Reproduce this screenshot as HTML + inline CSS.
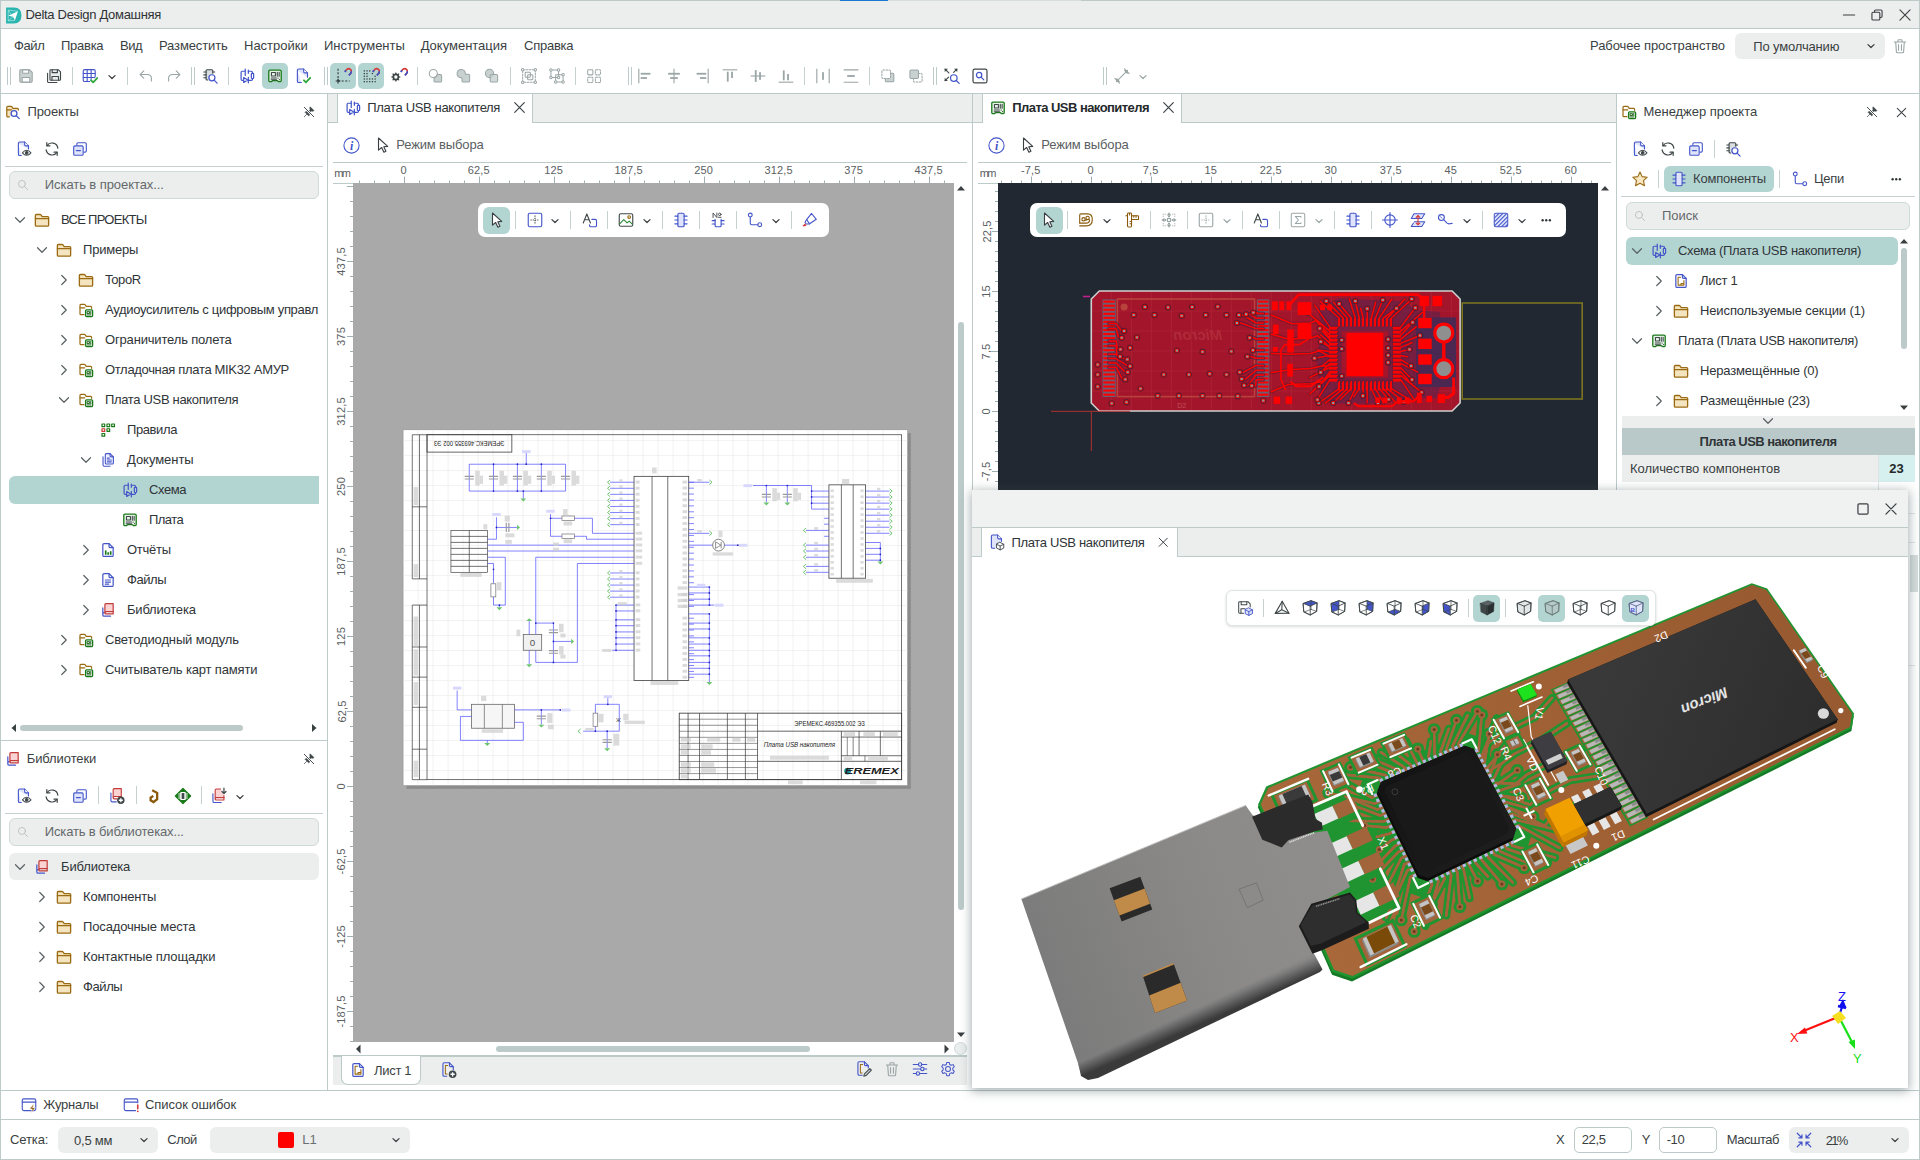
<!DOCTYPE html><html lang="ru"><head><meta charset="utf-8"><title>Delta Design</title><style>
*{margin:0;padding:0}
html,body{width:1920px;height:1160px;overflow:hidden;background:#fff}
body{font-family:"Liberation Sans",sans-serif;position:relative}
.b{position:absolute;display:block}
.t{position:absolute;white-space:nowrap}
#root{position:absolute;left:0;top:0;width:1920px;height:1160px;overflow:hidden;background:#fff}
</style></head><body><div id="root"><div class="b" style="left:0px;top:0px;width:1920px;height:29px;background:#eceeed;"></div><div class="b" style="left:0px;top:28px;width:1920px;height:1px;background:#bccaca;"></div><div class="b" style="left:840px;top:0px;width:48px;height:1px;background:#1976d2;"></div><svg class="b" style="left:4.5px;top:6.5px;" width="17" height="17" viewBox="0 0 16 16"><path d="M1 0.5H8.5Q15.5 0.5 15.5 8Q15.5 15.5 8.5 15.5H1Z" fill="#2ab5b0"/><path d="M3 8.2 12.2 4 9.3 12.6 7.6 9.2Z" fill="#fff"/><path d="M3 3 12.2 4M3 13 9.3 12.6M3 3 3 13M7.6 9.2 3 13M7.6 9.2 3 3" stroke="#bfeeea" stroke-width="0.6" fill="none"/></svg><div class="t" style="left:25.5px;top:6.0px;font-size:13px;line-height:17px;font-weight:400;color:#2f3335;letter-spacing:-0.313px;">Delta Design Домашняя</div><svg class="b" style="left:1840.0px;top:6.0px;" width="18" height="18" viewBox="0 0 16 16"><g  fill="none" stroke="#3a3f42" stroke-width="0.99" stroke-linecap="round" stroke-linejoin="round"><path d="M3 8H13"/></g></svg><svg class="b" style="left:1868.0px;top:6.0px;" width="18" height="18" viewBox="0 0 16 16"><g  fill="none" stroke="#3a3f42" stroke-width="0.99" stroke-linecap="round" stroke-linejoin="round"><rect x="3.5" y="5.5" width="7" height="7" rx="1"/><path d="M5.8 5.3V4.5Q5.8 3.5 6.8 3.5H11.5Q12.5 3.5 12.5 4.5V9.2Q12.5 10.2 11.5 10.2H10.8"/></g></svg><svg class="b" style="left:1896.0px;top:6.0px;" width="18" height="18" viewBox="0 0 16 16"><g  fill="none" stroke="#3a3f42" stroke-width="0.99" stroke-linecap="round" stroke-linejoin="round"><path d="M3.5 3.5 12.5 12.5M12.5 3.5 3.5 12.5"/></g></svg><div class="t" style="left:14.0px;top:36.9px;font-size:13px;line-height:17px;font-weight:400;color:#3a3f42;letter-spacing:-0.390px;">Файл</div><div class="t" style="left:61.0px;top:36.9px;font-size:13px;line-height:17px;font-weight:400;color:#3a3f42;letter-spacing:-0.269px;">Правка</div><div class="t" style="left:120.0px;top:36.9px;font-size:13px;line-height:17px;font-weight:400;color:#3a3f42;letter-spacing:-0.406px;">Вид</div><div class="t" style="left:159.0px;top:36.9px;font-size:13px;line-height:17px;font-weight:400;color:#3a3f42;letter-spacing:-0.119px;">Разместить</div><div class="t" style="left:244.0px;top:36.9px;font-size:13px;line-height:17px;font-weight:400;color:#3a3f42;letter-spacing:-0.005px;">Настройки</div><div class="t" style="left:324.0px;top:36.9px;font-size:13px;line-height:17px;font-weight:400;color:#3a3f42;letter-spacing:-0.032px;">Инструменты</div><div class="t" style="left:420.7px;top:36.9px;font-size:13px;line-height:17px;font-weight:400;color:#3a3f42;letter-spacing:-0.016px;">Документация</div><div class="t" style="left:524.0px;top:36.9px;font-size:13px;line-height:17px;font-weight:400;color:#3a3f42;letter-spacing:-0.242px;">Справка</div><div class="t" style="left:1590.0px;top:36.9px;font-size:13px;line-height:17px;font-weight:400;color:#3a3f42;letter-spacing:-0.087px;">Рабочее пространство</div><div class="b" style="left:1735px;top:33px;width:150px;height:26px;background:#eceeed;border-radius:6px;"></div><div class="t" style="left:1753.3px;top:38.0px;font-size:13px;line-height:17px;font-weight:400;color:#3a3f42;letter-spacing:-0.159px;">По умолчанию</div><svg class="b" style="left:1862.0px;top:37.0px;" width="18" height="18" viewBox="0 0 16 16"><g  fill="none" stroke="#3a3f42" stroke-width="1.12" stroke-linecap="round" stroke-linejoin="round"><path d="M5.3 6.8 8 9.4 10.7 6.8"/></g></svg><svg class="b" style="left:1891.0px;top:37.0px;" width="18" height="18" viewBox="0 0 16 16"><g  fill="none" stroke="#9aa5a5" stroke-width="0.99" stroke-linecap="round" stroke-linejoin="round"><path d="M3 4.5H13M6.2 4.3V3Q6.2 2.4 6.8 2.4H9.2Q9.8 2.4 9.8 3V4.3M4.2 4.7 4.8 13.2Q4.9 14 5.7 14H10.3Q11.1 14 11.2 13.2L11.8 4.7M6.7 6.8V11.8M9.3 6.8V11.8"/></g></svg><div class="b" style="left:0px;top:93px;width:1920px;height:1px;background:#bccaca;"></div><div class="b" style="left:7px;top:67px;width:1px;height:18px;background:#bccaca;"></div><div class="b" style="left:9.5px;top:67px;width:1px;height:18px;background:#bccaca;"></div><svg class="b" style="left:17.0px;top:67.0px;" width="18" height="18" viewBox="0 0 16 16"><g  fill="none" stroke="#9aa5a5" stroke-width="0.99" stroke-linecap="round" stroke-linejoin="round"><path d="M2.5 3.3Q2.5 2.5 3.3 2.5H11.3L13.5 4.7V12.7Q13.5 13.5 12.7 13.5H3.3Q2.5 13.5 2.5 12.7Z" fill="#ccd3d3"/><path d="M5 2.6V5.6H10.4V2.6Z" fill="#fff"/><path d="M4.6 13.4V9.3H11.4V13.4Z" fill="#fff"/></g></svg><svg class="b" style="left:45.0px;top:67.0px;" width="18" height="18" viewBox="0 0 16 16"><g  fill="none" stroke="#3f4749" stroke-width="0.99" stroke-linecap="round" stroke-linejoin="round"><path d="M2.3 5.5V12.8Q2.3 13.8 3.3 13.8H10.6"/><path d="M4.4 3.2Q4.4 2.4 5.2 2.4H11.8L13.8 4.4V11Q13.8 11.8 13 11.8H5.2Q4.4 11.8 4.4 11Z" fill="#e8ecec"/><path d="M6.4 2.5V5H11V2.5M6.2 11.7V8.4H12V11.7"/></g></svg><div class="b" style="left:72px;top:67px;width:1px;height:18px;background:#c6d2d2;"></div><svg class="b" style="left:81.0px;top:67.0px;" width="18" height="18" viewBox="0 0 16 16"><g  fill="none" stroke="#4355c9" stroke-width="0.99" stroke-linecap="round" stroke-linejoin="round"><rect x="2" y="2.3" width="10.6" height="10.6" rx="1.2"/><path d="M2 5.8H12.6M2 9.3H12.6M5.5 2.3V12.9M9 2.3V12.9"/></g><path d="M9 11.8 10.8 13.6 14.4 9.8" fill="none" stroke="#fff" stroke-width="3"/><path d="M9 11.8 10.8 13.6 14.4 9.8" fill="none" stroke="#2fa83c" stroke-width="1.6" stroke-linecap="round" stroke-linejoin="round"/></svg><svg class="b" style="left:103.0px;top:67.5px;" width="18" height="18" viewBox="0 0 16 16"><g  fill="none" stroke="#3a3f42" stroke-width="1.12" stroke-linecap="round" stroke-linejoin="round"><path d="M5.3 6.8 8 9.4 10.7 6.8"/></g></svg><div class="b" style="left:127px;top:67px;width:1px;height:18px;background:#c6d2d2;"></div><svg class="b" style="left:137.0px;top:67.0px;" width="18" height="18" viewBox="0 0 16 16"><g  fill="none" stroke="#9aa5a5" stroke-width="0.99" stroke-linecap="round" stroke-linejoin="round"><path d="M6 3.5 2.8 6.7 6 9.9M2.8 6.7H9.2Q12.8 6.7 12.8 10.3V12.5"/></g></svg><svg class="b" style="left:165.0px;top:67.0px;" width="18" height="18" viewBox="0 0 16 16"><g  fill="none" stroke="#9aa5a5" stroke-width="0.99" stroke-linecap="round" stroke-linejoin="round"><path d="M10 3.5 13.2 6.7 10 9.9M13.2 6.7H6.8Q3.2 6.7 3.2 10.3V12.5"/></g></svg><div class="b" style="left:191px;top:67px;width:1px;height:18px;background:#bccaca;"></div><div class="b" style="left:193.5px;top:67px;width:1px;height:18px;background:#bccaca;"></div><svg class="b" style="left:201.0px;top:67.0px;" width="18" height="18" viewBox="0 0 16 16"><g  fill="none" stroke="#3f4749" stroke-width="0.99" stroke-linecap="round" stroke-linejoin="round"><path d="M10.5 5.5V3.4Q10.5 2.5 9.6 2.5H5.4Q4.5 2.5 4.5 3.4V10.6Q4.5 11.5 5.4 11.5H6" fill="#d9dede"/><path d="M2.5 4.5H4.5M2.5 7H4.5M2.5 9.5H4.5M10.5 4.5H12.2"/></g><g  fill="none" stroke="#4355c9" stroke-width="1.08" stroke-linecap="round" stroke-linejoin="round"><circle cx="9.7" cy="9.6" r="2.7" fill="#fff"/><path d="M11.7 11.7 14.3 14.4"/></g></svg><div class="b" style="left:228px;top:67px;width:1px;height:18px;background:#c6d2d2;"></div><svg class="b" style="left:237.5px;top:67.0px;" width="18" height="18" viewBox="0 0 16 16"><g transform="translate(8 8) scale(0.92) translate(-8 -8)"><g  fill="none" stroke="#4355c9" stroke-width="1.17" stroke-linecap="round" stroke-linejoin="round"><path d="M6.3 3.4H3.4Q2.3 3.4 2.3 4.5V11.2Q2.3 12.3 3.4 12.3H4.2M9.3 3.4H12.2Q13.3 3.4 13.3 4.5V5M9.3 12.3H12.2Q13.3 12.3 13.3 11.2V10.6"/><path d="M6.3 1.4V7.4M9.3 2.4V5.4M9.3 9.2V14.6"/><rect x="12.2" y="5.4" width="2.2" height="5" rx="0.6"/><path d="M4.8 9.4V14.2L8.8 11.8Z"/></g></g></svg><div class="b" style="left:262px;top:63px;width:26px;height:26px;background:#b3d5d2;border-radius:5px;"></div><svg class="b" style="left:266.0px;top:67.0px;" width="18" height="18" viewBox="0 0 16 16"><g transform="translate(8 8) scale(0.92) translate(-8 -8)"><g  fill="none" stroke="#1a7a1a" stroke-width="1.27" stroke-linecap="round" stroke-linejoin="round"><path d="M2 3.5Q2 2.3 3.2 2.3H12.8Q14 2.3 14 3.5V12.3Q14 13.5 12.8 13.5H11.2L10.4 12.5H5.6L4.8 13.5H3.2Q2 13.5 2 12.3Z" fill="#e8f4e8"/></g><g  fill="none" stroke="#3f4749" stroke-width="1.06" stroke-linecap="round" stroke-linejoin="round"><rect x="4.6" y="4.6" width="3.8" height="3.4"/><path d="M10.2 4.4V8.2M12 4.4V8.2M4.4 10H9.4M4.4 11.6H9.4"/></g><circle cx="11" cy="10" r="0.6" fill="#3f4749"/><circle cx="12.4" cy="11.4" r="0.6" fill="#3f4749"/></g></svg><svg class="b" style="left:294.0px;top:67.0px;" width="18" height="18" viewBox="0 0 16 16"><g  fill="none" stroke="#4355c9" stroke-width="0.99" stroke-linecap="round" stroke-linejoin="round"><path d="M3 3Q3 1.8 4.2 1.8H8.6L12 5.2V9M6.5 13.8H4.2Q3 13.8 3 12.6V3" fill="#dfe4fb"/><path d="M8.6 1.8V4.2Q8.6 5.2 9.6 5.2H12" fill="#fff"/></g><path d="M8.8 11.8 10.6 13.6 14.4 9.6" fill="none" stroke="#fff" stroke-width="3"/><path d="M8.8 11.8 10.6 13.6 14.4 9.6" fill="none" stroke="#2fa83c" stroke-width="1.6" stroke-linecap="round" stroke-linejoin="round"/></svg><div class="b" style="left:324px;top:67px;width:1px;height:18px;background:#bccaca;"></div><div class="b" style="left:326.5px;top:67px;width:1px;height:18px;background:#bccaca;"></div><div class="b" style="left:330px;top:63px;width:26px;height:26px;background:#b3d5d2;border-radius:5px;"></div><svg class="b" style="left:334.0px;top:67.0px;" width="18" height="18" viewBox="0 0 16 16"><g stroke-linecap="butt" fill="none" stroke="#2f3537" stroke-width="0.99" stroke-linecap="round" stroke-linejoin="round"><path d="M3.6 1.5V12.5" stroke-dasharray="1.8 1.4"/><path d="M3.6 12.5H14" stroke-dasharray="1.8 1.4"/><path d="M1.5 12.5H5.7M3.6 10.4V14.6"/></g><g transform="translate(2.6 -0.2) scale(0.86)"><path d="M8.2 5.1 10.3 2.6A2.9 2.9 0 0 1 14.6 6.3L12.5 8.8" fill="none" stroke="#d43a3a" stroke-width="1.7"/><path d="M13.6 7.5 12.4 8.9M8.1 5.2 9.4 3.7" fill="none" stroke="#3a52c8" stroke-width="1.8"/><path d="M14.9 4.6A2.9 2.9 0 0 1 14.6 6.3L13.6 7.5" fill="none" stroke="#3a52c8" stroke-width="1.7"/></g></svg><div class="b" style="left:358px;top:63px;width:26px;height:26px;background:#b3d5d2;border-radius:5px;"></div><svg class="b" style="left:362.0px;top:67.0px;" width="18" height="18" viewBox="0 0 16 16"><rect x="1.5" y="2.9" width="1.1" height="1.1" fill="#2f3537"/><rect x="1.5" y="5.3" width="1.1" height="1.1" fill="#2f3537"/><rect x="1.5" y="7.7" width="1.1" height="1.1" fill="#2f3537"/><rect x="1.5" y="10.1" width="1.1" height="1.1" fill="#2f3537"/><rect x="1.5" y="12.5" width="1.1" height="1.1" fill="#2f3537"/><rect x="3.9" y="2.9" width="1.1" height="1.1" fill="#2f3537"/><rect x="3.9" y="5.3" width="1.1" height="1.1" fill="#2f3537"/><rect x="3.9" y="7.7" width="1.1" height="1.1" fill="#2f3537"/><rect x="3.9" y="10.1" width="1.1" height="1.1" fill="#2f3537"/><rect x="3.9" y="12.5" width="1.1" height="1.1" fill="#2f3537"/><rect x="6.3" y="2.9" width="1.1" height="1.1" fill="#2f3537"/><rect x="6.3" y="10.1" width="1.1" height="1.1" fill="#2f3537"/><rect x="6.3" y="12.5" width="1.1" height="1.1" fill="#2f3537"/><rect x="8.7" y="5.3" width="1.1" height="1.1" fill="#2f3537"/><rect x="8.7" y="10.1" width="1.1" height="1.1" fill="#2f3537"/><rect x="8.7" y="12.5" width="1.1" height="1.1" fill="#2f3537"/><rect x="11.1" y="7.7" width="1.1" height="1.1" fill="#2f3537"/><rect x="11.1" y="10.1" width="1.1" height="1.1" fill="#2f3537"/><rect x="11.1" y="12.5" width="1.1" height="1.1" fill="#2f3537"/><g transform="translate(2.6 -0.2) scale(0.86)"><path d="M8.2 5.1 10.3 2.6A2.9 2.9 0 0 1 14.6 6.3L12.5 8.8" fill="none" stroke="#d43a3a" stroke-width="1.7"/><path d="M13.6 7.5 12.4 8.9M8.1 5.2 9.4 3.7" fill="none" stroke="#3a52c8" stroke-width="1.8"/><path d="M14.9 4.6A2.9 2.9 0 0 1 14.6 6.3L13.6 7.5" fill="none" stroke="#3a52c8" stroke-width="1.7"/></g></svg><svg class="b" style="left:390.0px;top:67.0px;" width="18" height="18" viewBox="0 0 16 16"><g transform="translate(0.6 0.4)"><path d="M5.2 7.2 6.1 7.2 6.4 8.3 7.4 8.7 8.4 8.1 9.1 8.8 8.5 9.8 8.9 10.8 10 11.1 10 12.1 8.9 12.4 8.5 13.4 9.1 14.4 8.4 15.1 7.4 14.5 6.4 14.9 6.1 16 5.2 16 4.9 14.9 3.9 14.5 2.9 15.1 2.2 14.4 2.8 13.4 2.4 12.4 1.3 12.1 1.3 11.1 2.4 10.8 2.8 9.8 2.2 8.8 2.9 8.1 3.9 8.7 4.9 8.3Z" fill="#3f4749" transform="translate(-0.6 -2.2) scale(0.92)"/><circle cx="4.6" cy="8.5" r="1.5" fill="#fff"/></g><g transform="translate(2.6 -0.2) scale(0.86)"><path d="M8.2 5.1 10.3 2.6A2.9 2.9 0 0 1 14.6 6.3L12.5 8.8" fill="none" stroke="#d43a3a" stroke-width="1.7"/><path d="M13.6 7.5 12.4 8.9M8.1 5.2 9.4 3.7" fill="none" stroke="#3a52c8" stroke-width="1.8"/><path d="M14.9 4.6A2.9 2.9 0 0 1 14.6 6.3L13.6 7.5" fill="none" stroke="#3a52c8" stroke-width="1.7"/></g></svg><div class="b" style="left:417px;top:67px;width:1px;height:18px;background:#c6d2d2;"></div><svg class="b" style="left:427.0px;top:67.0px;" width="18" height="18" viewBox="0 0 16 16"><g  fill="none" stroke="#9aa5a5" stroke-width="0.9" stroke-linecap="round" stroke-linejoin="round"><circle cx="5.6" cy="5.8" r="3.6"/><path d="M9.2 6.6H12Q13 6.6 13 7.6V12.4Q13 13.4 12 13.4H7.2Q6.2 13.4 6.2 12.4V9.4A3.6 3.6 0 0 0 9.2 6.6Z" fill="#c9d0d0"/></g></svg><svg class="b" style="left:455.0px;top:67.0px;" width="18" height="18" viewBox="0 0 16 16"><g  fill="none" stroke="#9aa5a5" stroke-width="0.9" stroke-linecap="round" stroke-linejoin="round"><path d="M9.2 6.4H12Q13 6.4 13 7.4V12.4Q13 13.4 12 13.4H7.2Q6.2 13.4 6.2 12.4V9.5A3.7 3.7 0 1 1 9.2 6.4Z" fill="#c9d0d0"/></g></svg><svg class="b" style="left:483.0px;top:67.0px;" width="18" height="18" viewBox="0 0 16 16"><g  fill="none" stroke="#9aa5a5" stroke-width="0.9" stroke-linecap="round" stroke-linejoin="round"><circle cx="5.8" cy="5.8" r="3.7" fill="#c9d0d0"/><rect x="6.4" y="6.6" width="6.6" height="6.8" rx="1" fill="#c9d0d0" fill-opacity="0.8"/></g></svg><div class="b" style="left:510px;top:67px;width:1px;height:18px;background:#c6d2d2;"></div><svg class="b" style="left:520.0px;top:67.0px;" width="18" height="18" viewBox="0 0 16 16"><g  fill="none" stroke="#9aa5a5" stroke-width="0.9" stroke-linecap="round" stroke-linejoin="round"><rect x="2.4" y="2.4" width="11.2" height="11.2" stroke-dasharray="1.6 1.2"/><rect x="4.6" y="4.6" width="4.6" height="4.6" rx="0.8" fill="#fff"/><rect x="6.8" y="6.8" width="4.6" height="4.6" rx="0.8"/></g><circle cx="2.4" cy="2.4" r="1.1" fill="#fff" stroke="#9aa5a5" stroke-width="0.9"/><circle cx="13.6" cy="2.4" r="1.1" fill="#fff" stroke="#9aa5a5" stroke-width="0.9"/><circle cx="2.4" cy="13.6" r="1.1" fill="#fff" stroke="#9aa5a5" stroke-width="0.9"/><circle cx="13.6" cy="13.6" r="1.1" fill="#fff" stroke="#9aa5a5" stroke-width="0.9"/></svg><svg class="b" style="left:548.0px;top:67.0px;" width="18" height="18" viewBox="0 0 16 16"><g  fill="none" stroke="#9aa5a5" stroke-width="0.9" stroke-linecap="round" stroke-linejoin="round"><rect x="2.6" y="2.6" width="6.8" height="6.8"/><rect x="6.8" y="6.8" width="6.6" height="6.6"/></g><circle cx="2.6" cy="2.6" r="1.1" fill="#fff" stroke="#9aa5a5" stroke-width="0.9"/><circle cx="9.4" cy="2.6" r="1.1" fill="#fff" stroke="#9aa5a5" stroke-width="0.9"/><circle cx="2.6" cy="9.4" r="1.1" fill="#fff" stroke="#9aa5a5" stroke-width="0.9"/><circle cx="9.4" cy="9.4" r="1.1" fill="#fff" stroke="#9aa5a5" stroke-width="0.9"/><circle cx="13.4" cy="6.8" r="1.1" fill="#fff" stroke="#9aa5a5" stroke-width="0.9"/><circle cx="6.8" cy="13.4" r="1.1" fill="#fff" stroke="#9aa5a5" stroke-width="0.9"/><circle cx="13.4" cy="13.4" r="1.1" fill="#fff" stroke="#9aa5a5" stroke-width="0.9"/></svg><div class="b" style="left:575px;top:67px;width:1px;height:18px;background:#c6d2d2;"></div><svg class="b" style="left:585.0px;top:67.0px;" width="18" height="18" viewBox="0 0 16 16"><g  fill="none" stroke="#9aa5a5" stroke-width="0.9" stroke-linecap="round" stroke-linejoin="round"><rect x="2.4" y="2.4" width="4.6" height="4.6" rx="0.8"/><rect x="9.2" y="2.4" width="4.6" height="4.6" rx="0.8" stroke-dasharray="1.5 1.1"/><rect x="2.4" y="9.2" width="4.6" height="4.6" rx="0.8" stroke-dasharray="1.5 1.1"/><rect x="9.2" y="9.2" width="4.6" height="4.6" rx="0.8" stroke-dasharray="1.5 1.1"/></g></svg><div class="b" style="left:628px;top:67px;width:1px;height:18px;background:#bccaca;"></div><div class="b" style="left:630.5px;top:67px;width:1px;height:18px;background:#bccaca;"></div><svg class="b" style="left:636.0px;top:67.0px;" width="18" height="18" viewBox="0 0 16 16"><g stroke="#9aa5a5" stroke-width="1" fill="none"><path d="M2.5 1.5V14.5"/></g><g fill="#9aa5a5"><rect x="4.2" y="5.2" width="8.6" height="1.6"/><rect x="4.2" y="9" width="5.6" height="1.6"/></g></svg><svg class="b" style="left:664.5px;top:67.0px;" width="18" height="18" viewBox="0 0 16 16"><g stroke="#9aa5a5" stroke-width="1" fill="none"><path d="M8 1.5V14.5"/></g><g fill="#9aa5a5"><rect x="2.8" y="5.2" width="10.4" height="1.6"/><rect x="4.6" y="9" width="6.8" height="1.6"/></g></svg><svg class="b" style="left:693.0px;top:67.0px;" width="18" height="18" viewBox="0 0 16 16"><g stroke="#9aa5a5" stroke-width="1" fill="none"><path d="M13.5 1.5V14.5"/></g><g fill="#9aa5a5"><rect x="3.2" y="5.2" width="8.6" height="1.6"/><rect x="6.2" y="9" width="5.6" height="1.6"/></g></svg><svg class="b" style="left:720.5px;top:67.0px;" width="18" height="18" viewBox="0 0 16 16"><g stroke="#9aa5a5" stroke-width="1" fill="none"><path d="M1.5 2.5H14.5"/></g><g fill="#9aa5a5"><rect x="5.2" y="4.2" width="1.6" height="8.8"/><rect x="9" y="4.2" width="1.6" height="5.6"/></g></svg><svg class="b" style="left:748.5px;top:67.0px;" width="18" height="18" viewBox="0 0 16 16"><g stroke="#9aa5a5" stroke-width="1" fill="none"><path d="M1.5 8H14.5"/></g><g fill="#9aa5a5"><rect x="5.2" y="2.8" width="1.6" height="10.4"/><rect x="9" y="4.6" width="1.6" height="6.8"/></g></svg><svg class="b" style="left:776.5px;top:67.0px;" width="18" height="18" viewBox="0 0 16 16"><g stroke="#9aa5a5" stroke-width="1" fill="none"><path d="M1.5 13.5H14.5"/></g><g fill="#9aa5a5"><rect x="5.2" y="3" width="1.6" height="8.8"/><rect x="9" y="6.2" width="1.6" height="5.6"/></g></svg><div class="b" style="left:804px;top:67px;width:1px;height:18px;background:#c6d2d2;"></div><svg class="b" style="left:813.5px;top:67.0px;" width="18" height="18" viewBox="0 0 16 16"><g stroke="#9aa5a5" stroke-width="1" fill="none"><path d="M2.5 1.5V14.5M13.5 1.5V14.5"/></g><g fill="#9aa5a5"><rect x="7.2" y="4.6" width="1.6" height="6.8"/></g></svg><svg class="b" style="left:842.0px;top:67.0px;" width="18" height="18" viewBox="0 0 16 16"><g stroke="#9aa5a5" stroke-width="1" fill="none"><path d="M1.5 2.5H14.5M1.5 13.5H14.5"/></g><g fill="#9aa5a5"><rect x="4.6" y="7.2" width="6.8" height="1.6"/></g></svg><div class="b" style="left:869px;top:67px;width:1px;height:18px;background:#c6d2d2;"></div><svg class="b" style="left:879.0px;top:67.0px;" width="18" height="18" viewBox="0 0 16 16"><g  fill="none" stroke="#9aa5a5" stroke-width="0.9" stroke-linecap="round" stroke-linejoin="round"><rect x="5.6" y="5.6" width="7.6" height="7.6" rx="1" fill="#c9d0d0"/><rect x="2.6" y="2.6" width="7.6" height="7.6" rx="1" fill="#fff" stroke-dasharray="1.6 1.2"/></g></svg><svg class="b" style="left:907.0px;top:67.0px;" width="18" height="18" viewBox="0 0 16 16"><g  fill="none" stroke="#9aa5a5" stroke-width="0.9" stroke-linecap="round" stroke-linejoin="round"><rect x="5.8" y="5.8" width="7.6" height="7.6" rx="1" stroke-dasharray="1.6 1.2"/><rect x="2.6" y="2.6" width="7.6" height="7.6" rx="1" fill="#c9d0d0"/></g></svg><div class="b" style="left:933px;top:67px;width:1px;height:18px;background:#bccaca;"></div><div class="b" style="left:935.5px;top:67px;width:1px;height:18px;background:#bccaca;"></div><svg class="b" style="left:943.0px;top:67.0px;" width="18" height="18" viewBox="0 0 16 16"><g  fill="none" stroke="#3f4749" stroke-width="0.99" stroke-linecap="round" stroke-linejoin="round"><path d="M1.8 1.8 5.2 5.2M12.4 1.8 9.4 4.8M1.8 12.2 5 9"/></g><path d="M1.5 4.4V1.5H4.4ZM9.8 1.5H12.7V4.4ZM1.5 9.6V12.5H4.4Z" fill="#3f4749" transform="translate(0 0)"/><g  fill="none" stroke="#4355c9" stroke-width="1.08" stroke-linecap="round" stroke-linejoin="round"><circle cx="9.6" cy="9.8" r="2.9" fill="#fff"/><path d="M11.8 12 14.4 14.6"/></g></svg><svg class="b" style="left:971.0px;top:67.0px;" width="18" height="18" viewBox="0 0 16 16"><g  fill="none" stroke="#3f4749" stroke-width="1.08" stroke-linecap="round" stroke-linejoin="round"><rect x="1.8" y="1.8" width="12.4" height="12.4" rx="1.6" fill="#fff"/></g><g  fill="none" stroke="#4355c9" stroke-width="1.08" stroke-linecap="round" stroke-linejoin="round"><circle cx="7.2" cy="7.2" r="2.4"/><path d="M9 9 11.4 11.4"/></g></svg><div class="b" style="left:1103px;top:67px;width:1px;height:18px;background:#bccaca;"></div><div class="b" style="left:1105.5px;top:67px;width:1px;height:18px;background:#bccaca;"></div><svg class="b" style="left:1113.0px;top:67.0px;" width="18" height="18" viewBox="0 0 16 16"><g  fill="none" stroke="#9aa5a5" stroke-width="0.9" stroke-linecap="round" stroke-linejoin="round"><path d="M3 13 13 3M1.6 10.2 5.8 14.4M10.2 1.6 14.4 5.8"/><path d="M3.2 10.4V12.8H5.6ZM12.8 5.6V3.2H10.4Z" fill="#9aa5a5"/></g></svg><svg class="b" style="left:1134.0px;top:68.0px;" width="18" height="18" viewBox="0 0 16 16"><g  fill="none" stroke="#9aa5a5" stroke-width="1.12" stroke-linecap="round" stroke-linejoin="round"><path d="M5.3 6.8 8 9.4 10.7 6.8"/></g></svg><div class="b" style="left:0px;top:0px;width:1px;height:1160px;background:#bccaca;"></div><div class="b" style="left:327px;top:94px;width:1px;height:996px;background:#bccaca;"></div><svg class="b" style="left:4.0px;top:102.5px;" width="18" height="18" viewBox="0 0 16 16"><g transform="translate(8 8) scale(0.92) translate(-8 -8)"><g  fill="none" stroke="#9a6b12" stroke-width="1.17" stroke-linecap="round" stroke-linejoin="round"><path d="M13.2 6V5.4Q13.2 4.5 12.3 4.5H8L7 3Q6.7 2.6 6.2 2.6H2.9Q2 2.6 2 3.5V11.8Q2 12.7 2.9 12.7H4.5" fill="#f4e4bf"/><path d="M2 5.9H6.5"/></g><g  fill="none" stroke="#4355c9" stroke-width="1.27" stroke-linecap="round" stroke-linejoin="round"><circle cx="9" cy="9.4" r="2.8" fill="#fff"/><path d="M11.1 11.5 14 14.4"/></g></g></svg><div class="t" style="left:27.6px;top:103.0px;font-size:13px;line-height:17px;font-weight:400;color:#3a3f42;letter-spacing:-0.166px;">Проекты</div><svg class="b" style="left:301.5px;top:104.5px;" width="14" height="14" viewBox="0 0 16 16"><g  fill="none" stroke="#3f4749" stroke-width="0.81" stroke-linecap="round" stroke-linejoin="round"><path d="M9.6 2.4 13.6 6.4 12.6 7 10.6 6.8 8.4 9 8.6 11.6 7.6 12.4 3.6 8.4 4.4 7.4 7 7.6 9.2 5.4 9 3.4Z" fill="#3f4749"/><path d="M5.6 10.4 2.6 13.4"/></g><path d="M2.6 2.6 13.4 13.4" stroke="#fff" stroke-width="2.6"/><path d="M2.6 2.6 13.4 13.4" stroke="#3f4749" stroke-width="1.1" stroke-linecap="round"/></svg><svg class="b" style="left:15.0px;top:139.5px;" width="18" height="18" viewBox="0 0 16 16"><g  fill="none" stroke="#4355c9" stroke-width="0.99" stroke-linecap="round" stroke-linejoin="round"><path d="M3 3Q3 1.8 4.2 1.8H8.6L12 5.2V8M5.6 13.8H4.2Q3 13.8 3 12.6V3" fill="#dfe4fb"/><path d="M8.6 1.8V4.2Q8.6 5.2 9.6 5.2H12" fill="#fff"/></g><g  fill="none" stroke="#3f4749" stroke-width="0.9" stroke-linecap="round" stroke-linejoin="round"><path d="M6.6 11.4Q8.4 9.2 10.4 9.2Q12.4 9.2 14.2 11.4Q12.4 13.6 10.4 13.6Q8.4 13.6 6.6 11.4Z" fill="#fff"/><circle cx="10.4" cy="11.4" r="1.2" fill="#3f4749"/></g></svg><svg class="b" style="left:43.0px;top:139.5px;" width="18" height="18" viewBox="0 0 16 16"><g  fill="none" stroke="#3f4749" stroke-width="1.08" stroke-linecap="round" stroke-linejoin="round"><path d="M13.2 7.2A5.3 5.3 0 0 0 3.6 5M2.8 8.8A5.3 5.3 0 0 0 12.4 11"/><path d="M3.4 2.4V5.2H6.2M12.6 13.6V10.8H9.8"/></g></svg><svg class="b" style="left:71.0px;top:139.5px;" width="18" height="18" viewBox="0 0 16 16"><g  fill="none" stroke="#4355c9" stroke-width="0.99" stroke-linecap="round" stroke-linejoin="round"><path d="M5.2 4.2V3.4Q5.2 2.4 6.2 2.4H12.6Q13.6 2.4 13.6 3.4V9.8Q13.6 10.8 12.6 10.8H11.8"/><rect x="2.4" y="5.2" width="8.4" height="8.4" rx="1" fill="#dfe4fb"/><path d="M4.8 9.4H8.4"/></g></svg><div class="b" style="left:5px;top:166px;width:318px;height:1px;background:#c6d2d2;"></div><div class="b" style="left:9px;top:171.3px;width:310px;height:27.4px;background:#eceeed;border:1px solid #cfdada;box-sizing:border-box;border-radius:6px;"></div><svg class="b" style="left:16.0px;top:178.0px;" width="14" height="14" viewBox="0 0 16 16"><g  fill="none" stroke="#b5bebe" stroke-width="0.99" stroke-linecap="round" stroke-linejoin="round"><circle cx="6.8" cy="6.8" r="4"/><path d="M9.8 9.8 13.4 13.4"/></g></svg><div class="t" style="left:44.8px;top:176.2px;font-size:13px;line-height:17px;font-weight:400;color:#64696c;letter-spacing:-0.077px;">Искать в проектах...</div><div class="b" style="left:0;top:200px;width:319px;height:500px;overflow:hidden"><svg class="b" style="left:11.0px;top:10.5px;" width="18" height="18" viewBox="0 0 16 16"><g  fill="none" stroke="#5a6264" stroke-width="1.08" stroke-linecap="round" stroke-linejoin="round"><path d="M4 6 8 10 12 6"/></g></svg><svg class="b" style="left:33px;top:10.5px;" width="18" height="18" viewBox="0 0 16 16"><g transform="translate(8 8) scale(0.92) translate(-8 -8)"><g  fill="none" stroke="#9a6b12" stroke-width="1.27" stroke-linecap="round" stroke-linejoin="round"><path d="M1.6 4V13Q1.6 13.9 2.5 13.9H13.5Q14.4 13.9 14.4 13V5.6Q14.4 4.7 13.5 4.7H8.2L7 3.1Q6.7 2.7 6.2 2.7H2.5Q1.6 2.7 1.6 3.6Z" fill="#f4e4bf"/><path d="M1.6 6.6H14.4"/></g></g></svg><div class="t" style="left:61.0px;top:11.0px;font-size:13px;line-height:17px;font-weight:400;color:#2f3437;letter-spacing:-0.713px;">ВСЕ ПРОЕКТЫ</div><svg class="b" style="left:33.0px;top:40.5px;" width="18" height="18" viewBox="0 0 16 16"><g  fill="none" stroke="#5a6264" stroke-width="1.08" stroke-linecap="round" stroke-linejoin="round"><path d="M4 6 8 10 12 6"/></g></svg><svg class="b" style="left:55px;top:40.5px;" width="18" height="18" viewBox="0 0 16 16"><g transform="translate(8 8) scale(0.92) translate(-8 -8)"><g  fill="none" stroke="#9a6b12" stroke-width="1.27" stroke-linecap="round" stroke-linejoin="round"><path d="M1.6 4V13Q1.6 13.9 2.5 13.9H13.5Q14.4 13.9 14.4 13V5.6Q14.4 4.7 13.5 4.7H8.2L7 3.1Q6.7 2.7 6.2 2.7H2.5Q1.6 2.7 1.6 3.6Z" fill="#f4e4bf"/><path d="M1.6 6.6H14.4"/></g></g></svg><div class="t" style="left:83.0px;top:41.0px;font-size:13px;line-height:17px;font-weight:400;color:#2f3437;letter-spacing:-0.196px;">Примеры</div><svg class="b" style="left:55.0px;top:70.5px;" width="18" height="18" viewBox="0 0 16 16"><g  fill="none" stroke="#5a6264" stroke-width="1.08" stroke-linecap="round" stroke-linejoin="round"><path d="M6 4 10 8 6 12"/></g></svg><svg class="b" style="left:77px;top:70.5px;" width="18" height="18" viewBox="0 0 16 16"><g transform="translate(8 8) scale(0.92) translate(-8 -8)"><g  fill="none" stroke="#9a6b12" stroke-width="1.27" stroke-linecap="round" stroke-linejoin="round"><path d="M1.6 4V13Q1.6 13.9 2.5 13.9H13.5Q14.4 13.9 14.4 13V5.6Q14.4 4.7 13.5 4.7H8.2L7 3.1Q6.7 2.7 6.2 2.7H2.5Q1.6 2.7 1.6 3.6Z" fill="#f4e4bf"/><path d="M1.6 6.6H14.4"/></g></g></svg><div class="t" style="left:105.0px;top:71.0px;font-size:13px;line-height:17px;font-weight:400;color:#2f3437;letter-spacing:-0.335px;">TopoR</div><svg class="b" style="left:55.0px;top:100.5px;" width="18" height="18" viewBox="0 0 16 16"><g  fill="none" stroke="#5a6264" stroke-width="1.08" stroke-linecap="round" stroke-linejoin="round"><path d="M6 4 10 8 6 12"/></g></svg><svg class="b" style="left:77px;top:100.5px;" width="18" height="18" viewBox="0 0 16 16"><g transform="translate(8 8) scale(0.92) translate(-8 -8)"><g  fill="none" stroke="#9a6b12" stroke-width="1.17" stroke-linecap="round" stroke-linejoin="round"><path d="M13.4 6.4V5.4Q13.4 4.5 12.5 4.5H8.2L7.2 3Q6.9 2.6 6.4 2.6H3.1Q2.2 2.6 2.2 3.5V11.6Q2.2 12.5 3.1 12.5H6" fill="#fff"/><path d="M2.2 5.9H6.8"/></g><g  fill="none" stroke="#1a7a1a" stroke-width="1.27" stroke-linecap="round" stroke-linejoin="round"><rect x="7.6" y="7.8" width="6.8" height="6.6" rx="1" fill="#e8f4e8"/></g><g  fill="none" stroke="#145a14" stroke-width="0.85" stroke-linecap="round" stroke-linejoin="round"><rect x="9.4" y="9.6" width="2" height="1.8"/><path d="M12.6 9.4V11.6M9.2 12.8H12.6"/></g></g></svg><div class="t" style="left:105.0px;top:101.0px;font-size:13px;line-height:17px;font-weight:400;color:#2f3437;letter-spacing:-0.313px;">Аудиоусилитель с цифровым управл</div><svg class="b" style="left:55.0px;top:130.5px;" width="18" height="18" viewBox="0 0 16 16"><g  fill="none" stroke="#5a6264" stroke-width="1.08" stroke-linecap="round" stroke-linejoin="round"><path d="M6 4 10 8 6 12"/></g></svg><svg class="b" style="left:77px;top:130.5px;" width="18" height="18" viewBox="0 0 16 16"><g transform="translate(8 8) scale(0.92) translate(-8 -8)"><g  fill="none" stroke="#9a6b12" stroke-width="1.17" stroke-linecap="round" stroke-linejoin="round"><path d="M13.4 6.4V5.4Q13.4 4.5 12.5 4.5H8.2L7.2 3Q6.9 2.6 6.4 2.6H3.1Q2.2 2.6 2.2 3.5V11.6Q2.2 12.5 3.1 12.5H6" fill="#fff"/><path d="M2.2 5.9H6.8"/></g><g  fill="none" stroke="#1a7a1a" stroke-width="1.27" stroke-linecap="round" stroke-linejoin="round"><rect x="7.6" y="7.8" width="6.8" height="6.6" rx="1" fill="#e8f4e8"/></g><g  fill="none" stroke="#145a14" stroke-width="0.85" stroke-linecap="round" stroke-linejoin="round"><rect x="9.4" y="9.6" width="2" height="1.8"/><path d="M12.6 9.4V11.6M9.2 12.8H12.6"/></g></g></svg><div class="t" style="left:105.0px;top:131.0px;font-size:13px;line-height:17px;font-weight:400;color:#2f3437;letter-spacing:-0.166px;">Ограничитель полета</div><svg class="b" style="left:55.0px;top:160.5px;" width="18" height="18" viewBox="0 0 16 16"><g  fill="none" stroke="#5a6264" stroke-width="1.08" stroke-linecap="round" stroke-linejoin="round"><path d="M6 4 10 8 6 12"/></g></svg><svg class="b" style="left:77px;top:160.5px;" width="18" height="18" viewBox="0 0 16 16"><g transform="translate(8 8) scale(0.92) translate(-8 -8)"><g  fill="none" stroke="#9a6b12" stroke-width="1.17" stroke-linecap="round" stroke-linejoin="round"><path d="M13.4 6.4V5.4Q13.4 4.5 12.5 4.5H8.2L7.2 3Q6.9 2.6 6.4 2.6H3.1Q2.2 2.6 2.2 3.5V11.6Q2.2 12.5 3.1 12.5H6" fill="#fff"/><path d="M2.2 5.9H6.8"/></g><g  fill="none" stroke="#1a7a1a" stroke-width="1.27" stroke-linecap="round" stroke-linejoin="round"><rect x="7.6" y="7.8" width="6.8" height="6.6" rx="1" fill="#e8f4e8"/></g><g  fill="none" stroke="#145a14" stroke-width="0.85" stroke-linecap="round" stroke-linejoin="round"><rect x="9.4" y="9.6" width="2" height="1.8"/><path d="M12.6 9.4V11.6M9.2 12.8H12.6"/></g></g></svg><div class="t" style="left:105.0px;top:161.0px;font-size:13px;line-height:17px;font-weight:400;color:#2f3437;letter-spacing:-0.329px;">Отладочная плата MIK32 АМУР</div><svg class="b" style="left:55.0px;top:190.5px;" width="18" height="18" viewBox="0 0 16 16"><g  fill="none" stroke="#5a6264" stroke-width="1.08" stroke-linecap="round" stroke-linejoin="round"><path d="M4 6 8 10 12 6"/></g></svg><svg class="b" style="left:77px;top:190.5px;" width="18" height="18" viewBox="0 0 16 16"><g transform="translate(8 8) scale(0.92) translate(-8 -8)"><g  fill="none" stroke="#9a6b12" stroke-width="1.17" stroke-linecap="round" stroke-linejoin="round"><path d="M13.4 6.4V5.4Q13.4 4.5 12.5 4.5H8.2L7.2 3Q6.9 2.6 6.4 2.6H3.1Q2.2 2.6 2.2 3.5V11.6Q2.2 12.5 3.1 12.5H6" fill="#fff"/><path d="M2.2 5.9H6.8"/></g><g  fill="none" stroke="#1a7a1a" stroke-width="1.27" stroke-linecap="round" stroke-linejoin="round"><rect x="7.6" y="7.8" width="6.8" height="6.6" rx="1" fill="#e8f4e8"/></g><g  fill="none" stroke="#145a14" stroke-width="0.85" stroke-linecap="round" stroke-linejoin="round"><rect x="9.4" y="9.6" width="2" height="1.8"/><path d="M12.6 9.4V11.6M9.2 12.8H12.6"/></g></g></svg><div class="t" style="left:105.0px;top:191.0px;font-size:13px;line-height:17px;font-weight:400;color:#2f3437;letter-spacing:-0.333px;">Плата USB накопителя</div><svg class="b" style="left:99px;top:220.5px;" width="18" height="18" viewBox="0 0 16 16"><g transform="translate(8 8) scale(0.92) translate(-8 -8)"><g  fill="none" stroke="#1a7a1a" stroke-width="1.17" stroke-linecap="round" stroke-linejoin="round"><rect x="2.2" y="2.2" width="2.6" height="2.6"/></g><g  fill="none" stroke="#1a7a1a" stroke-width="1.17" stroke-linecap="round" stroke-linejoin="round"><rect x="7" y="2.2" width="2.6" height="2.6"/></g><g  fill="none" stroke="#1a7a1a" stroke-width="1.17" stroke-linecap="round" stroke-linejoin="round"><rect x="11.6" y="2.2" width="2.6" height="2.6"/></g><g  fill="none" stroke="#d43a3a" stroke-width="1.17" stroke-linecap="round" stroke-linejoin="round"><rect x="2.2" y="6.8" width="2.6" height="2.6"/></g><g  fill="none" stroke="#1a7a1a" stroke-width="1.17" stroke-linecap="round" stroke-linejoin="round"><rect x="7" y="6.8" width="2.6" height="2.6"/></g><g  fill="none" stroke="#1a7a1a" stroke-width="1.17" stroke-linecap="round" stroke-linejoin="round"><rect x="2.2" y="11.4" width="2.6" height="2.6"/></g></g></svg><div class="t" style="left:127.0px;top:221.0px;font-size:13px;line-height:17px;font-weight:400;color:#2f3437;letter-spacing:-0.398px;">Правила</div><svg class="b" style="left:77.0px;top:250.5px;" width="18" height="18" viewBox="0 0 16 16"><g  fill="none" stroke="#5a6264" stroke-width="1.08" stroke-linecap="round" stroke-linejoin="round"><path d="M4 6 8 10 12 6"/></g></svg><svg class="b" style="left:99px;top:250.5px;" width="18" height="18" viewBox="0 0 16 16"><g transform="translate(8 8) scale(0.92) translate(-8 -8)"><g  fill="none" stroke="#4355c9" stroke-width="1.06" stroke-linecap="round" stroke-linejoin="round"><path d="M3.2 4.8V12.8Q3.2 14 4.4 14H10"/><path d="M5.4 2.8Q5.4 1.8 6.4 1.8H10L13.2 5V10.8Q13.2 11.8 12.2 11.8H6.4Q5.4 11.8 5.4 10.8Z" fill="#eef0fd"/><path d="M10 1.8V4Q10 5 11 5H13.2"/><path d="M7.4 6.2H9.2M7.4 8H11.2M7.4 9.8H11.2"/></g></g></svg><div class="t" style="left:127.0px;top:251.0px;font-size:13px;line-height:17px;font-weight:400;color:#2f3437;letter-spacing:-0.045px;">Документы</div><div class="b" style="left:9px;top:276.0px;width:311px;height:28px;background:#b3d5d2;border-radius:6px 0 0 6px;"></div><svg class="b" style="left:121px;top:280.5px;" width="18" height="18" viewBox="0 0 16 16"><g transform="translate(8 8) scale(0.92) translate(-8 -8)"><g  fill="none" stroke="#4355c9" stroke-width="1.17" stroke-linecap="round" stroke-linejoin="round"><path d="M6.3 3.4H3.4Q2.3 3.4 2.3 4.5V11.2Q2.3 12.3 3.4 12.3H4.2M9.3 3.4H12.2Q13.3 3.4 13.3 4.5V5M9.3 12.3H12.2Q13.3 12.3 13.3 11.2V10.6"/><path d="M6.3 1.4V7.4M9.3 2.4V5.4M9.3 9.2V14.6"/><rect x="12.2" y="5.4" width="2.2" height="5" rx="0.6"/><path d="M4.8 9.4V14.2L8.8 11.8Z"/></g></g></svg><div class="t" style="left:149.0px;top:281.0px;font-size:13px;line-height:17px;font-weight:400;color:#2f3437;letter-spacing:-0.428px;">Схема</div><svg class="b" style="left:121px;top:310.5px;" width="18" height="18" viewBox="0 0 16 16"><g transform="translate(8 8) scale(0.92) translate(-8 -8)"><g  fill="none" stroke="#1a7a1a" stroke-width="1.27" stroke-linecap="round" stroke-linejoin="round"><path d="M2 3.5Q2 2.3 3.2 2.3H12.8Q14 2.3 14 3.5V12.3Q14 13.5 12.8 13.5H11.2L10.4 12.5H5.6L4.8 13.5H3.2Q2 13.5 2 12.3Z" fill="#e8f4e8"/></g><g  fill="none" stroke="#3f4749" stroke-width="1.06" stroke-linecap="round" stroke-linejoin="round"><rect x="4.6" y="4.6" width="3.8" height="3.4"/><path d="M10.2 4.4V8.2M12 4.4V8.2M4.4 10H9.4M4.4 11.6H9.4"/></g><circle cx="11" cy="10" r="0.6" fill="#3f4749"/><circle cx="12.4" cy="11.4" r="0.6" fill="#3f4749"/></g></svg><div class="t" style="left:149.0px;top:311.0px;font-size:13px;line-height:17px;font-weight:400;color:#2f3437;letter-spacing:-0.542px;">Плата</div><svg class="b" style="left:77.0px;top:340.5px;" width="18" height="18" viewBox="0 0 16 16"><g  fill="none" stroke="#5a6264" stroke-width="1.08" stroke-linecap="round" stroke-linejoin="round"><path d="M6 4 10 8 6 12"/></g></svg><svg class="b" style="left:99px;top:340.5px;" width="18" height="18" viewBox="0 0 16 16"><g transform="translate(8 8) scale(0.92) translate(-8 -8)"><g  fill="none" stroke="#4355c9" stroke-width="1.17" stroke-linecap="round" stroke-linejoin="round"><path d="M3 3Q3 1.8 4.2 1.8H9L13 5.8V13Q13 14.2 11.8 14.2H4.2Q3 14.2 3 13Z" fill="#fff"/><path d="M9 1.8V4.6Q9 5.8 10.2 5.8H13"/></g><rect x="5" y="8.4" width="1.6" height="4.2" fill="#1a7a1a"/><rect x="7.4" y="10.2" width="1.6" height="2.4" fill="#1a7a1a"/><rect x="9.8" y="9.2" width="1.6" height="3.4" fill="#1a7a1a"/></g></svg><div class="t" style="left:127.0px;top:341.0px;font-size:13px;line-height:17px;font-weight:400;color:#2f3437;letter-spacing:-0.261px;">Отчёты</div><svg class="b" style="left:77.0px;top:370.5px;" width="18" height="18" viewBox="0 0 16 16"><g  fill="none" stroke="#5a6264" stroke-width="1.08" stroke-linecap="round" stroke-linejoin="round"><path d="M6 4 10 8 6 12"/></g></svg><svg class="b" style="left:99px;top:370.5px;" width="18" height="18" viewBox="0 0 16 16"><g transform="translate(8 8) scale(0.92) translate(-8 -8)"><g  fill="none" stroke="#4355c9" stroke-width="1.17" stroke-linecap="round" stroke-linejoin="round"><path d="M3 3Q3 1.8 4.2 1.8H9L13 5.8V13Q13 14.2 11.8 14.2H4.2Q3 14.2 3 13Z" fill="#fff"/><path d="M9 1.8V4.6Q9 5.8 10.2 5.8H13"/><path d="M5.4 8H10.4M5.4 10H10.4M5.4 12H8.6"/></g></g></svg><div class="t" style="left:127.0px;top:371.0px;font-size:13px;line-height:17px;font-weight:400;color:#2f3437;letter-spacing:-0.441px;">Файлы</div><svg class="b" style="left:77.0px;top:400.5px;" width="18" height="18" viewBox="0 0 16 16"><g  fill="none" stroke="#5a6264" stroke-width="1.08" stroke-linecap="round" stroke-linejoin="round"><path d="M6 4 10 8 6 12"/></g></svg><svg class="b" style="left:99px;top:400.5px;" width="18" height="18" viewBox="0 0 16 16"><g transform="translate(8 8) scale(0.92) translate(-8 -8)"><g  fill="none" stroke="#4355c9" stroke-width="1.17" stroke-linecap="round" stroke-linejoin="round"><path d="M3 6V12.8Q3 14 4.2 14H10.4M3 11.6Q3 10.6 4.2 10.6" /></g><g  fill="none" stroke="#c23a3a" stroke-width="1.17" stroke-linecap="round" stroke-linejoin="round"><path d="M5 2.8Q5 1.8 6 1.8H13V9.6H6Q5 9.6 5 10.6Z" fill="#fbd3d3"/><path d="M5 10.6Q5 11.8 6 11.8H13V9.6"/></g></g></svg><div class="t" style="left:127.0px;top:401.0px;font-size:13px;line-height:17px;font-weight:400;color:#2f3437;letter-spacing:-0.199px;">Библиотека</div><svg class="b" style="left:55.0px;top:430.5px;" width="18" height="18" viewBox="0 0 16 16"><g  fill="none" stroke="#5a6264" stroke-width="1.08" stroke-linecap="round" stroke-linejoin="round"><path d="M6 4 10 8 6 12"/></g></svg><svg class="b" style="left:77px;top:430.5px;" width="18" height="18" viewBox="0 0 16 16"><g transform="translate(8 8) scale(0.92) translate(-8 -8)"><g  fill="none" stroke="#9a6b12" stroke-width="1.17" stroke-linecap="round" stroke-linejoin="round"><path d="M13.4 6.4V5.4Q13.4 4.5 12.5 4.5H8.2L7.2 3Q6.9 2.6 6.4 2.6H3.1Q2.2 2.6 2.2 3.5V11.6Q2.2 12.5 3.1 12.5H6" fill="#fff"/><path d="M2.2 5.9H6.8"/></g><g  fill="none" stroke="#1a7a1a" stroke-width="1.27" stroke-linecap="round" stroke-linejoin="round"><rect x="7.6" y="7.8" width="6.8" height="6.6" rx="1" fill="#e8f4e8"/></g><g  fill="none" stroke="#145a14" stroke-width="0.85" stroke-linecap="round" stroke-linejoin="round"><rect x="9.4" y="9.6" width="2" height="1.8"/><path d="M12.6 9.4V11.6M9.2 12.8H12.6"/></g></g></svg><div class="t" style="left:105.0px;top:431.0px;font-size:13px;line-height:17px;font-weight:400;color:#2f3437;letter-spacing:-0.137px;">Светодиодный модуль</div><svg class="b" style="left:55.0px;top:460.5px;" width="18" height="18" viewBox="0 0 16 16"><g  fill="none" stroke="#5a6264" stroke-width="1.08" stroke-linecap="round" stroke-linejoin="round"><path d="M6 4 10 8 6 12"/></g></svg><svg class="b" style="left:77px;top:460.5px;" width="18" height="18" viewBox="0 0 16 16"><g transform="translate(8 8) scale(0.92) translate(-8 -8)"><g  fill="none" stroke="#9a6b12" stroke-width="1.17" stroke-linecap="round" stroke-linejoin="round"><path d="M13.4 6.4V5.4Q13.4 4.5 12.5 4.5H8.2L7.2 3Q6.9 2.6 6.4 2.6H3.1Q2.2 2.6 2.2 3.5V11.6Q2.2 12.5 3.1 12.5H6" fill="#fff"/><path d="M2.2 5.9H6.8"/></g><g  fill="none" stroke="#1a7a1a" stroke-width="1.27" stroke-linecap="round" stroke-linejoin="round"><rect x="7.6" y="7.8" width="6.8" height="6.6" rx="1" fill="#e8f4e8"/></g><g  fill="none" stroke="#145a14" stroke-width="0.85" stroke-linecap="round" stroke-linejoin="round"><rect x="9.4" y="9.6" width="2" height="1.8"/><path d="M12.6 9.4V11.6M9.2 12.8H12.6"/></g></g></svg><div class="t" style="left:105.0px;top:461.0px;font-size:13px;line-height:17px;font-weight:400;color:#2f3437;letter-spacing:-0.162px;">Считыватель карт памяти</div></div><div class="b" style="left:20px;top:725px;width:223px;height:6px;background:#bccaca;border-radius:3px;"></div><svg class="b" style="left:10px;top:723px;" width="8" height="10" viewBox="0 0 8 10"><path d="M6 1 1.5 5 6 9Z" fill="#3a3f42"/></svg><svg class="b" style="left:310px;top:723px;" width="8" height="10" viewBox="0 0 8 10"><path d="M2 1 6.5 5 2 9Z" fill="#3a3f42"/></svg><div class="b" style="left:0px;top:740px;width:328px;height:1px;background:#bccaca;"></div><svg class="b" style="left:4.0px;top:749.5px;" width="18" height="18" viewBox="0 0 16 16"><g transform="translate(8 8) scale(0.92) translate(-8 -8)"><g  fill="none" stroke="#4355c9" stroke-width="1.17" stroke-linecap="round" stroke-linejoin="round"><path d="M3 6V12.8Q3 14 4.2 14H10.4M3 11.6Q3 10.6 4.2 10.6" /></g><g  fill="none" stroke="#c23a3a" stroke-width="1.17" stroke-linecap="round" stroke-linejoin="round"><path d="M5 2.8Q5 1.8 6 1.8H13V9.6H6Q5 9.6 5 10.6Z" fill="#fbd3d3"/><path d="M5 10.6Q5 11.8 6 11.8H13V9.6"/></g></g></svg><div class="t" style="left:26.7px;top:750.0px;font-size:13px;line-height:17px;font-weight:400;color:#3a3f42;letter-spacing:-0.083px;">Библиотеки</div><svg class="b" style="left:301.5px;top:751.5px;" width="14" height="14" viewBox="0 0 16 16"><g  fill="none" stroke="#3f4749" stroke-width="0.81" stroke-linecap="round" stroke-linejoin="round"><path d="M9.6 2.4 13.6 6.4 12.6 7 10.6 6.8 8.4 9 8.6 11.6 7.6 12.4 3.6 8.4 4.4 7.4 7 7.6 9.2 5.4 9 3.4Z" fill="#3f4749"/><path d="M5.6 10.4 2.6 13.4"/></g><path d="M2.6 2.6 13.4 13.4" stroke="#fff" stroke-width="2.6"/><path d="M2.6 2.6 13.4 13.4" stroke="#3f4749" stroke-width="1.1" stroke-linecap="round"/></svg><svg class="b" style="left:15.0px;top:786.5px;" width="18" height="18" viewBox="0 0 16 16"><g  fill="none" stroke="#4355c9" stroke-width="0.99" stroke-linecap="round" stroke-linejoin="round"><path d="M3 3Q3 1.8 4.2 1.8H8.6L12 5.2V8M5.6 13.8H4.2Q3 13.8 3 12.6V3" fill="#dfe4fb"/><path d="M8.6 1.8V4.2Q8.6 5.2 9.6 5.2H12" fill="#fff"/></g><g  fill="none" stroke="#3f4749" stroke-width="0.9" stroke-linecap="round" stroke-linejoin="round"><path d="M6.6 11.4Q8.4 9.2 10.4 9.2Q12.4 9.2 14.2 11.4Q12.4 13.6 10.4 13.6Q8.4 13.6 6.6 11.4Z" fill="#fff"/><circle cx="10.4" cy="11.4" r="1.2" fill="#3f4749"/></g></svg><svg class="b" style="left:43.0px;top:786.5px;" width="18" height="18" viewBox="0 0 16 16"><g  fill="none" stroke="#3f4749" stroke-width="1.08" stroke-linecap="round" stroke-linejoin="round"><path d="M13.2 7.2A5.3 5.3 0 0 0 3.6 5M2.8 8.8A5.3 5.3 0 0 0 12.4 11"/><path d="M3.4 2.4V5.2H6.2M12.6 13.6V10.8H9.8"/></g></svg><svg class="b" style="left:71.0px;top:786.5px;" width="18" height="18" viewBox="0 0 16 16"><g  fill="none" stroke="#4355c9" stroke-width="0.99" stroke-linecap="round" stroke-linejoin="round"><path d="M5.2 4.2V3.4Q5.2 2.4 6.2 2.4H12.6Q13.6 2.4 13.6 3.4V9.8Q13.6 10.8 12.6 10.8H11.8"/><rect x="2.4" y="5.2" width="8.4" height="8.4" rx="1" fill="#dfe4fb"/><path d="M4.8 9.4H8.4"/></g></svg><svg class="b" style="left:108.0px;top:786.5px;" width="18" height="18" viewBox="0 0 16 16"><g  fill="none" stroke="#4355c9" stroke-width="0.99" stroke-linecap="round" stroke-linejoin="round"><path d="M2.6 5.4V12Q2.6 13.2 3.8 13.2H7.4"/></g><g  fill="none" stroke="#c23a3a" stroke-width="0.99" stroke-linecap="round" stroke-linejoin="round"><path d="M4.6 2.4Q4.6 1.4 5.6 1.4H11.8V8.4H5.6Q4.6 8.4 4.6 9.4Z" fill="#fbd3d3"/><path d="M4.6 9.4Q4.6 10.6 5.6 10.6H8M11.8 8.4V9"/></g><circle cx="11.4" cy="11.8" r="3.3" fill="#3f4749"/><path d="M9.6 11.8H13.2M11.4 10V13.6" stroke="#fff" stroke-width="1.2"/></svg><svg class="b" style="left:145.0px;top:786.5px;" width="18" height="18" viewBox="0 0 16 16"><g stroke-linecap="butt" stroke-linejoin="miter" fill="none" stroke="#8a5a0a" stroke-width="2.07" stroke-linecap="round" stroke-linejoin="round"><path d="M6.4 2.8 10.8 5.2V10.8L7.6 13.4 5 11.8V9.4L7.4 8"/></g></svg><svg class="b" style="left:173.5px;top:786.5px;" width="18" height="18" viewBox="0 0 16 16"><path d="M8 1.2 14.8 8 8 14.8 1.2 8Z" fill="#1a7a1a" stroke="#1a7a1a" stroke-width="1" stroke-linejoin="round"/><path d="M3.8 6.2H12.2M3.8 8H12.2M3.8 9.8H12.2" stroke="#fff" stroke-width="0.9"/><rect x="5.6" y="4.4" width="4.8" height="7.2" rx="0.6" fill="#fff"/><rect x="6.8" y="5.4" width="2.4" height="5.2" fill="#3f4749"/></svg><svg class="b" style="left:210.0px;top:786.5px;" width="18" height="18" viewBox="0 0 16 16"><g  fill="none" stroke="#4355c9" stroke-width="0.99" stroke-linecap="round" stroke-linejoin="round"><path d="M2.6 6V12.6Q2.6 13.8 3.8 13.8H10"/></g><g  fill="none" stroke="#c23a3a" stroke-width="0.99" stroke-linecap="round" stroke-linejoin="round"><path d="M9.4 1.8H5.6Q4.6 1.8 4.6 2.8V10.4Q4.6 9.4 5.6 9.4H12.4V7.6" fill="#fbd3d3"/><path d="M4.6 10.4Q4.6 11.6 5.6 11.6H12.4V9.4"/></g><g  fill="none" stroke="#3f4749" stroke-width="1.08" stroke-linecap="round" stroke-linejoin="round"><path d="M12.4 1V5.6M10.6 4 12.4 5.8 14.2 4"/></g></svg><svg class="b" style="left:231.0px;top:787.5px;" width="18" height="18" viewBox="0 0 16 16"><g  fill="none" stroke="#3a3f42" stroke-width="1.12" stroke-linecap="round" stroke-linejoin="round"><path d="M5.3 6.8 8 9.4 10.7 6.8"/></g></svg><div class="b" style="left:98px;top:786px;width:1px;height:18px;background:#c6d2d2;"></div><div class="b" style="left:135.5px;top:786px;width:1px;height:18px;background:#c6d2d2;"></div><div class="b" style="left:200.5px;top:786px;width:1px;height:18px;background:#c6d2d2;"></div><div class="b" style="left:5px;top:813px;width:318px;height:1px;background:#c6d2d2;"></div><div class="b" style="left:9px;top:818.3px;width:310px;height:27.4px;background:#eceeed;border:1px solid #cfdada;box-sizing:border-box;border-radius:6px;"></div><svg class="b" style="left:16.0px;top:825.0px;" width="14" height="14" viewBox="0 0 16 16"><g  fill="none" stroke="#b5bebe" stroke-width="0.99" stroke-linecap="round" stroke-linejoin="round"><circle cx="6.8" cy="6.8" r="4"/><path d="M9.8 9.8 13.4 13.4"/></g></svg><div class="t" style="left:44.8px;top:823.2px;font-size:13px;line-height:17px;font-weight:400;color:#64696c;letter-spacing:-0.154px;">Искать в библиотеках...</div><div class="b" style="left:9px;top:853px;width:310px;height:27px;background:#eceeed;border-radius:6px;"></div><svg class="b" style="left:11.0px;top:857.5px;" width="18" height="18" viewBox="0 0 16 16"><g  fill="none" stroke="#5a6264" stroke-width="1.08" stroke-linecap="round" stroke-linejoin="round"><path d="M4 6 8 10 12 6"/></g></svg><svg class="b" style="left:33px;top:857.5px;" width="18" height="18" viewBox="0 0 16 16"><g transform="translate(8 8) scale(0.92) translate(-8 -8)"><g  fill="none" stroke="#4355c9" stroke-width="1.17" stroke-linecap="round" stroke-linejoin="round"><path d="M3 6V12.8Q3 14 4.2 14H10.4M3 11.6Q3 10.6 4.2 10.6" /></g><g  fill="none" stroke="#c23a3a" stroke-width="1.17" stroke-linecap="round" stroke-linejoin="round"><path d="M5 2.8Q5 1.8 6 1.8H13V9.6H6Q5 9.6 5 10.6Z" fill="#fbd3d3"/><path d="M5 10.6Q5 11.8 6 11.8H13V9.6"/></g></g></svg><div class="t" style="left:61.0px;top:858.0px;font-size:13px;line-height:17px;font-weight:400;color:#2f3437;letter-spacing:-0.149px;">Библиотека</div><svg class="b" style="left:33.0px;top:887.6px;" width="18" height="18" viewBox="0 0 16 16"><g  fill="none" stroke="#5a6264" stroke-width="1.08" stroke-linecap="round" stroke-linejoin="round"><path d="M6 4 10 8 6 12"/></g></svg><svg class="b" style="left:55px;top:887.6px;" width="18" height="18" viewBox="0 0 16 16"><g transform="translate(8 8) scale(0.92) translate(-8 -8)"><g  fill="none" stroke="#9a6b12" stroke-width="1.27" stroke-linecap="round" stroke-linejoin="round"><path d="M1.6 4V13Q1.6 13.9 2.5 13.9H13.5Q14.4 13.9 14.4 13V5.6Q14.4 4.7 13.5 4.7H8.2L7 3.1Q6.7 2.7 6.2 2.7H2.5Q1.6 2.7 1.6 3.6Z" fill="#f4e4bf"/><path d="M1.6 6.6H14.4"/></g></g></svg><div class="t" style="left:83.0px;top:888.1px;font-size:13px;line-height:17px;font-weight:400;color:#2f3437;letter-spacing:-0.169px;">Компоненты</div><svg class="b" style="left:33.0px;top:917.6px;" width="18" height="18" viewBox="0 0 16 16"><g  fill="none" stroke="#5a6264" stroke-width="1.08" stroke-linecap="round" stroke-linejoin="round"><path d="M6 4 10 8 6 12"/></g></svg><svg class="b" style="left:55px;top:917.6px;" width="18" height="18" viewBox="0 0 16 16"><g transform="translate(8 8) scale(0.92) translate(-8 -8)"><g  fill="none" stroke="#9a6b12" stroke-width="1.27" stroke-linecap="round" stroke-linejoin="round"><path d="M1.6 4V13Q1.6 13.9 2.5 13.9H13.5Q14.4 13.9 14.4 13V5.6Q14.4 4.7 13.5 4.7H8.2L7 3.1Q6.7 2.7 6.2 2.7H2.5Q1.6 2.7 1.6 3.6Z" fill="#f4e4bf"/><path d="M1.6 6.6H14.4"/></g></g></svg><div class="t" style="left:83.0px;top:918.1px;font-size:13px;line-height:17px;font-weight:400;color:#2f3437;letter-spacing:-0.148px;">Посадочные места</div><svg class="b" style="left:33.0px;top:947.6px;" width="18" height="18" viewBox="0 0 16 16"><g  fill="none" stroke="#5a6264" stroke-width="1.08" stroke-linecap="round" stroke-linejoin="round"><path d="M6 4 10 8 6 12"/></g></svg><svg class="b" style="left:55px;top:947.6px;" width="18" height="18" viewBox="0 0 16 16"><g transform="translate(8 8) scale(0.92) translate(-8 -8)"><g  fill="none" stroke="#9a6b12" stroke-width="1.27" stroke-linecap="round" stroke-linejoin="round"><path d="M1.6 4V13Q1.6 13.9 2.5 13.9H13.5Q14.4 13.9 14.4 13V5.6Q14.4 4.7 13.5 4.7H8.2L7 3.1Q6.7 2.7 6.2 2.7H2.5Q1.6 2.7 1.6 3.6Z" fill="#f4e4bf"/><path d="M1.6 6.6H14.4"/></g></g></svg><div class="t" style="left:83.0px;top:948.1px;font-size:13px;line-height:17px;font-weight:400;color:#2f3437;letter-spacing:-0.122px;">Контактные площадки</div><svg class="b" style="left:33.0px;top:977.6px;" width="18" height="18" viewBox="0 0 16 16"><g  fill="none" stroke="#5a6264" stroke-width="1.08" stroke-linecap="round" stroke-linejoin="round"><path d="M6 4 10 8 6 12"/></g></svg><svg class="b" style="left:55px;top:977.6px;" width="18" height="18" viewBox="0 0 16 16"><g transform="translate(8 8) scale(0.92) translate(-8 -8)"><g  fill="none" stroke="#9a6b12" stroke-width="1.27" stroke-linecap="round" stroke-linejoin="round"><path d="M1.6 4V13Q1.6 13.9 2.5 13.9H13.5Q14.4 13.9 14.4 13V5.6Q14.4 4.7 13.5 4.7H8.2L7 3.1Q6.7 2.7 6.2 2.7H2.5Q1.6 2.7 1.6 3.6Z" fill="#f4e4bf"/><path d="M1.6 6.6H14.4"/></g></g></svg><div class="t" style="left:83.0px;top:978.1px;font-size:13px;line-height:17px;font-weight:400;color:#2f3437;letter-spacing:-0.401px;">Файлы</div><div class="b" style="left:328px;top:94px;width:645px;height:28px;background:#eceeed;"></div><div class="b" style="left:328px;top:122px;width:645px;height:1px;background:#bccaca;"></div><div class="b" style="left:972px;top:94px;width:1px;height:400px;background:#bccaca;"></div><div class="b" style="left:337px;top:94px;width:196px;height:29px;background:#fff;border:1px solid #bccaca;box-sizing:border-box;border-top:none;border-bottom:none;"></div><svg class="b" style="left:343.7px;top:98.5px;" width="18" height="18" viewBox="0 0 16 16"><g transform="translate(8 8) scale(0.92) translate(-8 -8)"><g  fill="none" stroke="#4355c9" stroke-width="1.17" stroke-linecap="round" stroke-linejoin="round"><path d="M6.3 3.4H3.4Q2.3 3.4 2.3 4.5V11.2Q2.3 12.3 3.4 12.3H4.2M9.3 3.4H12.2Q13.3 3.4 13.3 4.5V5M9.3 12.3H12.2Q13.3 12.3 13.3 11.2V10.6"/><path d="M6.3 1.4V7.4M9.3 2.4V5.4M9.3 9.2V14.6"/><rect x="12.2" y="5.4" width="2.2" height="5" rx="0.6"/><path d="M4.8 9.4V14.2L8.8 11.8Z"/></g></g></svg><div class="t" style="left:367.3px;top:99.0px;font-size:13px;line-height:17px;font-weight:400;color:#2f3437;letter-spacing:-0.358px;">Плата USB накопителя</div><svg class="b" style="left:511.0px;top:99.3px;" width="17" height="17" viewBox="0 0 16 16"><g  fill="none" stroke="#3a3f42" stroke-width="1.08" stroke-linecap="round" stroke-linejoin="round"><path d="M3.5 3.5 12.5 12.5M12.5 3.5 3.5 12.5"/></g></svg><svg class="b" style="left:342.3px;top:135.5px;" width="19" height="19" viewBox="0 0 16 16"><g  fill="none" stroke="#4355c9" stroke-width="0.9" stroke-linecap="round" stroke-linejoin="round"><circle cx="8" cy="8" r="6.4"/></g><text x="8.1" y="11.6" font-size="10" font-style="italic" font-weight="700" text-anchor="middle" fill="#4355c9" font-family="Liberation Serif, serif">i</text></svg><svg class="b" style="left:373.5px;top:135.8px;" width="18" height="18" viewBox="0 0 16 16"><g  fill="none" stroke="#3a3f42" stroke-width="0.99" stroke-linecap="round" stroke-linejoin="round"><path d="M4 1.8V12.6L6.8 10.2 8.8 14.4 10.6 13.6 8.7 9.5 12.2 9.2Z" fill="#fff"/></g></svg><div class="t" style="left:396.3px;top:135.9px;font-size:13px;line-height:17px;font-weight:400;color:#5a6062;letter-spacing:-0.148px;">Режим выбора</div><div class="b" style="left:333px;top:162px;width:634px;height:1px;background:#bccaca;"></div><svg class="b" style="left:0px;top:162px;" width="1920" height="21" viewBox="0 0 1920 21"><g stroke="#9fb0b0" stroke-width="1" fill="none"><path d="M359.5 18.5V21"/><path d="M374.5 18.5V21"/><path d="M389.5 18.5V21"/><path d="M404.5 14.5V21"/><path d="M419.5 18.5V21"/><path d="M434.5 18.5V21"/><path d="M449.5 18.5V21"/><path d="M464.5 18.5V21"/><path d="M479.5 14.5V21"/><path d="M494.5 18.5V21"/><path d="M509.5 18.5V21"/><path d="M524.5 18.5V21"/><path d="M539.5 18.5V21"/><path d="M554.5 14.5V21"/><path d="M569.5 18.5V21"/><path d="M584.5 18.5V21"/><path d="M599.5 18.5V21"/><path d="M614.5 18.5V21"/><path d="M629.5 14.5V21"/><path d="M644.5 18.5V21"/><path d="M659.5 18.5V21"/><path d="M674.5 18.5V21"/><path d="M689.5 18.5V21"/><path d="M704.5 14.5V21"/><path d="M719.5 18.5V21"/><path d="M734.5 18.5V21"/><path d="M749.5 18.5V21"/><path d="M764.5 18.5V21"/><path d="M779.5 14.5V21"/><path d="M794.5 18.5V21"/><path d="M809.5 18.5V21"/><path d="M824.5 18.5V21"/><path d="M839.5 18.5V21"/><path d="M854.5 14.5V21"/><path d="M869.5 18.5V21"/><path d="M884.5 18.5V21"/><path d="M899.5 18.5V21"/><path d="M914.5 18.5V21"/><path d="M929.5 14.5V21"/><path d="M944.5 18.5V21"/></g></svg><div class="t" style="left:400.6px;top:162.8px;font-size:11px;line-height:15px;font-weight:400;color:#5a6062;">0</div><div class="t" style="left:467.7px;top:162.8px;font-size:11px;line-height:15px;font-weight:400;color:#5a6062;letter-spacing:0.161px;">62,5</div><div class="t" style="left:544.2px;top:162.8px;font-size:11px;line-height:15px;font-weight:400;color:#5a6062;letter-spacing:0.184px;">125</div><div class="t" style="left:614.5px;top:162.8px;font-size:11px;line-height:15px;font-weight:400;color:#5a6062;letter-spacing:0.165px;">187,5</div><div class="t" style="left:694.2px;top:162.8px;font-size:11px;line-height:15px;font-weight:400;color:#5a6062;letter-spacing:0.184px;">250</div><div class="t" style="left:764.5px;top:162.8px;font-size:11px;line-height:15px;font-weight:400;color:#5a6062;letter-spacing:0.165px;">312,5</div><div class="t" style="left:844.2px;top:162.8px;font-size:11px;line-height:15px;font-weight:400;color:#5a6062;letter-spacing:0.184px;">375</div><div class="t" style="left:914.5px;top:162.8px;font-size:11px;line-height:15px;font-weight:400;color:#5a6062;letter-spacing:0.165px;">437,5</div><div class="b" style="left:333px;top:183px;width:20px;height:1px;background:#bccaca;"></div><div class="t" style="left:334.3px;top:166.0px;font-size:11px;line-height:15px;font-weight:400;color:#5a6062;letter-spacing:-1.663px;">mm</div><div class="b" style="left:353px;top:183px;width:601px;height:859px;background:#a9a9a9;"></div><svg class="b" style="left:0px;top:0px;" width="1920" height="1160" viewBox="0 0 1920 1160"><g stroke="#9fb0b0" stroke-width="1" fill="none"><path d="M350 1041.5H353"/><path d="M350 1026.5H353"/><path d="M347 1011.5H353"/><path d="M350 996.5H353"/><path d="M350 981.5H353"/><path d="M350 966.5H353"/><path d="M350 951.5H353"/><path d="M347 936.5H353"/><path d="M350 921.5H353"/><path d="M350 906.5H353"/><path d="M350 891.5H353"/><path d="M350 876.5H353"/><path d="M347 861.5H353"/><path d="M350 846.5H353"/><path d="M350 831.5H353"/><path d="M350 816.5H353"/><path d="M350 801.5H353"/><path d="M347 786.5H353"/><path d="M350 771.5H353"/><path d="M350 756.5H353"/><path d="M350 741.5H353"/><path d="M350 726.5H353"/><path d="M347 711.5H353"/><path d="M350 696.5H353"/><path d="M350 681.5H353"/><path d="M350 666.5H353"/><path d="M350 651.5H353"/><path d="M347 636.5H353"/><path d="M350 621.5H353"/><path d="M350 606.5H353"/><path d="M350 591.5H353"/><path d="M350 576.5H353"/><path d="M347 561.5H353"/><path d="M350 546.5H353"/><path d="M350 531.5H353"/><path d="M350 516.5H353"/><path d="M350 501.5H353"/><path d="M347 486.5H353"/><path d="M350 471.5H353"/><path d="M350 456.5H353"/><path d="M350 441.5H353"/><path d="M350 426.5H353"/><path d="M347 411.5H353"/><path d="M350 396.5H353"/><path d="M350 381.5H353"/><path d="M350 366.5H353"/><path d="M350 351.5H353"/><path d="M347 336.5H353"/><path d="M350 321.5H353"/><path d="M350 306.5H353"/><path d="M350 291.5H353"/><path d="M350 276.5H353"/><path d="M347 261.5H353"/><path d="M350 246.5H353"/><path d="M350 231.5H353"/><path d="M350 216.5H353"/><path d="M350 201.5H353"/><path d="M347 186.5H353"/></g></svg><div class="t" style="left:325.4px;top:1003.5px;font-size:11px;line-height:15px;font-weight:400;color:#5a6062;letter-spacing:0.156px;transform:rotate(-90deg);transform-origin:50% 50%;">-187,5</div><div class="t" style="left:330.2px;top:928.5px;font-size:11px;line-height:15px;font-weight:400;color:#5a6062;letter-spacing:0.165px;transform:rotate(-90deg);transform-origin:50% 50%;">-125</div><div class="t" style="left:328.6px;top:853.5px;font-size:11px;line-height:15px;font-weight:400;color:#5a6062;letter-spacing:0.150px;transform:rotate(-90deg);transform-origin:50% 50%;">-62,5</div><div class="t" style="left:338.3px;top:778.5px;font-size:11px;line-height:15px;font-weight:400;color:#5a6062;transform:rotate(-90deg);transform-origin:50% 50%;">0</div><div class="t" style="left:330.5px;top:703.5px;font-size:11px;line-height:15px;font-weight:400;color:#5a6062;letter-spacing:0.161px;transform:rotate(-90deg);transform-origin:50% 50%;">62,5</div><div class="t" style="left:332.0px;top:628.5px;font-size:11px;line-height:15px;font-weight:400;color:#5a6062;letter-spacing:0.184px;transform:rotate(-90deg);transform-origin:50% 50%;">125</div><div class="t" style="left:327.3px;top:553.5px;font-size:11px;line-height:15px;font-weight:400;color:#5a6062;letter-spacing:0.165px;transform:rotate(-90deg);transform-origin:50% 50%;">187,5</div><div class="t" style="left:332.0px;top:478.5px;font-size:11px;line-height:15px;font-weight:400;color:#5a6062;letter-spacing:0.184px;transform:rotate(-90deg);transform-origin:50% 50%;">250</div><div class="t" style="left:327.3px;top:403.5px;font-size:11px;line-height:15px;font-weight:400;color:#5a6062;letter-spacing:0.165px;transform:rotate(-90deg);transform-origin:50% 50%;">312,5</div><div class="t" style="left:332.0px;top:328.5px;font-size:11px;line-height:15px;font-weight:400;color:#5a6062;letter-spacing:0.184px;transform:rotate(-90deg);transform-origin:50% 50%;">375</div><div class="t" style="left:327.3px;top:253.5px;font-size:11px;line-height:15px;font-weight:400;color:#5a6062;letter-spacing:0.165px;transform:rotate(-90deg);transform-origin:50% 50%;">437,5</div><svg class="b" style="left:956px;top:184px;" width="10" height="10" viewBox="0 0 10 10"><path d="M1 6.5 5 2 9 6.5Z" fill="#3a3f42"/></svg><svg class="b" style="left:956px;top:1030px;" width="10" height="10" viewBox="0 0 10 10"><path d="M1 2.5 5 7 9 2.5Z" fill="#3a3f42"/></svg><div class="b" style="left:958px;top:322px;width:6px;height:588px;background:#bccaca;border-radius:3px;"></div><svg class="b" style="left:354px;top:1044px;" width="10" height="10" viewBox="0 0 10 10"><path d="M6.5 0.5 2 5 6.5 9.5Z" fill="#3a3f42"/></svg><svg class="b" style="left:942px;top:1044px;" width="10" height="10" viewBox="0 0 10 10"><path d="M2.5 0.5 7 5 2.5 9.5Z" fill="#3a3f42"/></svg><div class="b" style="left:496px;top:1046px;width:314px;height:6px;background:#bccaca;border-radius:3px;"></div><div class="b" style="left:954px;top:1042px;width:13px;height:13px;background:#e9eded;border:1px solid #cfd8d8;box-sizing:border-box;border-radius:7px;"></div><div class="b" style="left:333px;top:1055px;width:634px;height:30px;background:#eceeed;"></div><div class="b" style="left:333px;top:1055px;width:634px;height:2px;background:#bccaca;"></div><div class="b" style="left:341px;top:1056px;width:80px;height:29px;background:#fff;border:1px solid #bccaca;box-sizing:border-box;border-radius:0 0 7px 7px;border-top:none;"></div><svg class="b" style="left:349.0px;top:1061.0px;" width="18" height="18" viewBox="0 0 16 16"><g transform="translate(8 8) scale(0.92) translate(-8 -8)"><g  fill="none" stroke="#4355c9" stroke-width="1.17" stroke-linecap="round" stroke-linejoin="round"><path d="M3 3Q3 1.8 4.2 1.8H9.4L13 5.4V13Q13 14.2 11.8 14.2H4.2Q3 14.2 3 13Z" fill="#fff"/><path d="M9.4 1.8V4.4Q9.4 5.4 10.4 5.4H13"/></g><g  fill="none" stroke="#9a6b12" stroke-width="1.06" stroke-linecap="round" stroke-linejoin="round"><path d="M7.6 4.4H5.2V12H10.8V7.6M8 12V10.4H10.8"/></g></g></svg><div class="t" style="left:374.0px;top:1061.5px;font-size:13px;line-height:17px;font-weight:400;color:#3a3f42;letter-spacing:-0.298px;">Лист 1</div><svg class="b" style="left:439.5px;top:1060.5px;" width="18" height="18" viewBox="0 0 16 16"><g  fill="none" stroke="#4355c9" stroke-width="0.99" stroke-linecap="round" stroke-linejoin="round"><path d="M6 13.6H3.8Q2.6 13.6 2.6 12.4V2.8Q2.6 1.6 3.8 1.6H8.4L11.8 5V8"/><path d="M8.4 1.6V4Q8.4 5 9.4 5H11.8"/></g><g  fill="none" stroke="#9a6b12" stroke-width="0.9" stroke-linecap="round" stroke-linejoin="round"><path d="M6.8 4H4.8V11.6H6.4"/></g><circle cx="11.2" cy="11.8" r="3.4" fill="#3f4749"/><path d="M9.3 11.8H13.1M11.2 9.9V13.7" stroke="#fff" stroke-width="1.2"/></svg><svg class="b" style="left:855.0px;top:1060.0px;" width="18" height="18" viewBox="0 0 16 16"><g  fill="none" stroke="#4355c9" stroke-width="0.99" stroke-linecap="round" stroke-linejoin="round"><path d="M6.4 13.6H3.8Q2.6 13.6 2.6 12.4V2.8Q2.6 1.6 3.8 1.6H8.4L11.8 5V7"/><path d="M8.4 1.6V4Q8.4 5 9.4 5H11.8"/></g><g  fill="none" stroke="#9a6b12" stroke-width="0.9" stroke-linecap="round" stroke-linejoin="round"><path d="M6.8 4H4.8V11.6H6.4"/></g><g  fill="none" stroke="#3f4749" stroke-width="0.9" stroke-linecap="round" stroke-linejoin="round"><path d="M13.2 7.6 14.6 9 9.8 13.8 7.8 14.4 8.4 12.4Z" fill="#c9d0d0"/></g></svg><svg class="b" style="left:883.0px;top:1060.0px;" width="18" height="18" viewBox="0 0 16 16"><g  fill="none" stroke="#9aa5a5" stroke-width="0.99" stroke-linecap="round" stroke-linejoin="round"><path d="M3 4.5H13M6.2 4.3V3Q6.2 2.4 6.8 2.4H9.2Q9.8 2.4 9.8 3V4.3M4.2 4.7 4.8 13.2Q4.9 14 5.7 14H10.3Q11.1 14 11.2 13.2L11.8 4.7M6.7 6.8V11.8M9.3 6.8V11.8"/></g></svg><svg class="b" style="left:911.0px;top:1060.0px;" width="18" height="18" viewBox="0 0 16 16"><g  fill="none" stroke="#4355c9" stroke-width="0.99" stroke-linecap="round" stroke-linejoin="round"><path d="M2 4H6.6M9.6 4H14M2 8H8.6M11.6 8H14M2 12H4.6M7.6 12H14"/><circle cx="8.1" cy="4" r="1.5"/><circle cx="10.1" cy="8" r="1.5"/><circle cx="6.1" cy="12" r="1.5"/></g></svg><svg class="b" style="left:938.5px;top:1060.0px;" width="18" height="18" viewBox="0 0 16 16"><g  fill="none" stroke="#4355c9" stroke-width="0.9" stroke-linecap="round" stroke-linejoin="round"><path d="M6.9 1.8H9.1L9.5 3.6 10.8 4.3 12.5 3.7 13.6 5.6 12.3 6.9V8.4L13.6 9.7 12.5 11.6 10.8 11 9.5 11.7 9.1 13.5H6.9L6.5 11.7 5.2 11 3.5 11.6 2.4 9.7 3.7 8.4V6.9L2.4 5.6 3.5 3.7 5.2 4.3 6.5 3.6Z" transform="translate(0 0.4)"/><circle cx="8" cy="8.05" r="2.2"/></g></svg><div class="b" style="left:478px;top:203px;width:351px;height:34px;background:#fff;border-radius:7px;"></div><div class="b" style="left:483.2px;top:206.6px;width:27px;height:27px;background:#b3d5d2;border-radius:6px;"></div><svg class="b" style="left:488.0px;top:211.3px;" width="18" height="18" viewBox="0 0 16 16"><g  fill="none" stroke="#3a3f42" stroke-width="0.99" stroke-linecap="round" stroke-linejoin="round"><path d="M4 1.8V12.6L6.8 10.2 8.8 14.4 10.6 13.6 8.7 9.5 12.2 9.2Z" fill="#fff"/></g></svg><svg class="b" style="left:525.5px;top:211.3px;" width="18" height="18" viewBox="0 0 16 16"><g  fill="none" stroke="#4355c9" stroke-width="0.99" stroke-linecap="round" stroke-linejoin="round"><rect x="2" y="2" width="12" height="12" rx="1.4" fill="#fff"/></g><g stroke-linecap="butt" fill="none" stroke="#3f4749" stroke-width="0.99" stroke-linecap="round" stroke-linejoin="round"><path d="M8 4V12M4 8H12" stroke-dasharray="1 1"/></g></svg><svg class="b" style="left:580.5px;top:211.3px;" width="18" height="18" viewBox="0 0 16 16"><g  fill="none" stroke="#3f4749" stroke-width="0.99" stroke-linecap="round" stroke-linejoin="round"><path d="M2 10.6 5.2 2.6 8.4 10.6M3.2 7.8H7.2"/></g><g  fill="none" stroke="#4355c9" stroke-width="0.99" stroke-linecap="round" stroke-linejoin="round"><path d="M9.6 7.4H12.6Q13.8 7.4 13.8 8.6V12.8Q13.8 14 12.6 14H8.8Q7.6 14 7.6 12.8V12.2"/></g></svg><svg class="b" style="left:617.0px;top:211.3px;" width="18" height="18" viewBox="0 0 16 16"><g  fill="none" stroke="#3f4749" stroke-width="0.99" stroke-linecap="round" stroke-linejoin="round"><rect x="2" y="2.4" width="12" height="11.2" rx="1.4" fill="#fff"/></g><g  fill="none" stroke="#2f8a3a" stroke-width="0.99" stroke-linecap="round" stroke-linejoin="round"><path d="M2.4 11.4 6 7.6 9 10.6 10.8 9 13.6 11.6"/></g><circle cx="10.8" cy="5.4" r="1.2" fill="none" stroke="#9a6b12" stroke-width="1"/></svg><svg class="b" style="left:671.7px;top:211.3px;" width="18" height="18" viewBox="0 0 16 16"><g  fill="none" stroke="#4355c9" stroke-width="0.99" stroke-linecap="round" stroke-linejoin="round"><rect x="5.2" y="2" width="5.6" height="12" rx="1.2" fill="#dfe4fb"/><path d="M2.6 4.6H5.2M2.6 8H5.2M2.6 11.4H5.2M10.8 4.6H13.4M10.8 8H13.4M10.8 11.4H13.4"/></g></svg><svg class="b" style="left:709.0px;top:211.3px;" width="18" height="18" viewBox="0 0 16 16"><g  fill="none" stroke="#4355c9" stroke-width="0.99" stroke-linecap="round" stroke-linejoin="round"><path d="M5.4 7.4V12.8Q5.4 14 6.6 14H9.6Q10.8 14 10.8 12.8V7.4"/><path d="M2.8 8.6H5.4M2.8 11.6H5.4M10.8 8.6H13.4M10.8 11.6H13.4"/></g><g  fill="none" stroke="#3f4749" stroke-width="0.81" stroke-linecap="round" stroke-linejoin="round"><path d="M3.6 5.8V1.8L7 5.8V1.8"/><circle cx="9.6" cy="3" r="1.1"/><path d="M8.4 5.6H10.8"/></g></svg><svg class="b" style="left:746.2px;top:211.3px;" width="18" height="18" viewBox="0 0 16 16"><g  fill="none" stroke="#4355c9" stroke-width="0.99" stroke-linecap="round" stroke-linejoin="round"><circle cx="3.8" cy="3.6" r="1.7"/><circle cx="12.2" cy="12.2" r="1.7"/><path d="M3.8 5.3V10.8Q3.8 12.2 5.2 12.2H10.5"/></g></svg><svg class="b" style="left:801.0px;top:211.3px;" width="18" height="18" viewBox="0 0 16 16"><g  fill="none" stroke="#4355c9" stroke-width="0.99" stroke-linecap="round" stroke-linejoin="round"><path d="M9.4 2.2 13.6 7.4 7.6 11.4 4.6 11.6 3.6 10 5 7.6Z" fill="#fff"/><path d="M5 7.6 7.6 11.4"/></g><path d="M3.6 11 5 12.8 2.2 13.8 1.4 13Z" fill="#d43a3a"/></svg><svg class="b" style="left:546.0px;top:212.0px;" width="18" height="18" viewBox="0 0 16 16"><g  fill="none" stroke="#3a3f42" stroke-width="1.12" stroke-linecap="round" stroke-linejoin="round"><path d="M5.3 6.8 8 9.4 10.7 6.8"/></g></svg><svg class="b" style="left:638.0px;top:212.0px;" width="18" height="18" viewBox="0 0 16 16"><g  fill="none" stroke="#3a3f42" stroke-width="1.12" stroke-linecap="round" stroke-linejoin="round"><path d="M5.3 6.8 8 9.4 10.7 6.8"/></g></svg><svg class="b" style="left:767.2px;top:212.0px;" width="18" height="18" viewBox="0 0 16 16"><g  fill="none" stroke="#3a3f42" stroke-width="1.12" stroke-linecap="round" stroke-linejoin="round"><path d="M5.3 6.8 8 9.4 10.7 6.8"/></g></svg><div class="b" style="left:515.0px;top:211px;width:1px;height:18px;background:#c6d2d2;"></div><div class="b" style="left:570.2px;top:211px;width:1px;height:18px;background:#c6d2d2;"></div><div class="b" style="left:607.1px;top:211px;width:1px;height:18px;background:#c6d2d2;"></div><div class="b" style="left:662.3px;top:211px;width:1px;height:18px;background:#c6d2d2;"></div><div class="b" style="left:699.2px;top:211px;width:1px;height:18px;background:#c6d2d2;"></div><div class="b" style="left:736.1px;top:211px;width:1px;height:18px;background:#c6d2d2;"></div><div class="b" style="left:790.9px;top:211px;width:1px;height:18px;background:#c6d2d2;"></div><div class="b" style="left:973px;top:94px;width:644px;height:28px;background:#eceeed;"></div><div class="b" style="left:973px;top:122px;width:644px;height:1px;background:#bccaca;"></div><div class="b" style="left:1616px;top:94px;width:1px;height:420px;background:#bccaca;"></div><div class="b" style="left:982px;top:94px;width:200px;height:29px;background:#fff;border:1px solid #bccaca;box-sizing:border-box;border-top:none;border-bottom:none;"></div><svg class="b" style="left:988.7px;top:98.5px;" width="18" height="18" viewBox="0 0 16 16"><g transform="translate(8 8) scale(0.92) translate(-8 -8)"><g  fill="none" stroke="#1a7a1a" stroke-width="1.27" stroke-linecap="round" stroke-linejoin="round"><path d="M2 3.5Q2 2.3 3.2 2.3H12.8Q14 2.3 14 3.5V12.3Q14 13.5 12.8 13.5H11.2L10.4 12.5H5.6L4.8 13.5H3.2Q2 13.5 2 12.3Z" fill="#e8f4e8"/></g><g  fill="none" stroke="#3f4749" stroke-width="1.06" stroke-linecap="round" stroke-linejoin="round"><rect x="4.6" y="4.6" width="3.8" height="3.4"/><path d="M10.2 4.4V8.2M12 4.4V8.2M4.4 10H9.4M4.4 11.6H9.4"/></g><circle cx="11" cy="10" r="0.6" fill="#3f4749"/><circle cx="12.4" cy="11.4" r="0.6" fill="#3f4749"/></g></svg><div class="t" style="left:1012.3px;top:99.0px;font-size:13px;line-height:17px;font-weight:700;color:#26292b;letter-spacing:-0.552px;">Плата USB накопителя</div><svg class="b" style="left:1160.0px;top:99.3px;" width="17" height="17" viewBox="0 0 16 16"><g  fill="none" stroke="#3a3f42" stroke-width="1.08" stroke-linecap="round" stroke-linejoin="round"><path d="M3.5 3.5 12.5 12.5M12.5 3.5 3.5 12.5"/></g></svg><svg class="b" style="left:987.3px;top:135.5px;" width="19" height="19" viewBox="0 0 16 16"><g  fill="none" stroke="#4355c9" stroke-width="0.9" stroke-linecap="round" stroke-linejoin="round"><circle cx="8" cy="8" r="6.4"/></g><text x="8.1" y="11.6" font-size="10" font-style="italic" font-weight="700" text-anchor="middle" fill="#4355c9" font-family="Liberation Serif, serif">i</text></svg><svg class="b" style="left:1018.5px;top:135.8px;" width="18" height="18" viewBox="0 0 16 16"><g  fill="none" stroke="#3a3f42" stroke-width="0.99" stroke-linecap="round" stroke-linejoin="round"><path d="M4 1.8V12.6L6.8 10.2 8.8 14.4 10.6 13.6 8.7 9.5 12.2 9.2Z" fill="#fff"/></g></svg><div class="t" style="left:1041.3px;top:135.9px;font-size:13px;line-height:17px;font-weight:400;color:#5a6062;letter-spacing:-0.148px;">Режим выбора</div><div class="b" style="left:978px;top:162px;width:633px;height:1px;background:#bccaca;"></div><svg class="b" style="left:0px;top:162px;" width="1920" height="21" viewBox="0 0 1920 21"><g stroke="#9fb0b0" stroke-width="1" fill="none"><path d="M1001.5 18.5V21"/><path d="M1011.5 18.5V21"/><path d="M1021.5 18.5V21"/><path d="M1031.5 14.5V21"/><path d="M1041.5 18.5V21"/><path d="M1051.5 18.5V21"/><path d="M1061.5 18.5V21"/><path d="M1071.5 18.5V21"/><path d="M1081.5 18.5V21"/><path d="M1091.5 14.5V21"/><path d="M1101.5 18.5V21"/><path d="M1111.5 18.5V21"/><path d="M1121.5 18.5V21"/><path d="M1131.5 18.5V21"/><path d="M1141.5 18.5V21"/><path d="M1151.5 14.5V21"/><path d="M1161.5 18.5V21"/><path d="M1171.5 18.5V21"/><path d="M1181.5 18.5V21"/><path d="M1191.5 18.5V21"/><path d="M1201.5 18.5V21"/><path d="M1211.5 14.5V21"/><path d="M1221.5 18.5V21"/><path d="M1231.5 18.5V21"/><path d="M1241.5 18.5V21"/><path d="M1251.5 18.5V21"/><path d="M1261.5 18.5V21"/><path d="M1271.5 14.5V21"/><path d="M1281.5 18.5V21"/><path d="M1291.5 18.5V21"/><path d="M1301.5 18.5V21"/><path d="M1311.5 18.5V21"/><path d="M1321.5 18.5V21"/><path d="M1331.5 14.5V21"/><path d="M1341.5 18.5V21"/><path d="M1351.5 18.5V21"/><path d="M1361.5 18.5V21"/><path d="M1371.5 18.5V21"/><path d="M1381.5 18.5V21"/><path d="M1391.5 14.5V21"/><path d="M1401.5 18.5V21"/><path d="M1411.5 18.5V21"/><path d="M1421.5 18.5V21"/><path d="M1431.5 18.5V21"/><path d="M1441.5 18.5V21"/><path d="M1451.5 14.5V21"/><path d="M1461.5 18.5V21"/><path d="M1471.5 18.5V21"/><path d="M1481.5 18.5V21"/><path d="M1491.5 18.5V21"/><path d="M1501.5 18.5V21"/><path d="M1511.5 14.5V21"/><path d="M1521.5 18.5V21"/><path d="M1531.5 18.5V21"/><path d="M1541.5 18.5V21"/><path d="M1551.5 18.5V21"/><path d="M1561.5 18.5V21"/><path d="M1571.5 14.5V21"/><path d="M1581.5 18.5V21"/><path d="M1591.5 18.5V21"/></g></svg><div class="t" style="left:1020.9px;top:162.8px;font-size:11px;line-height:15px;font-weight:400;color:#5a6062;letter-spacing:0.142px;">-7,5</div><div class="t" style="left:1087.6px;top:162.8px;font-size:11px;line-height:15px;font-weight:400;color:#5a6062;">0</div><div class="t" style="left:1142.8px;top:162.8px;font-size:11px;line-height:15px;font-weight:400;color:#5a6062;letter-spacing:0.153px;">7,5</div><div class="t" style="left:1204.4px;top:162.8px;font-size:11px;line-height:15px;font-weight:400;color:#5a6062;letter-spacing:0.184px;">15</div><div class="t" style="left:1259.7px;top:162.8px;font-size:11px;line-height:15px;font-weight:400;color:#5a6062;letter-spacing:0.161px;">22,5</div><div class="t" style="left:1324.4px;top:162.8px;font-size:11px;line-height:15px;font-weight:400;color:#5a6062;letter-spacing:0.184px;">30</div><div class="t" style="left:1379.7px;top:162.8px;font-size:11px;line-height:15px;font-weight:400;color:#5a6062;letter-spacing:0.161px;">37,5</div><div class="t" style="left:1444.4px;top:162.8px;font-size:11px;line-height:15px;font-weight:400;color:#5a6062;letter-spacing:0.184px;">45</div><div class="t" style="left:1499.7px;top:162.8px;font-size:11px;line-height:15px;font-weight:400;color:#5a6062;letter-spacing:0.161px;">52,5</div><div class="t" style="left:1564.4px;top:162.8px;font-size:11px;line-height:15px;font-weight:400;color:#5a6062;letter-spacing:0.184px;">60</div><div class="b" style="left:978px;top:183px;width:20px;height:1px;background:#bccaca;"></div><div class="t" style="left:979.7px;top:166.0px;font-size:11px;line-height:15px;font-weight:400;color:#5a6062;letter-spacing:-1.663px;">mm</div><div class="b" style="left:998px;top:183px;width:600px;height:320px;background:#212831;"></div><svg class="b" style="left:0px;top:0px;" width="1920" height="1160" viewBox="0 0 1920 1160"><g stroke="#9fb0b0" stroke-width="1" fill="none"><path d="M995 491.5H998"/><path d="M995 481.5H998"/><path d="M992 471.5H998"/><path d="M995 461.5H998"/><path d="M995 451.5H998"/><path d="M995 441.5H998"/><path d="M995 431.5H998"/><path d="M995 421.5H998"/><path d="M992 411.5H998"/><path d="M995 401.5H998"/><path d="M995 391.5H998"/><path d="M995 381.5H998"/><path d="M995 371.5H998"/><path d="M995 361.5H998"/><path d="M992 351.5H998"/><path d="M995 341.5H998"/><path d="M995 331.5H998"/><path d="M995 321.5H998"/><path d="M995 311.5H998"/><path d="M995 301.5H998"/><path d="M992 291.5H998"/><path d="M995 281.5H998"/><path d="M995 271.5H998"/><path d="M995 261.5H998"/><path d="M995 251.5H998"/><path d="M995 241.5H998"/><path d="M992 231.5H998"/><path d="M995 221.5H998"/><path d="M995 211.5H998"/><path d="M995 201.5H998"/><path d="M995 191.5H998"/></g></svg><div class="t" style="left:976.7px;top:463.5px;font-size:11px;line-height:15px;font-weight:400;color:#5a6062;letter-spacing:0.142px;transform:rotate(-90deg);transform-origin:50% 50%;">-7,5</div><div class="t" style="left:983.3px;top:403.5px;font-size:11px;line-height:15px;font-weight:400;color:#5a6062;transform:rotate(-90deg);transform-origin:50% 50%;">0</div><div class="t" style="left:978.6px;top:343.5px;font-size:11px;line-height:15px;font-weight:400;color:#5a6062;letter-spacing:0.153px;transform:rotate(-90deg);transform-origin:50% 50%;">7,5</div><div class="t" style="left:980.2px;top:283.5px;font-size:11px;line-height:15px;font-weight:400;color:#5a6062;letter-spacing:0.184px;transform:rotate(-90deg);transform-origin:50% 50%;">15</div><div class="t" style="left:975.5px;top:223.5px;font-size:11px;line-height:15px;font-weight:400;color:#5a6062;letter-spacing:0.161px;transform:rotate(-90deg);transform-origin:50% 50%;">22,5</div><svg class="b" style="left:1600px;top:184px;" width="10" height="10" viewBox="0 0 10 10"><path d="M1 6.5 5 2 9 6.5Z" fill="#3a3f42"/></svg><div class="b" style="left:1030px;top:203px;width:536px;height:34px;background:#fff;border-radius:7px;"></div><div class="b" style="left:1035.6px;top:206.5px;width:27px;height:27px;background:#b3d5d2;border-radius:6px;"></div><svg class="b" style="left:1040.0px;top:211.0px;" width="18" height="18" viewBox="0 0 16 16"><g  fill="none" stroke="#3a3f42" stroke-width="0.99" stroke-linecap="round" stroke-linejoin="round"><path d="M4 1.8V12.6L6.8 10.2 8.8 14.4 10.6 13.6 8.7 9.5 12.2 9.2Z" fill="#fff"/></g></svg><svg class="b" style="left:1077.0px;top:211.0px;" width="18" height="18" viewBox="0 0 16 16"><g  fill="none" stroke="#8a5a0a" stroke-width="0.99" stroke-linecap="round" stroke-linejoin="round"><path d="M2.4 10.4V3.8Q2.4 2.6 3.6 2.6H9.4Q13.6 2.6 13.6 7.6Q13.6 13.2 8.2 13.2H2.4"/><path d="M2.4 10.8H8Q11.2 10.8 11.2 7.8"/><circle cx="5.8" cy="7.4" r="1.5"/><circle cx="9.4" cy="6.2" r="1.5"/><path d="M7.2 8Q8.4 8.6 8.6 7.4"/></g></svg><svg class="b" style="left:1123.3px;top:211.0px;" width="18" height="18" viewBox="0 0 16 16"><g  fill="none" stroke="#8a5a0a" stroke-width="0.95" stroke-linecap="round" stroke-linejoin="round"><rect x="4" y="1.8" width="3.6" height="12.4" rx="0.8" fill="#fff"/><path d="M7.6 4.2H13.2Q13.8 4.2 13.8 4.8V7Q13.8 7.6 13.2 7.6H7.6"/><path d="M2.6 4.2H4M9.6 4.2V5.6M11.6 4.2V5.6M7.6 9.4H6.2M7.6 11.4H6.2M5.8 3.6V2"/></g></svg><svg class="b" style="left:1160.3px;top:211.0px;" width="18" height="18" viewBox="0 0 16 16"><g fill="#9aa5a5"><path d="M8 1.2 10 4H6ZM8 14.8 10 12H6ZM1.2 8 4 6V10ZM14.8 8 12 6V10Z"/><rect x="7.1" y="4" width="1.8" height="1.6"/><rect x="7.1" y="10.4" width="1.8" height="1.6"/><rect x="4" y="7.1" width="1.6" height="1.8"/><rect x="10.4" y="7.1" width="1.6" height="1.8"/></g><rect x="6.7" y="6.7" width="2.6" height="2.6" fill="none" stroke="#9aa5a5" stroke-width="0.9"/><rect x="2.4" y="2.4" width="0.9" height="0.9" fill="#9aa5a5"/><rect x="4.2" y="2.4" width="0.9" height="0.9" fill="#9aa5a5"/><rect x="2.4" y="4.2" width="0.9" height="0.9" fill="#9aa5a5"/><rect x="12.7" y="2.4" width="0.9" height="0.9" fill="#9aa5a5"/><rect x="10.9" y="2.4" width="0.9" height="0.9" fill="#9aa5a5"/><rect x="12.7" y="4.2" width="0.9" height="0.9" fill="#9aa5a5"/><rect x="2.4" y="12.7" width="0.9" height="0.9" fill="#9aa5a5"/><rect x="4.2" y="12.7" width="0.9" height="0.9" fill="#9aa5a5"/><rect x="2.4" y="10.9" width="0.9" height="0.9" fill="#9aa5a5"/><rect x="12.7" y="12.7" width="0.9" height="0.9" fill="#9aa5a5"/><rect x="10.9" y="12.7" width="0.9" height="0.9" fill="#9aa5a5"/><rect x="12.7" y="10.9" width="0.9" height="0.9" fill="#9aa5a5"/></svg><svg class="b" style="left:1197.3px;top:211.0px;" width="18" height="18" viewBox="0 0 16 16"><g  fill="none" stroke="#9aa5a5" stroke-width="0.99" stroke-linecap="round" stroke-linejoin="round"><rect x="2" y="2" width="12" height="12" rx="1.4" fill="#fff"/></g><g stroke-linecap="butt" fill="none" stroke="#9aa5a5" stroke-width="0.99" stroke-linecap="round" stroke-linejoin="round"><path d="M8 4V12M4 8H12" stroke-dasharray="1 1"/></g></svg><svg class="b" style="left:1252.0px;top:211.0px;" width="18" height="18" viewBox="0 0 16 16"><g  fill="none" stroke="#3f4749" stroke-width="0.99" stroke-linecap="round" stroke-linejoin="round"><path d="M2 10.6 5.2 2.6 8.4 10.6M3.2 7.8H7.2"/></g><g  fill="none" stroke="#4355c9" stroke-width="0.99" stroke-linecap="round" stroke-linejoin="round"><path d="M9.6 7.4H12.6Q13.8 7.4 13.8 8.6V12.8Q13.8 14 12.6 14H8.8Q7.6 14 7.6 12.8V12.2"/></g></svg><svg class="b" style="left:1288.7px;top:211.0px;" width="18" height="18" viewBox="0 0 16 16"><g  fill="none" stroke="#9aa5a5" stroke-width="0.9" stroke-linecap="round" stroke-linejoin="round"><rect x="2" y="2" width="12" height="12" rx="1.4" fill="#fff"/><path d="M10.6 5.6V4.8H5.6L8.4 8 5.6 11.2H10.6V10.4"/></g></svg><svg class="b" style="left:1343.7px;top:211.0px;" width="18" height="18" viewBox="0 0 16 16"><g  fill="none" stroke="#4355c9" stroke-width="0.99" stroke-linecap="round" stroke-linejoin="round"><rect x="5.2" y="2" width="5.6" height="12" rx="1.2" fill="#dfe4fb"/><path d="M2.6 4.6H5.2M2.6 8H5.2M2.6 11.4H5.2M10.8 4.6H13.4M10.8 8H13.4M10.8 11.4H13.4"/></g></svg><svg class="b" style="left:1381.3px;top:211.0px;" width="18" height="18" viewBox="0 0 16 16"><g  fill="none" stroke="#4355c9" stroke-width="0.99" stroke-linecap="round" stroke-linejoin="round"><circle cx="8" cy="8" r="4.6"/><path d="M8 1.4V14.6M1.4 8H14.6"/></g></svg><svg class="b" style="left:1409.3px;top:211.0px;" width="18" height="18" viewBox="0 0 16 16"><g  fill="none" stroke="#4355c9" stroke-width="0.9" stroke-linecap="round" stroke-linejoin="round"><path d="M4.4 2.4H14L11.4 6.6H2Z" fill="#dfe4fb"/><path d="M4.8 9.6H14L11.4 13.8H2L4 10.6" fill="#dfe4fb"/></g><g  fill="none" stroke="#d43a3a" stroke-width="0.99" stroke-linecap="round" stroke-linejoin="round"><path d="M8 4.4V12M6.4 5.6 8 4 9.6 5.6M6.4 10.8 8 12.4 9.6 10.8"/></g></svg><svg class="b" style="left:1436.0px;top:211.0px;" width="18" height="18" viewBox="0 0 16 16"><g  fill="none" stroke="#4355c9" stroke-width="0.99" stroke-linecap="round" stroke-linejoin="round"><circle cx="4.8" cy="5.8" r="2.6"/><path d="M6.8 7.6 9.6 10.6Q10.6 11.6 12 11.4L14.4 11"/></g><g  fill="none" stroke="#4355c9" stroke-width="0.81" stroke-linecap="round" stroke-linejoin="round"><path d="M4 5.2 5.4 6.4"/></g></svg><svg class="b" style="left:1491.7px;top:211.0px;" width="18" height="18" viewBox="0 0 16 16"><g  fill="none" stroke="#4355c9" stroke-width="0.9" stroke-linecap="round" stroke-linejoin="round"><rect x="2" y="2" width="12" height="12" rx="1.4" fill="#dfe4fb"/><path d="M2.4 6 6 2.4M2.4 9.4 9.4 2.4M2.6 12.8 12.8 2.6M5.4 13.6 13.6 5.4M8.8 13.6 13.6 8.8M12 13.6 13.6 12"/></g></svg><svg class="b" style="left:1539.45px;top:212.75px;" width="14.5" height="14.5" viewBox="0 0 16 16"><circle cx="4" cy="8" r="1.3" fill="#2f3437"/><circle cx="8" cy="8" r="1.3" fill="#2f3437"/><circle cx="12" cy="8" r="1.3" fill="#2f3437"/></svg><svg class="b" style="left:1098.0px;top:212.0px;" width="18" height="18" viewBox="0 0 16 16"><g  fill="none" stroke="#3a3f42" stroke-width="1.12" stroke-linecap="round" stroke-linejoin="round"><path d="M5.3 6.8 8 9.4 10.7 6.8"/></g></svg><svg class="b" style="left:1218.0px;top:212.0px;" width="18" height="18" viewBox="0 0 16 16"><g  fill="none" stroke="#9aa5a5" stroke-width="1.12" stroke-linecap="round" stroke-linejoin="round"><path d="M5.3 6.8 8 9.4 10.7 6.8"/></g></svg><svg class="b" style="left:1309.7px;top:212.0px;" width="18" height="18" viewBox="0 0 16 16"><g  fill="none" stroke="#9aa5a5" stroke-width="1.12" stroke-linecap="round" stroke-linejoin="round"><path d="M5.3 6.8 8 9.4 10.7 6.8"/></g></svg><svg class="b" style="left:1458.0px;top:212.0px;" width="18" height="18" viewBox="0 0 16 16"><g  fill="none" stroke="#3a3f42" stroke-width="1.12" stroke-linecap="round" stroke-linejoin="round"><path d="M5.3 6.8 8 9.4 10.7 6.8"/></g></svg><svg class="b" style="left:1513.0px;top:212.0px;" width="18" height="18" viewBox="0 0 16 16"><g  fill="none" stroke="#3a3f42" stroke-width="1.12" stroke-linecap="round" stroke-linejoin="round"><path d="M5.3 6.8 8 9.4 10.7 6.8"/></g></svg><div class="b" style="left:1066.8px;top:211px;width:1px;height:18px;background:#c6d2d2;"></div><div class="b" style="left:1150.2px;top:211px;width:1px;height:18px;background:#c6d2d2;"></div><div class="b" style="left:1186.8px;top:211px;width:1px;height:18px;background:#c6d2d2;"></div><div class="b" style="left:1241.8px;top:211px;width:1px;height:18px;background:#c6d2d2;"></div><div class="b" style="left:1278.8px;top:211px;width:1px;height:18px;background:#c6d2d2;"></div><div class="b" style="left:1333.8px;top:211px;width:1px;height:18px;background:#c6d2d2;"></div><div class="b" style="left:1370.8px;top:211px;width:1px;height:18px;background:#c6d2d2;"></div><div class="b" style="left:1482.2px;top:211px;width:1px;height:18px;background:#c6d2d2;"></div><svg class="b" style="left:353px;top:183px" width="601" height="859" viewBox="353 183 601 859"><g transform="translate(390 420) scale(0.32756)"><rect x="50" y="40" width="1540" height="1086" fill="#8c8c8c"/><rect x="40" y="30" width="1540" height="1086" fill="#ffffff" stroke="#8a8a8a" stroke-width="1.5"/><g stroke="#e6e6e6" stroke-width="1.6"><path d="M85.8 30V1116"/><path d="M131.6 30V1116"/><path d="M177.4 30V1116"/><path d="M223.2 30V1116"/><path d="M269.0 30V1116"/><path d="M314.8 30V1116"/><path d="M360.5 30V1116"/><path d="M406.3 30V1116"/><path d="M452.1 30V1116"/><path d="M497.9 30V1116"/><path d="M543.7 30V1116"/><path d="M589.5 30V1116"/><path d="M635.3 30V1116"/><path d="M681.1 30V1116"/><path d="M726.9 30V1116"/><path d="M772.7 30V1116"/><path d="M818.5 30V1116"/><path d="M864.3 30V1116"/><path d="M910.1 30V1116"/><path d="M955.8 30V1116"/><path d="M1001.6 30V1116"/><path d="M1047.4 30V1116"/><path d="M1093.2 30V1116"/><path d="M1139.0 30V1116"/><path d="M1184.8 30V1116"/><path d="M1230.6 30V1116"/><path d="M1276.4 30V1116"/><path d="M1322.2 30V1116"/><path d="M1368.0 30V1116"/><path d="M1413.8 30V1116"/><path d="M1459.6 30V1116"/><path d="M1505.4 30V1116"/><path d="M1551.2 30V1116"/><path d="M40 1070.2H1580"/><path d="M40 1024.4H1580"/><path d="M40 978.6H1580"/><path d="M40 932.8H1580"/><path d="M40 887.0H1580"/><path d="M40 841.2H1580"/><path d="M40 795.5H1580"/><path d="M40 749.7H1580"/><path d="M40 703.9H1580"/><path d="M40 658.1H1580"/><path d="M40 612.3H1580"/><path d="M40 566.5H1580"/><path d="M40 520.7H1580"/><path d="M40 474.9H1580"/><path d="M40 429.1H1580"/><path d="M40 383.3H1580"/><path d="M40 337.5H1580"/><path d="M40 291.7H1580"/><path d="M40 245.9H1580"/><path d="M40 200.2H1580"/><path d="M40 154.4H1580"/><path d="M40 108.6H1580"/><path d="M40 62.8H1580"/></g><rect x="113" y="45" width="1449" height="1053" fill="none" stroke="#3c3c3c" stroke-width="2.2"/><path d="M68 45L68 485" stroke="#3c3c3c" stroke-width="2.2" fill="none"/><path d="M68 565L68 1098" stroke="#3c3c3c" stroke-width="2.2" fill="none"/><path d="M90 45L90 485" stroke="#3c3c3c" stroke-width="2.2" fill="none"/><path d="M90 565L90 1098" stroke="#3c3c3c" stroke-width="2.2" fill="none"/><path d="M68 45L113 45" stroke="#3c3c3c" stroke-width="2.2" fill="none"/><path d="M68 265L113 265" stroke="#3c3c3c" stroke-width="2.2" fill="none"/><path d="M68 485L113 485" stroke="#3c3c3c" stroke-width="2.2" fill="none"/><path d="M68 565L113 565" stroke="#3c3c3c" stroke-width="2.2" fill="none"/><path d="M68 693L113 693" stroke="#3c3c3c" stroke-width="2.2" fill="none"/><path d="M68 785L113 785" stroke="#3c3c3c" stroke-width="2.2" fill="none"/><path d="M68 877L113 877" stroke="#3c3c3c" stroke-width="2.2" fill="none"/><path d="M68 1005L113 1005" stroke="#3c3c3c" stroke-width="2.2" fill="none"/><path d="M68 1098L113 1098" stroke="#3c3c3c" stroke-width="2.2" fill="none"/><rect x="72" y="205" width="14" height="55" fill="#cfcfcf" opacity="0.75"/><rect x="72" y="440" width="14" height="40" fill="#cfcfcf" opacity="0.75"/><rect x="72" y="600" width="14" height="90" fill="#cfcfcf" opacity="0.75"/><rect x="72" y="700" width="14" height="80" fill="#cfcfcf" opacity="0.75"/><rect x="72" y="800" width="14" height="70" fill="#cfcfcf" opacity="0.75"/><rect x="72" y="1040" width="14" height="50" fill="#cfcfcf" opacity="0.75"/><rect x="113" y="45" width="259" height="53" fill="none" stroke="#3c3c3c" stroke-width="2.4"/><text x="0" y="0" font-size="22" fill="#222" text-anchor="middle" transform="translate(242 63) rotate(180)" font-family="Liberation Sans, sans-serif" textLength="215" lengthAdjust="spacingAndGlyphs">ЭРЕМЕКС.469355.002 Э3</text><rect x="883" y="895" width="679" height="203" fill="none" stroke="#3c3c3c" stroke-width="2.6"/><path d="M910 895L910 1098" stroke="#3c3c3c" stroke-width="2.2" fill="none"/><path d="M945 895L945 1098" stroke="#3c3c3c" stroke-width="2.2" fill="none"/><path d="M1030 895L1030 1098" stroke="#3c3c3c" stroke-width="2.2" fill="none"/><path d="M1085 895L1085 1098" stroke="#3c3c3c" stroke-width="2.2" fill="none"/><path d="M1122 895L1122 1098" stroke="#3c3c3c" stroke-width="2.2" fill="none"/><path d="M883 913.45L1122 913.45" stroke="#3c3c3c" stroke-width="1.6" fill="none"/><path d="M883 931.9L1122 931.9" stroke="#3c3c3c" stroke-width="1.6" fill="none"/><path d="M883 950.35L1122 950.35" stroke="#3c3c3c" stroke-width="1.6" fill="none"/><path d="M883 968.8L1122 968.8" stroke="#3c3c3c" stroke-width="1.6" fill="none"/><path d="M883 987.25L1122 987.25" stroke="#3c3c3c" stroke-width="1.6" fill="none"/><path d="M883 1005.7L1122 1005.7" stroke="#3c3c3c" stroke-width="1.6" fill="none"/><path d="M883 1024.15L1122 1024.15" stroke="#3c3c3c" stroke-width="1.6" fill="none"/><path d="M883 1042.6L1122 1042.6" stroke="#3c3c3c" stroke-width="1.6" fill="none"/><path d="M883 1061.05L1122 1061.05" stroke="#3c3c3c" stroke-width="1.6" fill="none"/><path d="M883 1079.5L1122 1079.5" stroke="#3c3c3c" stroke-width="1.6" fill="none"/><path d="M1122 950L1562 950" stroke="#3c3c3c" stroke-width="2.4" fill="none"/><path d="M1122 1042L1562 1042" stroke="#3c3c3c" stroke-width="2.4" fill="none"/><path d="M1378 950L1378 1098" stroke="#3c3c3c" stroke-width="2.4" fill="none"/><path d="M1432 950L1432 1025" stroke="#3c3c3c" stroke-width="2.2" fill="none"/><path d="M1497 950L1497 1025" stroke="#3c3c3c" stroke-width="2.2" fill="none"/><path d="M1378 968L1562 968" stroke="#3c3c3c" stroke-width="2.2" fill="none"/><path d="M1378 1025L1562 1025" stroke="#3c3c3c" stroke-width="2.2" fill="none"/><path d="M1396 968L1396 1025" stroke="#3c3c3c" stroke-width="1.8" fill="none"/><path d="M1414 968L1414 1025" stroke="#3c3c3c" stroke-width="1.8" fill="none"/><path d="M1450 1025L1450 1042" stroke="#3c3c3c" stroke-width="2" fill="none"/><text x="1342" y="933" font-size="22" fill="#222" text-anchor="middle" font-family="Liberation Sans, sans-serif" textLength="215" lengthAdjust="spacingAndGlyphs">ЭРЕМЕКС.469355.002 Э3</text><text x="1250" y="997" font-size="21" fill="#222" text-anchor="middle" font-family="Liberation Sans, sans-serif" font-style="italic" textLength="218" lengthAdjust="spacingAndGlyphs">Плата USB накопителя</text><circle cx="1397" cy="1072" r="10" fill="#1a8a9a"/><text x="1388" y="1081" font-size="25" font-weight="700" fill="#222" font-family="Liberation Sans, sans-serif" font-style="italic" textLength="165" lengthAdjust="spacingAndGlyphs">EREMEX</text><rect x="888" y="970" width="30" height="12" fill="#cfcfcf" opacity="0.75"/><rect x="968" y="970" width="40" height="12" fill="#cfcfcf" opacity="0.75"/><rect x="1045" y="970" width="25" height="12" fill="#cfcfcf" opacity="0.75"/><rect x="1090" y="970" width="25" height="12" fill="#cfcfcf" opacity="0.75"/><rect x="888" y="990" width="30" height="14" fill="#cfcfcf" opacity="0.75"/><rect x="950" y="990" width="35" height="14" fill="#cfcfcf" opacity="0.75"/><rect x="888" y="1008" width="25" height="14" fill="#cfcfcf" opacity="0.75"/><rect x="950" y="1008" width="30" height="14" fill="#cfcfcf" opacity="0.75"/><rect x="888" y="1045" width="30" height="14" fill="#cfcfcf" opacity="0.75"/><rect x="950" y="1045" width="40" height="14" fill="#cfcfcf" opacity="0.75"/><rect x="888" y="1063" width="30" height="14" fill="#cfcfcf" opacity="0.75"/><rect x="950" y="1063" width="45" height="14" fill="#cfcfcf" opacity="0.75"/><rect x="888" y="1082" width="25" height="12" fill="#cfcfcf" opacity="0.75"/><rect x="1160" y="1025" width="180" height="12" fill="#cfcfcf" opacity="0.75"/><rect x="1385" y="953" width="35" height="12" fill="#cfcfcf" opacity="0.75"/><rect x="1445" y="953" width="35" height="12" fill="#cfcfcf" opacity="0.75"/><rect x="1505" y="953" width="45" height="12" fill="#cfcfcf" opacity="0.75"/><rect x="1385" y="1028" width="25" height="12" fill="#cfcfcf" opacity="0.75"/><rect x="1460" y="1028" width="60" height="12" fill="#cfcfcf" opacity="0.75"/><rect x="1215" y="1100" width="45" height="12" fill="#cfcfcf" opacity="0.75"/><rect x="1435" y="1100" width="50" height="12" fill="#cfcfcf" opacity="0.75"/><polyline points="242,135 536,135 536,217 242,217 242,135" fill="none" stroke="#4a4aff" stroke-width="2.1" /><path d="M316 135L316 217" stroke="#4a4aff" stroke-width="2.1" fill="none"/><path d="M389 135L389 217" stroke="#4a4aff" stroke-width="2.1" fill="none"/><path d="M462 135L462 217" stroke="#4a4aff" stroke-width="2.1" fill="none"/><path d="M228 172H256M228 180H256" stroke="#9a9a9a" stroke-width="3.5"/><rect x="260" y="155" width="14" height="45" fill="#cfcfcf" opacity="0.75"/><rect x="274" y="170" width="10" height="25" fill="#cfcfcf" opacity="0.75"/><path d="M302 172H330M302 180H330" stroke="#9a9a9a" stroke-width="3.5"/><rect x="334" y="155" width="14" height="45" fill="#cfcfcf" opacity="0.75"/><rect x="348" y="170" width="10" height="25" fill="#cfcfcf" opacity="0.75"/><path d="M375 172H403M375 180H403" stroke="#9a9a9a" stroke-width="3.5"/><rect x="407" y="155" width="14" height="45" fill="#cfcfcf" opacity="0.75"/><rect x="421" y="170" width="10" height="25" fill="#cfcfcf" opacity="0.75"/><path d="M448 172H476M448 180H476" stroke="#9a9a9a" stroke-width="3.5"/><rect x="480" y="155" width="14" height="45" fill="#cfcfcf" opacity="0.75"/><rect x="494" y="170" width="10" height="25" fill="#cfcfcf" opacity="0.75"/><path d="M522 172H550M522 180H550" stroke="#9a9a9a" stroke-width="3.5"/><rect x="554" y="155" width="14" height="45" fill="#cfcfcf" opacity="0.75"/><rect x="568" y="170" width="10" height="25" fill="#cfcfcf" opacity="0.75"/><path d="M416 100L416 135" stroke="#4a4aff" stroke-width="2.1" fill="none"/><rect x="403" y="92" width="26" height="9" fill="#d8d8ff"/><circle cx="416" cy="135" r="2.6" fill="#2020c0"/><path d="M407 217L407 240" stroke="#4a4aff" stroke-width="2.1" fill="none"/><path d="M398 240H416L407 249Z" fill="#6cc46c"/><circle cx="407" cy="217" r="2.6" fill="#2020c0"/><circle cx="316" cy="135" r="2.6" fill="#2020c0"/><circle cx="316" cy="217" r="2.6" fill="#2020c0"/><circle cx="389" cy="135" r="2.6" fill="#2020c0"/><circle cx="389" cy="217" r="2.6" fill="#2020c0"/><circle cx="462" cy="135" r="2.6" fill="#2020c0"/><circle cx="462" cy="217" r="2.6" fill="#2020c0"/><rect x="186" y="337" width="112" height="128" fill="none" stroke="#3c3c3c" stroke-width="2.0"/><path d="M242 337L242 465" stroke="#3c3c3c" stroke-width="2.2" fill="none"/><path d="M186 355.3L298 355.3" stroke="#3c3c3c" stroke-width="2.2" fill="none"/><path d="M186 373.6L298 373.6" stroke="#3c3c3c" stroke-width="2.2" fill="none"/><path d="M186 391.9L298 391.9" stroke="#3c3c3c" stroke-width="2.2" fill="none"/><path d="M186 410.2L298 410.2" stroke="#3c3c3c" stroke-width="2.2" fill="none"/><path d="M186 428.5L298 428.5" stroke="#3c3c3c" stroke-width="2.2" fill="none"/><path d="M186 446.8L298 446.8" stroke="#3c3c3c" stroke-width="2.2" fill="none"/><rect x="215" y="467" width="65" height="12" fill="#cfcfcf" opacity="0.75"/><rect x="285" y="318" width="12" height="16" fill="#cfcfcf" opacity="0.75"/><polyline points="298,364 325,364 325,297" fill="none" stroke="#4a4aff" stroke-width="2.1" /><rect x="312" y="284" width="26" height="9" fill="#d8d8ff"/><polyline points="325,328 388,328" fill="none" stroke="#4a4aff" stroke-width="2.1" /><path d="M388 320V336L397 328Z" fill="#6cc46c"/><circle cx="325" cy="328" r="2.6" fill="#2020c0"/><path d="M355 314V342M363 314V342" stroke="#9a9a9a" stroke-width="3.5"/><rect x="350" y="292" width="16" height="18" fill="#cfcfcf" opacity="0.75"/><rect x="352" y="346" width="28" height="12" fill="#cfcfcf" opacity="0.75"/><rect x="352" y="366" width="20" height="12" fill="#cfcfcf" opacity="0.75"/><polyline points="298,382 745,382" fill="none" stroke="#4a4aff" stroke-width="2.1" /><polyline points="298,400 745,400" fill="none" stroke="#4a4aff" stroke-width="2.1" /><rect x="498" y="374" width="18" height="10" fill="#cfcfcf" opacity="0.75"/><rect x="498" y="390" width="18" height="10" fill="#cfcfcf" opacity="0.75"/><polyline points="298,419 352,419 352,565 334,565" fill="none" stroke="#4a4aff" stroke-width="2.1" /><polyline points="298,438 316,438 316,456" fill="none" stroke="#4a4aff" stroke-width="2.1" /><polyline points="316,456 316,500" fill="none" stroke="#4a4aff" stroke-width="2.1" /><rect x="308" y="500" width="15" height="40" fill="#fff" stroke="#777" stroke-width="2.2"/><polyline points="316,540 316,565 334,565 334,572" fill="none" stroke="#4a4aff" stroke-width="2.1" /><path d="M325 572H343L334 581Z" fill="#6cc46c"/><rect x="326" y="495" width="14" height="25" fill="#cfcfcf" opacity="0.75"/><circle cx="316" cy="456" r="2.6" fill="#2020c0"/><circle cx="334" cy="565" r="2.6" fill="#2020c0"/><polyline points="490,287 490,300 525,300" fill="none" stroke="#4a4aff" stroke-width="2.1" /><rect x="525" y="293" width="38" height="14" fill="#fff" stroke="#777" stroke-width="2.2"/><polyline points="563,300 618,300 618,346 745,346" fill="none" stroke="#4a4aff" stroke-width="2.1" /><polyline points="490,300 490,355 525,355" fill="none" stroke="#4a4aff" stroke-width="2.1" /><rect x="525" y="348" width="38" height="14" fill="#fff" stroke="#777" stroke-width="2.2"/><polyline points="563,355 600,355 600,364 745,364" fill="none" stroke="#4a4aff" stroke-width="2.1" /><rect x="477" y="274" width="26" height="9" fill="#d8d8ff"/><rect x="528" y="272" width="14" height="18" fill="#cfcfcf" opacity="0.75"/><rect x="530" y="310" width="26" height="12" fill="#cfcfcf" opacity="0.75"/><rect x="530" y="364" width="26" height="12" fill="#cfcfcf" opacity="0.75"/><circle cx="490" cy="300" r="2.6" fill="#2020c0"/><polyline points="445,620 445,419 745,419" fill="none" stroke="#4a4aff" stroke-width="2.1" /><polyline points="572,740 572,438 745,438" fill="none" stroke="#4a4aff" stroke-width="2.1" /><polyline points="445,620 499,620 499,740" fill="none" stroke="#4a4aff" stroke-width="2.1" /><polyline points="445,703 445,740 572,740" fill="none" stroke="#4a4aff" stroke-width="2.1" /><polyline points="445,620 445,655" fill="none" stroke="#4a4aff" stroke-width="2.1" /><polyline points="499,676 553,676" fill="none" stroke="#4a4aff" stroke-width="2.1" /><path d="M553 668V684L562 676Z" fill="#6cc46c"/><rect x="407" y="655" width="56" height="48" fill="#f1f1f1" stroke="#666" stroke-width="2.4"/><text x="435" y="691" font-size="30" fill="#555" text-anchor="middle" font-family="Liberation Sans, sans-serif">0</text><path d="M425 614L425 655" stroke="#4a4aff" stroke-width="2.1" fill="none"/><path d="M416 614H434L425 605Z" fill="#6cc46c"/><path d="M425 703L425 746" stroke="#4a4aff" stroke-width="2.1" fill="none"/><path d="M416 746H434L425 755Z" fill="#6cc46c"/><path d="M485 641H513M485 649H513M485 704H513M485 712H513" stroke="#9a9a9a" stroke-width="3.5"/><rect x="516" y="622" width="14" height="26" fill="#cfcfcf" opacity="0.75"/><rect x="520" y="652" width="16" height="12" fill="#cfcfcf" opacity="0.75"/><rect x="516" y="690" width="14" height="26" fill="#cfcfcf" opacity="0.75"/><rect x="520" y="716" width="16" height="12" fill="#cfcfcf" opacity="0.75"/><rect x="386" y="640" width="12" height="20" fill="#cfcfcf" opacity="0.75"/><circle cx="445" cy="620" r="2.6" fill="#2020c0"/><circle cx="499" cy="620" r="2.6" fill="#2020c0"/><circle cx="499" cy="676" r="2.6" fill="#2020c0"/><circle cx="499" cy="740" r="2.6" fill="#2020c0"/><rect x="745" y="172" width="167" height="623" fill="#fff" stroke="#3c3c3c" stroke-width="2.4"/><path d="M800 172L800 795" stroke="#3c3c3c" stroke-width="2.2" fill="none"/><path d="M848 172L848 795" stroke="#3c3c3c" stroke-width="2.2" fill="none"/><rect x="800" y="145" width="14" height="18" fill="#cfcfcf" opacity="0.75"/><rect x="795" y="797" width="85" height="12" fill="#cfcfcf" opacity="0.75"/><path d="M672 190.0L745 190.0" stroke="#4a4aff" stroke-width="2.1" fill="none"/><path d="M672 183.0L664 190.0L672 197.0" stroke="#6cc46c" stroke-width="3" fill="none"/><rect x="700" y="181.0" width="10" height="8" fill="#cfcfcf" opacity="0.75"/><rect x="750" y="185.0" width="12" height="9" fill="#cfcfcf" opacity="0.75"/><path d="M672 208.5L745 208.5" stroke="#4a4aff" stroke-width="2.1" fill="none"/><path d="M672 201.5L664 208.5L672 215.5" stroke="#6cc46c" stroke-width="3" fill="none"/><rect x="700" y="199.5" width="10" height="8" fill="#cfcfcf" opacity="0.75"/><rect x="750" y="203.5" width="12" height="9" fill="#cfcfcf" opacity="0.75"/><path d="M672 227.0L745 227.0" stroke="#4a4aff" stroke-width="2.1" fill="none"/><path d="M672 220.0L664 227.0L672 234.0" stroke="#6cc46c" stroke-width="3" fill="none"/><rect x="700" y="218.0" width="10" height="8" fill="#cfcfcf" opacity="0.75"/><rect x="750" y="222.0" width="12" height="9" fill="#cfcfcf" opacity="0.75"/><path d="M672 245.5L745 245.5" stroke="#4a4aff" stroke-width="2.1" fill="none"/><path d="M672 238.5L664 245.5L672 252.5" stroke="#6cc46c" stroke-width="3" fill="none"/><rect x="700" y="236.5" width="10" height="8" fill="#cfcfcf" opacity="0.75"/><rect x="750" y="240.5" width="12" height="9" fill="#cfcfcf" opacity="0.75"/><path d="M672 264.0L745 264.0" stroke="#4a4aff" stroke-width="2.1" fill="none"/><path d="M672 257.0L664 264.0L672 271.0" stroke="#6cc46c" stroke-width="3" fill="none"/><rect x="700" y="255.0" width="10" height="8" fill="#cfcfcf" opacity="0.75"/><rect x="750" y="259.0" width="12" height="9" fill="#cfcfcf" opacity="0.75"/><path d="M672 282.5L745 282.5" stroke="#4a4aff" stroke-width="2.1" fill="none"/><path d="M672 275.5L664 282.5L672 289.5" stroke="#6cc46c" stroke-width="3" fill="none"/><rect x="700" y="273.5" width="10" height="8" fill="#cfcfcf" opacity="0.75"/><rect x="750" y="277.5" width="12" height="9" fill="#cfcfcf" opacity="0.75"/><path d="M672 301.0L745 301.0" stroke="#4a4aff" stroke-width="2.1" fill="none"/><path d="M672 294.0L664 301.0L672 308.0" stroke="#6cc46c" stroke-width="3" fill="none"/><rect x="700" y="292.0" width="10" height="8" fill="#cfcfcf" opacity="0.75"/><rect x="750" y="296.0" width="12" height="9" fill="#cfcfcf" opacity="0.75"/><path d="M672 319.5L745 319.5" stroke="#4a4aff" stroke-width="2.1" fill="none"/><path d="M672 312.5L664 319.5L672 326.5" stroke="#6cc46c" stroke-width="3" fill="none"/><rect x="700" y="310.5" width="10" height="8" fill="#cfcfcf" opacity="0.75"/><rect x="750" y="314.5" width="12" height="9" fill="#cfcfcf" opacity="0.75"/><path d="M672 467.0L745 467.0" stroke="#4a4aff" stroke-width="2.1" fill="none"/><path d="M672 460.0L664 467.0L672 474.0" stroke="#6cc46c" stroke-width="3" fill="none"/><rect x="700" y="458.0" width="10" height="8" fill="#cfcfcf" opacity="0.75"/><rect x="750" y="462.0" width="12" height="9" fill="#cfcfcf" opacity="0.75"/><path d="M672 485.5L745 485.5" stroke="#4a4aff" stroke-width="2.1" fill="none"/><path d="M672 478.5L664 485.5L672 492.5" stroke="#6cc46c" stroke-width="3" fill="none"/><rect x="700" y="476.5" width="10" height="8" fill="#cfcfcf" opacity="0.75"/><rect x="750" y="480.5" width="12" height="9" fill="#cfcfcf" opacity="0.75"/><path d="M672 504.0L745 504.0" stroke="#4a4aff" stroke-width="2.1" fill="none"/><path d="M672 497.0L664 504.0L672 511.0" stroke="#6cc46c" stroke-width="3" fill="none"/><rect x="700" y="495.0" width="10" height="8" fill="#cfcfcf" opacity="0.75"/><rect x="750" y="499.0" width="12" height="9" fill="#cfcfcf" opacity="0.75"/><path d="M672 522.5L745 522.5" stroke="#4a4aff" stroke-width="2.1" fill="none"/><path d="M672 515.5L664 522.5L672 529.5" stroke="#6cc46c" stroke-width="3" fill="none"/><rect x="700" y="513.5" width="10" height="8" fill="#cfcfcf" opacity="0.75"/><rect x="750" y="517.5" width="12" height="9" fill="#cfcfcf" opacity="0.75"/><path d="M672 541.0L745 541.0" stroke="#4a4aff" stroke-width="2.1" fill="none"/><path d="M672 534.0L664 541.0L672 548.0" stroke="#6cc46c" stroke-width="3" fill="none"/><rect x="700" y="532.0" width="10" height="8" fill="#cfcfcf" opacity="0.75"/><rect x="750" y="536.0" width="12" height="9" fill="#cfcfcf" opacity="0.75"/><rect x="750" y="341" width="20" height="9" fill="#cfcfcf" opacity="0.75"/><rect x="750" y="359" width="20" height="9" fill="#cfcfcf" opacity="0.75"/><rect x="750" y="377" width="20" height="9" fill="#cfcfcf" opacity="0.75"/><rect x="750" y="395" width="20" height="9" fill="#cfcfcf" opacity="0.75"/><rect x="750" y="414" width="20" height="9" fill="#cfcfcf" opacity="0.75"/><rect x="750" y="433" width="20" height="9" fill="#cfcfcf" opacity="0.75"/><path d="M690 565L690 703" stroke="#4a4aff" stroke-width="2.1" fill="none"/><path d="M690 565L745 565" stroke="#4a4aff" stroke-width="2.1" fill="none"/><circle cx="690" cy="565" r="2.6" fill="#2020c0"/><rect x="750" y="560" width="14" height="9" fill="#cfcfcf" opacity="0.75"/><path d="M690 583L745 583" stroke="#4a4aff" stroke-width="2.1" fill="none"/><circle cx="690" cy="583" r="2.6" fill="#2020c0"/><rect x="750" y="578" width="14" height="9" fill="#cfcfcf" opacity="0.75"/><path d="M690 610L745 610" stroke="#4a4aff" stroke-width="2.1" fill="none"/><circle cx="690" cy="610" r="2.6" fill="#2020c0"/><rect x="750" y="605" width="14" height="9" fill="#cfcfcf" opacity="0.75"/><path d="M690 628L745 628" stroke="#4a4aff" stroke-width="2.1" fill="none"/><circle cx="690" cy="628" r="2.6" fill="#2020c0"/><rect x="750" y="623" width="14" height="9" fill="#cfcfcf" opacity="0.75"/><path d="M690 647L745 647" stroke="#4a4aff" stroke-width="2.1" fill="none"/><circle cx="690" cy="647" r="2.6" fill="#2020c0"/><rect x="750" y="642" width="14" height="9" fill="#cfcfcf" opacity="0.75"/><path d="M690 665L745 665" stroke="#4a4aff" stroke-width="2.1" fill="none"/><circle cx="690" cy="665" r="2.6" fill="#2020c0"/><rect x="750" y="660" width="14" height="9" fill="#cfcfcf" opacity="0.75"/><path d="M690 684L745 684" stroke="#4a4aff" stroke-width="2.1" fill="none"/><circle cx="690" cy="684" r="2.6" fill="#2020c0"/><rect x="750" y="679" width="14" height="9" fill="#cfcfcf" opacity="0.75"/><path d="M690 703L745 703" stroke="#4a4aff" stroke-width="2.1" fill="none"/><circle cx="690" cy="703" r="2.6" fill="#2020c0"/><rect x="750" y="698" width="14" height="9" fill="#cfcfcf" opacity="0.75"/><path d="M678 703L690 703" stroke="#4a4aff" stroke-width="2.1" fill="none"/><rect x="648" y="699" width="28" height="9" fill="#cfcfcf" opacity="0.75"/><rect x="695" y="556" width="28" height="9" fill="#cfcfcf" opacity="0.75"/><path d="M912 190L975 190" stroke="#4a4aff" stroke-width="2.1" fill="none"/><path d="M975 183L983 190L975 197" stroke="#6cc46c" stroke-width="3" fill="none"/><rect x="938" y="180" width="14" height="8" fill="#cfcfcf" opacity="0.75"/><path d="M912 346L975 346" stroke="#4a4aff" stroke-width="2.1" fill="none"/><path d="M975 339L983 346L975 353" stroke="#6cc46c" stroke-width="3" fill="none"/><rect x="938" y="336" width="14" height="8" fill="#cfcfcf" opacity="0.75"/><path d="M912 190.0L928 190.0" stroke="#4a4aff" stroke-width="2.1" fill="none"/><rect x="893" y="185.0" width="14" height="9" fill="#cfcfcf" opacity="0.75"/><path d="M912 208.05L928 208.05" stroke="#4a4aff" stroke-width="2.1" fill="none"/><rect x="893" y="203.05" width="14" height="9" fill="#cfcfcf" opacity="0.75"/><path d="M912 226.1L928 226.1" stroke="#4a4aff" stroke-width="2.1" fill="none"/><rect x="893" y="221.1" width="14" height="9" fill="#cfcfcf" opacity="0.75"/><path d="M912 244.15L928 244.15" stroke="#4a4aff" stroke-width="2.1" fill="none"/><rect x="893" y="239.15" width="14" height="9" fill="#cfcfcf" opacity="0.75"/><path d="M912 262.2L928 262.2" stroke="#4a4aff" stroke-width="2.1" fill="none"/><rect x="893" y="257.2" width="14" height="9" fill="#cfcfcf" opacity="0.75"/><path d="M912 280.25L928 280.25" stroke="#4a4aff" stroke-width="2.1" fill="none"/><rect x="893" y="275.25" width="14" height="9" fill="#cfcfcf" opacity="0.75"/><path d="M912 298.3L928 298.3" stroke="#4a4aff" stroke-width="2.1" fill="none"/><rect x="893" y="293.3" width="14" height="9" fill="#cfcfcf" opacity="0.75"/><path d="M912 316.35L928 316.35" stroke="#4a4aff" stroke-width="2.1" fill="none"/><rect x="893" y="311.35" width="14" height="9" fill="#cfcfcf" opacity="0.75"/><path d="M912 334.4L928 334.4" stroke="#4a4aff" stroke-width="2.1" fill="none"/><rect x="893" y="329.4" width="14" height="9" fill="#cfcfcf" opacity="0.75"/><path d="M912 352.45000000000005L928 352.45000000000005" stroke="#4a4aff" stroke-width="2.1" fill="none"/><rect x="893" y="347.45000000000005" width="14" height="9" fill="#cfcfcf" opacity="0.75"/><path d="M912 370.5L928 370.5" stroke="#4a4aff" stroke-width="2.1" fill="none"/><rect x="893" y="365.5" width="14" height="9" fill="#cfcfcf" opacity="0.75"/><path d="M912 388.55L928 388.55" stroke="#4a4aff" stroke-width="2.1" fill="none"/><rect x="893" y="383.55" width="14" height="9" fill="#cfcfcf" opacity="0.75"/><path d="M912 406.6L928 406.6" stroke="#4a4aff" stroke-width="2.1" fill="none"/><rect x="893" y="401.6" width="14" height="9" fill="#cfcfcf" opacity="0.75"/><path d="M912 424.65L928 424.65" stroke="#4a4aff" stroke-width="2.1" fill="none"/><rect x="893" y="419.65" width="14" height="9" fill="#cfcfcf" opacity="0.75"/><path d="M912 442.70000000000005L928 442.70000000000005" stroke="#4a4aff" stroke-width="2.1" fill="none"/><rect x="893" y="437.70000000000005" width="14" height="9" fill="#cfcfcf" opacity="0.75"/><path d="M912 460.75L928 460.75" stroke="#4a4aff" stroke-width="2.1" fill="none"/><rect x="893" y="455.75" width="14" height="9" fill="#cfcfcf" opacity="0.75"/><path d="M912 478.8L928 478.8" stroke="#4a4aff" stroke-width="2.1" fill="none"/><rect x="893" y="473.8" width="14" height="9" fill="#cfcfcf" opacity="0.75"/><path d="M912 496.85L928 496.85" stroke="#4a4aff" stroke-width="2.1" fill="none"/><rect x="893" y="491.85" width="14" height="9" fill="#cfcfcf" opacity="0.75"/><path d="M912 532.95L928 532.95" stroke="#4a4aff" stroke-width="2.1" fill="none"/><rect x="893" y="527.95" width="14" height="9" fill="#cfcfcf" opacity="0.75"/><path d="M912 551.0L928 551.0" stroke="#4a4aff" stroke-width="2.1" fill="none"/><rect x="893" y="546.0" width="14" height="9" fill="#cfcfcf" opacity="0.75"/><path d="M912 569.05L928 569.05" stroke="#4a4aff" stroke-width="2.1" fill="none"/><rect x="893" y="564.05" width="14" height="9" fill="#cfcfcf" opacity="0.75"/><path d="M912 605.1500000000001L928 605.1500000000001" stroke="#4a4aff" stroke-width="2.1" fill="none"/><rect x="893" y="600.1500000000001" width="14" height="9" fill="#cfcfcf" opacity="0.75"/><path d="M912 623.2L928 623.2" stroke="#4a4aff" stroke-width="2.1" fill="none"/><rect x="893" y="618.2" width="14" height="9" fill="#cfcfcf" opacity="0.75"/><path d="M912 641.25L928 641.25" stroke="#4a4aff" stroke-width="2.1" fill="none"/><rect x="893" y="636.25" width="14" height="9" fill="#cfcfcf" opacity="0.75"/><path d="M912 659.3L928 659.3" stroke="#4a4aff" stroke-width="2.1" fill="none"/><rect x="893" y="654.3" width="14" height="9" fill="#cfcfcf" opacity="0.75"/><path d="M912 677.35L928 677.35" stroke="#4a4aff" stroke-width="2.1" fill="none"/><rect x="893" y="672.35" width="14" height="9" fill="#cfcfcf" opacity="0.75"/><path d="M912 695.4000000000001L928 695.4000000000001" stroke="#4a4aff" stroke-width="2.1" fill="none"/><rect x="893" y="690.4000000000001" width="14" height="9" fill="#cfcfcf" opacity="0.75"/><path d="M912 713.45L928 713.45" stroke="#4a4aff" stroke-width="2.1" fill="none"/><rect x="893" y="708.45" width="14" height="9" fill="#cfcfcf" opacity="0.75"/><path d="M912 731.5L928 731.5" stroke="#4a4aff" stroke-width="2.1" fill="none"/><rect x="893" y="726.5" width="14" height="9" fill="#cfcfcf" opacity="0.75"/><path d="M912 749.5500000000001L928 749.5500000000001" stroke="#4a4aff" stroke-width="2.1" fill="none"/><rect x="893" y="744.5500000000001" width="14" height="9" fill="#cfcfcf" opacity="0.75"/><path d="M912 767.6L928 767.6" stroke="#4a4aff" stroke-width="2.1" fill="none"/><rect x="893" y="762.6" width="14" height="9" fill="#cfcfcf" opacity="0.75"/><path d="M912 785.65L928 785.65" stroke="#4a4aff" stroke-width="2.1" fill="none"/><rect x="893" y="780.65" width="14" height="9" fill="#cfcfcf" opacity="0.75"/><path d="M912 382L985 382" stroke="#4a4aff" stroke-width="2.1" fill="none"/><circle cx="1003" cy="382" r="18" fill="#fff" stroke="#555" stroke-width="2.2"/><path d="M994 372V392L1010 382ZM1011 372V392" stroke="#555" stroke-width="2" fill="none"/><path d="M1021 382L1062 382" stroke="#4a4aff" stroke-width="2.1" fill="none"/><rect x="1065" y="378" width="26" height="9" fill="#d8d8ff"/><rect x="985" y="404" width="62" height="10" fill="#cfcfcf" opacity="0.75"/><rect x="1003" y="338" width="12" height="20" fill="#cfcfcf" opacity="0.75"/><circle cx="1062" cy="382" r="2.6" fill="#2020c0"/><path d="M975 510L975 565" stroke="#4a4aff" stroke-width="2.1" fill="none"/><path d="M912 510L975 510" stroke="#4a4aff" stroke-width="2.1" fill="none"/><circle cx="975" cy="510" r="2.6" fill="#2020c0"/><path d="M912 528L975 528" stroke="#4a4aff" stroke-width="2.1" fill="none"/><circle cx="975" cy="528" r="2.6" fill="#2020c0"/><path d="M912 547L975 547" stroke="#4a4aff" stroke-width="2.1" fill="none"/><circle cx="975" cy="547" r="2.6" fill="#2020c0"/><path d="M912 565L975 565" stroke="#4a4aff" stroke-width="2.1" fill="none"/><circle cx="975" cy="565" r="2.6" fill="#2020c0"/><path d="M975 565L990 565" stroke="#4a4aff" stroke-width="2.1" fill="none"/><rect x="992" y="561" width="26" height="9" fill="#d8d8ff"/><rect x="937" y="500" width="26" height="9" fill="#d8d8ff"/><rect x="878" y="508" width="30" height="10" fill="#cfcfcf" opacity="0.75"/><rect x="878" y="528" width="30" height="10" fill="#cfcfcf" opacity="0.75"/><rect x="878" y="546" width="30" height="10" fill="#cfcfcf" opacity="0.75"/><rect x="878" y="564" width="30" height="10" fill="#cfcfcf" opacity="0.75"/><path d="M975 592L975 800" stroke="#4a4aff" stroke-width="2.1" fill="none"/><path d="M966 800H984L975 809Z" fill="#6cc46c"/><path d="M912 592L975 592" stroke="#4a4aff" stroke-width="2.1" fill="none"/><circle cx="975" cy="592" r="2.6" fill="#2020c0"/><path d="M912 620L975 620" stroke="#4a4aff" stroke-width="2.1" fill="none"/><circle cx="975" cy="620" r="2.6" fill="#2020c0"/><path d="M912 638L975 638" stroke="#4a4aff" stroke-width="2.1" fill="none"/><circle cx="975" cy="638" r="2.6" fill="#2020c0"/><path d="M912 665L975 665" stroke="#4a4aff" stroke-width="2.1" fill="none"/><circle cx="975" cy="665" r="2.6" fill="#2020c0"/><path d="M912 684L975 684" stroke="#4a4aff" stroke-width="2.1" fill="none"/><circle cx="975" cy="684" r="2.6" fill="#2020c0"/><path d="M912 703L975 703" stroke="#4a4aff" stroke-width="2.1" fill="none"/><circle cx="975" cy="703" r="2.6" fill="#2020c0"/><path d="M912 720L975 720" stroke="#4a4aff" stroke-width="2.1" fill="none"/><circle cx="975" cy="720" r="2.6" fill="#2020c0"/><path d="M912 740L975 740" stroke="#4a4aff" stroke-width="2.1" fill="none"/><circle cx="975" cy="740" r="2.6" fill="#2020c0"/><path d="M912 758L975 758" stroke="#4a4aff" stroke-width="2.1" fill="none"/><circle cx="975" cy="758" r="2.6" fill="#2020c0"/><path d="M912 776L975 776" stroke="#4a4aff" stroke-width="2.1" fill="none"/><circle cx="975" cy="776" r="2.6" fill="#2020c0"/><rect x="1340" y="198" width="112" height="285" fill="#fff" stroke="#3c3c3c" stroke-width="2.4"/><path d="M1378 198L1378 483" stroke="#3c3c3c" stroke-width="2.2" fill="none"/><path d="M1414 198L1414 483" stroke="#3c3c3c" stroke-width="2.2" fill="none"/><rect x="1380" y="180" width="22" height="16" fill="#cfcfcf" opacity="0.75"/><rect x="1362" y="485" width="112" height="12" fill="#cfcfcf" opacity="0.75"/><polyline points="1108,200 1287,200 1287,272 1340,272" fill="none" stroke="#4a4aff" stroke-width="2.1" /><rect x="1079" y="196" width="26" height="9" fill="#d8d8ff"/><path d="M1287 217L1340 217" stroke="#4a4aff" stroke-width="2.1" fill="none"/><circle cx="1287" cy="217" r="2.6" fill="#2020c0"/><path d="M1287 235L1340 235" stroke="#4a4aff" stroke-width="2.1" fill="none"/><circle cx="1287" cy="235" r="2.6" fill="#2020c0"/><path d="M1287 254L1340 254" stroke="#4a4aff" stroke-width="2.1" fill="none"/><circle cx="1287" cy="254" r="2.6" fill="#2020c0"/><path d="M1149 200L1149 252" stroke="#4a4aff" stroke-width="2.1" fill="none"/><path d="M1135 227H1163M1135 235H1163" stroke="#9a9a9a" stroke-width="3.5"/><path d="M1140 252H1158L1149 261Z" fill="#6cc46c"/><circle cx="1149" cy="200" r="2.6" fill="#2020c0"/><rect x="1167" y="208" width="14" height="40" fill="#cfcfcf" opacity="0.75"/><rect x="1181" y="222" width="10" height="22" fill="#cfcfcf" opacity="0.75"/><path d="M1213 200L1213 252" stroke="#4a4aff" stroke-width="2.1" fill="none"/><path d="M1199 227H1227M1199 235H1227" stroke="#9a9a9a" stroke-width="3.5"/><path d="M1204 252H1222L1213 261Z" fill="#6cc46c"/><circle cx="1213" cy="200" r="2.6" fill="#2020c0"/><rect x="1231" y="208" width="14" height="40" fill="#cfcfcf" opacity="0.75"/><rect x="1245" y="222" width="10" height="22" fill="#cfcfcf" opacity="0.75"/><path d="M1325 300L1340 300" stroke="#4a4aff" stroke-width="2.1" fill="none"/><path d="M1325 318L1340 318" stroke="#4a4aff" stroke-width="2.1" fill="none"/><path d="M1325 355L1340 355" stroke="#4a4aff" stroke-width="2.1" fill="none"/><path d="M1270 337L1340 337" stroke="#4a4aff" stroke-width="2.1" fill="none"/><path d="M1270 330L1262 337L1270 344" stroke="#6cc46c" stroke-width="3" fill="none"/><rect x="1295" y="327" width="12" height="8" fill="#cfcfcf" opacity="0.75"/><path d="M1270 382L1340 382" stroke="#4a4aff" stroke-width="2.1" fill="none"/><path d="M1270 375L1262 382L1270 389" stroke="#6cc46c" stroke-width="3" fill="none"/><rect x="1295" y="372" width="12" height="8" fill="#cfcfcf" opacity="0.75"/><path d="M1270 400L1340 400" stroke="#4a4aff" stroke-width="2.1" fill="none"/><path d="M1270 393L1262 400L1270 407" stroke="#6cc46c" stroke-width="3" fill="none"/><rect x="1295" y="390" width="12" height="8" fill="#cfcfcf" opacity="0.75"/><path d="M1270 419L1340 419" stroke="#4a4aff" stroke-width="2.1" fill="none"/><path d="M1270 412L1262 419L1270 426" stroke="#6cc46c" stroke-width="3" fill="none"/><rect x="1295" y="409" width="12" height="8" fill="#cfcfcf" opacity="0.75"/><path d="M1270 447L1340 447" stroke="#4a4aff" stroke-width="2.1" fill="none"/><path d="M1270 440L1262 447L1270 454" stroke="#6cc46c" stroke-width="3" fill="none"/><rect x="1295" y="437" width="12" height="8" fill="#cfcfcf" opacity="0.75"/><path d="M1270 465L1340 465" stroke="#4a4aff" stroke-width="2.1" fill="none"/><path d="M1270 458L1262 465L1270 472" stroke="#6cc46c" stroke-width="3" fill="none"/><rect x="1295" y="455" width="12" height="8" fill="#cfcfcf" opacity="0.75"/><path d="M1452 217.0L1525 217.0" stroke="#4a4aff" stroke-width="2.1" fill="none"/><path d="M1525 210.0L1533 217.0L1525 224.0" stroke="#6cc46c" stroke-width="3" fill="none"/><rect x="1487" y="207.0" width="10" height="8" fill="#cfcfcf" opacity="0.75"/><path d="M1452 235.4L1525 235.4" stroke="#4a4aff" stroke-width="2.1" fill="none"/><path d="M1525 228.4L1533 235.4L1525 242.4" stroke="#6cc46c" stroke-width="3" fill="none"/><rect x="1487" y="225.4" width="10" height="8" fill="#cfcfcf" opacity="0.75"/><path d="M1452 253.8L1525 253.8" stroke="#4a4aff" stroke-width="2.1" fill="none"/><path d="M1525 246.8L1533 253.8L1525 260.8" stroke="#6cc46c" stroke-width="3" fill="none"/><rect x="1487" y="243.8" width="10" height="8" fill="#cfcfcf" opacity="0.75"/><path d="M1452 272.2L1525 272.2" stroke="#4a4aff" stroke-width="2.1" fill="none"/><path d="M1525 265.2L1533 272.2L1525 279.2" stroke="#6cc46c" stroke-width="3" fill="none"/><rect x="1487" y="262.2" width="10" height="8" fill="#cfcfcf" opacity="0.75"/><path d="M1452 290.6L1525 290.6" stroke="#4a4aff" stroke-width="2.1" fill="none"/><path d="M1525 283.6L1533 290.6L1525 297.6" stroke="#6cc46c" stroke-width="3" fill="none"/><rect x="1487" y="280.6" width="10" height="8" fill="#cfcfcf" opacity="0.75"/><path d="M1452 309.0L1525 309.0" stroke="#4a4aff" stroke-width="2.1" fill="none"/><path d="M1525 302.0L1533 309.0L1525 316.0" stroke="#6cc46c" stroke-width="3" fill="none"/><rect x="1487" y="299.0" width="10" height="8" fill="#cfcfcf" opacity="0.75"/><path d="M1452 327.4L1525 327.4" stroke="#4a4aff" stroke-width="2.1" fill="none"/><path d="M1525 320.4L1533 327.4L1525 334.4" stroke="#6cc46c" stroke-width="3" fill="none"/><rect x="1487" y="317.4" width="10" height="8" fill="#cfcfcf" opacity="0.75"/><path d="M1452 345.79999999999995L1525 345.79999999999995" stroke="#4a4aff" stroke-width="2.1" fill="none"/><path d="M1525 338.79999999999995L1533 345.79999999999995L1525 352.79999999999995" stroke="#6cc46c" stroke-width="3" fill="none"/><rect x="1487" y="335.79999999999995" width="10" height="8" fill="#cfcfcf" opacity="0.75"/><polyline points="1452,374 1497,374 1497,432" fill="none" stroke="#4a4aff" stroke-width="2.1" /><path d="M1488 432H1506L1497 441Z" fill="#6cc46c"/><path d="M1452 392L1497 392" stroke="#4a4aff" stroke-width="2.1" fill="none"/><circle cx="1497" cy="392" r="2.6" fill="#2020c0"/><path d="M1452 410L1497 410" stroke="#4a4aff" stroke-width="2.1" fill="none"/><circle cx="1497" cy="410" r="2.6" fill="#2020c0"/><path d="M1452 428L1497 428" stroke="#4a4aff" stroke-width="2.1" fill="none"/><circle cx="1497" cy="428" r="2.6" fill="#2020c0"/><rect x="1345" y="212.0" width="10" height="8" fill="#cfcfcf" opacity="0.75"/><rect x="1436" y="212.0" width="10" height="8" fill="#cfcfcf" opacity="0.75"/><rect x="1345" y="230.2" width="10" height="8" fill="#cfcfcf" opacity="0.75"/><rect x="1436" y="230.2" width="10" height="8" fill="#cfcfcf" opacity="0.75"/><rect x="1345" y="248.4" width="10" height="8" fill="#cfcfcf" opacity="0.75"/><rect x="1436" y="248.4" width="10" height="8" fill="#cfcfcf" opacity="0.75"/><rect x="1345" y="266.6" width="10" height="8" fill="#cfcfcf" opacity="0.75"/><rect x="1436" y="266.6" width="10" height="8" fill="#cfcfcf" opacity="0.75"/><rect x="1345" y="284.8" width="10" height="8" fill="#cfcfcf" opacity="0.75"/><rect x="1436" y="284.8" width="10" height="8" fill="#cfcfcf" opacity="0.75"/><rect x="1345" y="303.0" width="10" height="8" fill="#cfcfcf" opacity="0.75"/><rect x="1436" y="303.0" width="10" height="8" fill="#cfcfcf" opacity="0.75"/><rect x="1345" y="321.2" width="10" height="8" fill="#cfcfcf" opacity="0.75"/><rect x="1436" y="321.2" width="10" height="8" fill="#cfcfcf" opacity="0.75"/><rect x="1345" y="339.4" width="10" height="8" fill="#cfcfcf" opacity="0.75"/><rect x="1436" y="339.4" width="10" height="8" fill="#cfcfcf" opacity="0.75"/><rect x="1345" y="357.6" width="10" height="8" fill="#cfcfcf" opacity="0.75"/><rect x="1436" y="357.6" width="10" height="8" fill="#cfcfcf" opacity="0.75"/><rect x="1345" y="375.79999999999995" width="10" height="8" fill="#cfcfcf" opacity="0.75"/><rect x="1436" y="375.79999999999995" width="10" height="8" fill="#cfcfcf" opacity="0.75"/><rect x="1345" y="394.0" width="10" height="8" fill="#cfcfcf" opacity="0.75"/><rect x="1436" y="394.0" width="10" height="8" fill="#cfcfcf" opacity="0.75"/><rect x="1345" y="412.2" width="10" height="8" fill="#cfcfcf" opacity="0.75"/><rect x="1436" y="412.2" width="10" height="8" fill="#cfcfcf" opacity="0.75"/><rect x="1345" y="430.4" width="10" height="8" fill="#cfcfcf" opacity="0.75"/><rect x="1436" y="430.4" width="10" height="8" fill="#cfcfcf" opacity="0.75"/><rect x="1345" y="448.6" width="10" height="8" fill="#cfcfcf" opacity="0.75"/><rect x="1436" y="448.6" width="10" height="8" fill="#cfcfcf" opacity="0.75"/><rect x="1345" y="466.79999999999995" width="10" height="8" fill="#cfcfcf" opacity="0.75"/><rect x="1436" y="466.79999999999995" width="10" height="8" fill="#cfcfcf" opacity="0.75"/><rect x="249" y="868" width="131" height="73" fill="#f6f6f6" stroke="#666" stroke-width="2.4"/><path d="M288 868L288 941" stroke="#666" stroke-width="2.2" fill="none"/><path d="M343 868L343 941" stroke="#666" stroke-width="2.2" fill="none"/><polyline points="205,826 205,885 249,885" fill="none" stroke="#4a4aff" stroke-width="2.1" /><rect x="192" y="814" width="26" height="9" fill="#d8d8ff"/><polyline points="380,885 520,885" fill="none" stroke="#4a4aff" stroke-width="2.1" /><rect x="525" y="881" width="26" height="9" fill="#d8d8ff"/><circle cx="520" cy="885" r="2.6" fill="#2020c0"/><path d="M462 885L462 930" stroke="#4a4aff" stroke-width="2.1" fill="none"/><path d="M448 904H476M448 912H476" stroke="#9a9a9a" stroke-width="3.5"/><path d="M453 930H471L462 939Z" fill="#6cc46c"/><circle cx="462" cy="885" r="2.6" fill="#2020c0"/><rect x="480" y="895" width="16" height="30" fill="#cfcfcf" opacity="0.75"/><rect x="482" y="930" width="18" height="14" fill="#cfcfcf" opacity="0.75"/><polyline points="249,905 215,905 215,978 407,978 407,923 380,923" fill="none" stroke="#4a4aff" stroke-width="2.1" /><path d="M297 978L297 986" stroke="#4a4aff" stroke-width="2.1" fill="none"/><path d="M288 986H306L297 995Z" fill="#6cc46c"/><rect x="278" y="842" width="16" height="16" fill="#cfcfcf" opacity="0.75"/><rect x="280" y="944" width="65" height="11" fill="#cfcfcf" opacity="0.75"/><polyline points="627,950 627,868 700,868 700,950 590,950" fill="none" stroke="#4a4aff" stroke-width="2.1" /><path d="M582 943L574 950L582 957" stroke="#6cc46c" stroke-width="3" fill="none"/><path d="M665 848L665 868" stroke="#4a4aff" stroke-width="2.1" fill="none"/><rect x="652" y="840" width="26" height="9" fill="#d8d8ff"/><circle cx="665" cy="868" r="2.6" fill="#2020c0"/><rect x="620" y="895" width="14" height="40" fill="#fff" stroke="#777" stroke-width="2.2"/><rect x="636" y="897" width="16" height="26" fill="#cfcfcf" opacity="0.75"/><text x="690" y="921" font-size="16" fill="#444" font-family="Liberation Sans, sans-serif">Ж</text><rect x="712" y="897" width="16" height="20" fill="#cfcfcf" opacity="0.75"/><rect x="716" y="918" width="62" height="10" fill="#cfcfcf" opacity="0.75"/><rect x="596" y="940" width="26" height="8" fill="#cfcfcf" opacity="0.75"/><path d="M663 950L663 1002" stroke="#4a4aff" stroke-width="2.1" fill="none"/><path d="M649 976H677M649 984H677" stroke="#9a9a9a" stroke-width="3.5"/><path d="M654 1002H672L663 1011Z" fill="#6cc46c"/><rect x="682" y="958" width="18" height="36" fill="#cfcfcf" opacity="0.75"/><circle cx="663" cy="950" r="2.6" fill="#2020c0"/><circle cx="627" cy="950" r="2.6" fill="#2020c0"/></g></svg><svg class="b" style="left:998px;top:183px" width="600" height="310" viewBox="998 183 600 310"><polygon points="1099.3,411.0 1452.1,411.0 1460.1,403.0 1460.1,299.0 1452.1,291.0 1099.3,291.0 1091.3,299.0 1091.3,403.0" fill="#a3152a"/><g stroke="#b83040" stroke-width="0.6" opacity="0.7"><path d="M1111.3 291.0V411.0"/><path d="M1131.3 291.0V411.0"/><path d="M1151.3 291.0V411.0"/><path d="M1171.3 291.0V411.0"/><path d="M1191.3 291.0V411.0"/><path d="M1211.3 291.0V411.0"/><path d="M1231.3 291.0V411.0"/><path d="M1251.3 291.0V411.0"/><path d="M1271.3 291.0V411.0"/><path d="M1291.3 291.0V411.0"/><path d="M1311.3 291.0V411.0"/><path d="M1331.3 291.0V411.0"/><path d="M1351.3 291.0V411.0"/><path d="M1371.3 291.0V411.0"/><path d="M1391.3 291.0V411.0"/><path d="M1411.3 291.0V411.0"/><path d="M1431.3 291.0V411.0"/><path d="M1451.3 291.0V411.0"/><path d="M1091.3 391.0H1460.1"/><path d="M1091.3 371.0H1460.1"/><path d="M1091.3 351.0H1460.1"/><path d="M1091.3 331.0H1460.1"/><path d="M1091.3 311.0H1460.1"/></g><polygon points="1320.1,395.0 1331.3,403.8 1379.3,403.8 1407.3,398.2 1436.9,398.2 1440.1,387.0 1440.1,311.8 1415.3,310.2 1405.7,301.4 1339.3,298.2 1318.5,308.6 1322.5,335.0 1316.1,355.0" fill="#5a2350" opacity="0.6"/><rect x="1341.7" y="331.3" width="46.4" height="46.4" fill="#a3152a" /><rect x="1416.1" y="317.4" width="40.0" height="69.6" fill="#4a2852" /><rect x="1117.4" y="299.0" width="137.1" height="97.6" fill="none" stroke="#b8433c" stroke-width="1.6"/><circle cx="1124.1" cy="307.0" r="3.6" fill="#b8433c"/><text x="1197.7" y="339.8" font-size="15" font-weight="700" font-style="italic" fill="#b02a3a" text-anchor="middle" transform="translate(2395.4 0) scale(-1 1)" font-family="Liberation Sans, sans-serif">Micron</text><text x="1181.7" y="407.8" font-size="7" fill="#c05058" text-anchor="middle" font-family="Liberation Sans, sans-serif">D2</text><rect x="1102.5" y="299.4" width="13.2" height="97.6" fill="#5d6e86" opacity="0.8"/><rect x="1103.3" y="393.6" width="11.6" height="2.1" fill="#ff0000" /><rect x="1103.3" y="389.5" width="11.6" height="2.1" fill="#ff0000" /><rect x="1103.3" y="385.5" width="11.6" height="2.1" fill="#ff0000" /><rect x="1103.3" y="381.4" width="11.6" height="2.1" fill="#ff0000" /><rect x="1103.3" y="377.4" width="11.6" height="2.1" fill="#ff0000" /><rect x="1103.3" y="373.4" width="11.6" height="2.1" fill="#ff0000" /><rect x="1103.3" y="369.3" width="11.6" height="2.1" fill="#ff0000" /><rect x="1103.3" y="365.3" width="11.6" height="2.1" fill="#ff0000" /><rect x="1103.3" y="361.2" width="11.6" height="2.1" fill="#ff0000" /><rect x="1103.3" y="357.2" width="11.6" height="2.1" fill="#ff0000" /><rect x="1103.3" y="353.2" width="11.6" height="2.1" fill="#ff0000" /><rect x="1103.3" y="349.1" width="11.6" height="2.1" fill="#ff0000" /><rect x="1103.3" y="345.1" width="11.6" height="2.1" fill="#ff0000" /><rect x="1103.3" y="341.0" width="11.6" height="2.1" fill="#ff0000" /><rect x="1103.3" y="337.0" width="11.6" height="2.1" fill="#ff0000" /><rect x="1103.3" y="333.0" width="11.6" height="2.1" fill="#ff0000" /><rect x="1103.3" y="328.9" width="11.6" height="2.1" fill="#ff0000" /><rect x="1103.3" y="324.9" width="11.6" height="2.1" fill="#ff0000" /><rect x="1103.3" y="320.8" width="11.6" height="2.1" fill="#ff0000" /><rect x="1103.3" y="316.8" width="11.6" height="2.1" fill="#ff0000" /><rect x="1103.3" y="312.8" width="11.6" height="2.1" fill="#ff0000" /><rect x="1103.3" y="308.7" width="11.6" height="2.1" fill="#ff0000" /><rect x="1103.3" y="304.7" width="11.6" height="2.1" fill="#ff0000" /><rect x="1103.3" y="300.6" width="11.6" height="2.1" fill="#ff0000" /><rect x="1256.9" y="299.4" width="12.4" height="97.6" fill="#5d6e86" opacity="0.8"/><rect x="1257.7" y="393.6" width="10.8" height="2.1" fill="#ff0000" /><rect x="1257.7" y="389.5" width="10.8" height="2.1" fill="#ff0000" /><rect x="1257.7" y="385.5" width="10.8" height="2.1" fill="#ff0000" /><rect x="1257.7" y="381.4" width="10.8" height="2.1" fill="#ff0000" /><rect x="1257.7" y="377.4" width="10.8" height="2.1" fill="#ff0000" /><rect x="1257.7" y="373.4" width="10.8" height="2.1" fill="#ff0000" /><rect x="1257.7" y="369.3" width="10.8" height="2.1" fill="#ff0000" /><rect x="1257.7" y="365.3" width="10.8" height="2.1" fill="#ff0000" /><rect x="1257.7" y="361.2" width="10.8" height="2.1" fill="#ff0000" /><rect x="1257.7" y="357.2" width="10.8" height="2.1" fill="#ff0000" /><rect x="1257.7" y="353.2" width="10.8" height="2.1" fill="#ff0000" /><rect x="1257.7" y="349.1" width="10.8" height="2.1" fill="#ff0000" /><rect x="1257.7" y="345.1" width="10.8" height="2.1" fill="#ff0000" /><rect x="1257.7" y="341.0" width="10.8" height="2.1" fill="#ff0000" /><rect x="1257.7" y="337.0" width="10.8" height="2.1" fill="#ff0000" /><rect x="1257.7" y="333.0" width="10.8" height="2.1" fill="#ff0000" /><rect x="1257.7" y="328.9" width="10.8" height="2.1" fill="#ff0000" /><rect x="1257.7" y="324.9" width="10.8" height="2.1" fill="#ff0000" /><rect x="1257.7" y="320.8" width="10.8" height="2.1" fill="#ff0000" /><rect x="1257.7" y="316.8" width="10.8" height="2.1" fill="#ff0000" /><rect x="1257.7" y="312.8" width="10.8" height="2.1" fill="#ff0000" /><rect x="1257.7" y="308.7" width="10.8" height="2.1" fill="#ff0000" /><rect x="1257.7" y="304.7" width="10.8" height="2.1" fill="#ff0000" /><rect x="1257.7" y="300.6" width="10.8" height="2.1" fill="#ff0000" /><g fill="none" stroke="#2a2030" stroke-width="3.4" stroke-linejoin="round" stroke-linecap="round" opacity="0.35"><polyline points="1339.3,381.4 1339.3,388.6 1318.7,403.0"/><polyline points="1343.3,381.4 1343.3,388.6 1325.6,403.0"/><polyline points="1347.3,381.4 1347.3,388.6 1333.2,403.0"/><polyline points="1351.3,381.4 1351.3,388.6 1340.1,399.8"/><polyline points="1355.3,381.4 1355.3,388.6 1348.5,403.0"/><polyline points="1359.3,381.4 1359.3,388.6 1353.7,396.8"/><polyline points="1363.3,381.4 1363.3,388.6 1362.9,395.8"/><polyline points="1367.3,381.4 1367.3,388.6 1367.1,403.0"/><polyline points="1371.3,381.4 1371.3,388.6 1378.0,403.0"/><polyline points="1375.3,381.4 1375.3,388.6 1383.8,403.0"/><polyline points="1379.3,381.4 1379.3,388.6 1388.6,399.4"/><polyline points="1383.3,381.4 1383.3,388.6 1395.9,403.0"/><polyline points="1387.3,381.4 1387.3,388.6 1403.9,401.8"/><polyline points="1391.3,381.4 1391.3,388.6 1412.0,400.8"/><polyline points="1339.3,325.4 1339.3,318.2 1319.9,301.1"/><polyline points="1343.3,325.4 1343.3,318.2 1326.3,301.1"/><polyline points="1347.3,325.4 1347.3,318.2 1333.5,302.3"/><polyline points="1351.3,325.4 1351.3,318.2 1339.2,303.8"/><polyline points="1355.3,325.4 1355.3,318.2 1349.3,299.0"/><polyline points="1359.3,325.4 1359.3,318.2 1355.3,301.1"/><polyline points="1363.3,325.4 1363.3,318.2 1360.6,308.3"/><polyline points="1367.3,325.4 1367.3,318.2 1367.2,308.7"/><polyline points="1371.3,325.4 1371.3,318.2 1375.7,302.0"/><polyline points="1375.3,325.4 1375.3,318.2 1382.8,300.0"/><polyline points="1379.3,325.4 1379.3,318.2 1391.9,299.0"/><polyline points="1383.3,325.4 1383.3,318.2 1396.5,308.3"/><polyline points="1387.3,325.4 1387.3,318.2 1404.8,299.0"/><polyline points="1391.3,325.4 1391.3,318.2 1411.7,299.0"/><polyline points="1337.3,379.4 1330.1,379.4 1317.4,399.7"/><polyline points="1337.3,375.4 1330.1,375.4 1309.9,393.9"/><polyline points="1337.3,371.4 1330.1,371.4 1319.1,386.5"/><polyline points="1337.3,367.4 1330.1,367.4 1309.6,377.6"/><polyline points="1337.3,363.4 1330.1,363.4 1320.7,372.4"/><polyline points="1337.3,359.4 1330.1,359.4 1321.8,366.0"/><polyline points="1337.3,355.4 1330.1,355.4 1314.5,358.3"/><polyline points="1337.3,351.4 1330.1,351.4 1317.3,350.0"/><polyline points="1337.3,347.4 1330.1,347.4 1320.8,341.7"/><polyline points="1337.3,343.4 1330.1,343.4 1320.5,334.8"/><polyline points="1337.3,339.4 1330.1,339.4 1319.7,328.5"/><polyline points="1337.3,335.4 1330.1,335.4 1317.6,321.9"/><polyline points="1337.3,331.4 1330.1,331.4 1307.6,312.6"/><polyline points="1337.3,327.4 1330.1,327.4 1314.6,305.1"/><polyline points="1393.3,379.4 1400.5,379.4 1414.9,400.6"/><polyline points="1393.3,375.4 1400.5,375.4 1421.6,392.4"/><polyline points="1393.3,371.4 1400.5,371.4 1411.6,383.8"/><polyline points="1393.3,367.4 1400.5,367.4 1412.0,379.6"/><polyline points="1393.3,363.4 1400.5,363.4 1417.8,372.1"/><polyline points="1393.3,359.4 1400.5,359.4 1411.1,365.9"/><polyline points="1393.3,355.4 1400.5,355.4 1407.7,356.7"/><polyline points="1393.3,351.4 1400.5,351.4 1409.5,349.4"/><polyline points="1393.3,347.4 1400.5,347.4 1412.0,342.8"/><polyline points="1393.3,343.4 1400.5,343.4 1420.0,335.5"/><polyline points="1393.3,339.4 1400.5,339.4 1416.4,326.7"/><polyline points="1393.3,335.4 1400.5,335.4 1412.6,322.4"/><polyline points="1393.3,331.4 1400.5,331.4 1422.3,312.5"/><polyline points="1393.3,327.4 1400.5,327.4 1415.3,307.8"/><polyline points="1330.1,374.2 1322.5,381.4 1310.5,383.8 1288.1,384.6 1271.3,391.8"/><polyline points="1330.1,365.4 1320.9,366.2 1310.5,368.6 1292.1,369.4 1271.3,372.6"/><polyline points="1330.1,356.6 1319.3,351.0 1310.5,353.4 1290.1,354.2 1271.3,353.4"/><polyline points="1330.1,347.8 1317.7,335.8 1310.5,338.2 1288.1,339.0 1271.3,334.2"/><polyline points="1330.1,339.0 1316.1,320.6 1310.5,323.0 1292.1,323.8 1271.3,315.0"/></g><g fill="none" stroke="#ff0000" stroke-width="1.5" stroke-linejoin="round" stroke-linecap="round"><polyline points="1339.3,381.4 1339.3,388.6 1318.7,403.0"/><polyline points="1343.3,381.4 1343.3,388.6 1325.6,403.0"/><polyline points="1347.3,381.4 1347.3,388.6 1333.2,403.0"/><polyline points="1351.3,381.4 1351.3,388.6 1340.1,399.8"/><polyline points="1355.3,381.4 1355.3,388.6 1348.5,403.0"/><polyline points="1359.3,381.4 1359.3,388.6 1353.7,396.8"/><polyline points="1363.3,381.4 1363.3,388.6 1362.9,395.8"/><polyline points="1367.3,381.4 1367.3,388.6 1367.1,403.0"/><polyline points="1371.3,381.4 1371.3,388.6 1378.0,403.0"/><polyline points="1375.3,381.4 1375.3,388.6 1383.8,403.0"/><polyline points="1379.3,381.4 1379.3,388.6 1388.6,399.4"/><polyline points="1383.3,381.4 1383.3,388.6 1395.9,403.0"/><polyline points="1387.3,381.4 1387.3,388.6 1403.9,401.8"/><polyline points="1391.3,381.4 1391.3,388.6 1412.0,400.8"/><polyline points="1339.3,325.4 1339.3,318.2 1319.9,301.1"/><polyline points="1343.3,325.4 1343.3,318.2 1326.3,301.1"/><polyline points="1347.3,325.4 1347.3,318.2 1333.5,302.3"/><polyline points="1351.3,325.4 1351.3,318.2 1339.2,303.8"/><polyline points="1355.3,325.4 1355.3,318.2 1349.3,299.0"/><polyline points="1359.3,325.4 1359.3,318.2 1355.3,301.1"/><polyline points="1363.3,325.4 1363.3,318.2 1360.6,308.3"/><polyline points="1367.3,325.4 1367.3,318.2 1367.2,308.7"/><polyline points="1371.3,325.4 1371.3,318.2 1375.7,302.0"/><polyline points="1375.3,325.4 1375.3,318.2 1382.8,300.0"/><polyline points="1379.3,325.4 1379.3,318.2 1391.9,299.0"/><polyline points="1383.3,325.4 1383.3,318.2 1396.5,308.3"/><polyline points="1387.3,325.4 1387.3,318.2 1404.8,299.0"/><polyline points="1391.3,325.4 1391.3,318.2 1411.7,299.0"/><polyline points="1337.3,379.4 1330.1,379.4 1317.4,399.7"/><polyline points="1337.3,375.4 1330.1,375.4 1309.9,393.9"/><polyline points="1337.3,371.4 1330.1,371.4 1319.1,386.5"/><polyline points="1337.3,367.4 1330.1,367.4 1309.6,377.6"/><polyline points="1337.3,363.4 1330.1,363.4 1320.7,372.4"/><polyline points="1337.3,359.4 1330.1,359.4 1321.8,366.0"/><polyline points="1337.3,355.4 1330.1,355.4 1314.5,358.3"/><polyline points="1337.3,351.4 1330.1,351.4 1317.3,350.0"/><polyline points="1337.3,347.4 1330.1,347.4 1320.8,341.7"/><polyline points="1337.3,343.4 1330.1,343.4 1320.5,334.8"/><polyline points="1337.3,339.4 1330.1,339.4 1319.7,328.5"/><polyline points="1337.3,335.4 1330.1,335.4 1317.6,321.9"/><polyline points="1337.3,331.4 1330.1,331.4 1307.6,312.6"/><polyline points="1337.3,327.4 1330.1,327.4 1314.6,305.1"/><polyline points="1393.3,379.4 1400.5,379.4 1414.9,400.6"/><polyline points="1393.3,375.4 1400.5,375.4 1421.6,392.4"/><polyline points="1393.3,371.4 1400.5,371.4 1411.6,383.8"/><polyline points="1393.3,367.4 1400.5,367.4 1412.0,379.6"/><polyline points="1393.3,363.4 1400.5,363.4 1417.8,372.1"/><polyline points="1393.3,359.4 1400.5,359.4 1411.1,365.9"/><polyline points="1393.3,355.4 1400.5,355.4 1407.7,356.7"/><polyline points="1393.3,351.4 1400.5,351.4 1409.5,349.4"/><polyline points="1393.3,347.4 1400.5,347.4 1412.0,342.8"/><polyline points="1393.3,343.4 1400.5,343.4 1420.0,335.5"/><polyline points="1393.3,339.4 1400.5,339.4 1416.4,326.7"/><polyline points="1393.3,335.4 1400.5,335.4 1412.6,322.4"/><polyline points="1393.3,331.4 1400.5,331.4 1422.3,312.5"/><polyline points="1393.3,327.4 1400.5,327.4 1415.3,307.8"/><polyline points="1330.1,374.2 1322.5,381.4 1310.5,383.8 1288.1,384.6 1271.3,391.8"/><polyline points="1330.1,365.4 1320.9,366.2 1310.5,368.6 1292.1,369.4 1271.3,372.6"/><polyline points="1330.1,356.6 1319.3,351.0 1310.5,353.4 1290.1,354.2 1271.3,353.4"/><polyline points="1330.1,347.8 1317.7,335.8 1310.5,338.2 1288.1,339.0 1271.3,334.2"/><polyline points="1330.1,339.0 1316.1,320.6 1310.5,323.0 1292.1,323.8 1271.3,315.0"/></g><g fill="none" stroke="#3a2048" stroke-width="4" stroke-linejoin="round" stroke-linecap="round" opacity="0.55"><polyline points="1108.9,323.4 1116.1,323.4 1120.9,330.2 1124.1,331.0"/><polyline points="1108.9,328.6 1116.1,328.6 1118.5,337.0 1121.7,337.8"/><polyline points="1108.9,341.0 1116.1,341.0 1117.3,348.6 1120.5,349.4"/><polyline points="1108.9,345.4 1116.1,345.4 1116.9,355.8 1120.1,356.6"/><polyline points="1108.9,354.2 1116.1,354.2 1124.1,358.6 1127.3,359.4"/><polyline points="1108.9,358.6 1116.1,358.6 1126.9,365.4 1130.1,366.2"/><polyline points="1108.9,363.0 1116.1,363.0 1124.5,371.4 1127.7,372.2"/><polyline points="1108.9,367.4 1116.1,367.4 1122.1,378.6 1125.3,379.4"/><polyline points="1263.3,313.4 1256.1,313.4 1257.3,312.6 1253.3,312.6"/><polyline points="1263.3,318.2 1256.1,318.2 1250.1,314.2 1246.1,314.2"/><polyline points="1263.3,323.0 1256.1,323.0 1242.9,315.0 1238.9,315.0"/><polyline points="1263.3,328.6 1256.1,328.6 1240.9,323.0 1236.9,323.0"/><polyline points="1263.3,339.0 1256.1,339.0 1253.7,337.8 1249.7,337.8"/><polyline points="1263.3,350.2 1256.1,350.2 1256.9,350.2 1252.9,350.2"/><polyline points="1263.3,358.2 1256.1,358.2 1251.3,356.6 1247.3,356.6"/><polyline points="1263.3,365.4 1256.1,365.4 1243.7,372.2 1239.7,372.2"/><polyline points="1263.3,370.2 1256.1,370.2 1245.7,379.0 1241.7,379.0"/><polyline points="1263.3,375.0 1256.1,375.0 1248.1,385.4 1244.1,385.4"/><polyline points="1263.3,379.8 1256.1,379.8 1255.7,385.8 1251.7,385.8"/></g><g fill="none" stroke="#ff0000" stroke-width="1.5" stroke-linejoin="round" stroke-linecap="round"><polyline points="1108.9,323.4 1116.1,323.4 1120.9,330.2 1124.1,331.0"/><polyline points="1108.9,328.6 1116.1,328.6 1118.5,337.0 1121.7,337.8"/><polyline points="1108.9,341.0 1116.1,341.0 1117.3,348.6 1120.5,349.4"/><polyline points="1108.9,345.4 1116.1,345.4 1116.9,355.8 1120.1,356.6"/><polyline points="1108.9,354.2 1116.1,354.2 1124.1,358.6 1127.3,359.4"/><polyline points="1108.9,358.6 1116.1,358.6 1126.9,365.4 1130.1,366.2"/><polyline points="1108.9,363.0 1116.1,363.0 1124.5,371.4 1127.7,372.2"/><polyline points="1108.9,367.4 1116.1,367.4 1122.1,378.6 1125.3,379.4"/><polyline points="1263.3,313.4 1256.1,313.4 1257.3,312.6 1253.3,312.6"/><polyline points="1263.3,318.2 1256.1,318.2 1250.1,314.2 1246.1,314.2"/><polyline points="1263.3,323.0 1256.1,323.0 1242.9,315.0 1238.9,315.0"/><polyline points="1263.3,328.6 1256.1,328.6 1240.9,323.0 1236.9,323.0"/><polyline points="1263.3,339.0 1256.1,339.0 1253.7,337.8 1249.7,337.8"/><polyline points="1263.3,350.2 1256.1,350.2 1256.9,350.2 1252.9,350.2"/><polyline points="1263.3,358.2 1256.1,358.2 1251.3,356.6 1247.3,356.6"/><polyline points="1263.3,365.4 1256.1,365.4 1243.7,372.2 1239.7,372.2"/><polyline points="1263.3,370.2 1256.1,370.2 1245.7,379.0 1241.7,379.0"/><polyline points="1263.3,375.0 1256.1,375.0 1248.1,385.4 1244.1,385.4"/><polyline points="1263.3,379.8 1256.1,379.8 1255.7,385.8 1251.7,385.8"/></g><rect x="1337.9" y="382.5" width="2.1" height="8.0" fill="#ff0000" /><rect x="1337.9" y="318.5" width="2.1" height="8.0" fill="#ff0000" /><rect x="1328.9" y="379.5" width="8.0" height="2.1" fill="#ff0000" /><rect x="1392.9" y="379.5" width="8.0" height="2.1" fill="#ff0000" /><rect x="1341.9" y="382.5" width="2.1" height="8.0" fill="#ff0000" /><rect x="1341.9" y="318.5" width="2.1" height="8.0" fill="#ff0000" /><rect x="1328.9" y="375.5" width="8.0" height="2.1" fill="#ff0000" /><rect x="1392.9" y="375.5" width="8.0" height="2.1" fill="#ff0000" /><rect x="1345.9" y="382.5" width="2.1" height="8.0" fill="#ff0000" /><rect x="1345.9" y="318.5" width="2.1" height="8.0" fill="#ff0000" /><rect x="1328.9" y="371.5" width="8.0" height="2.1" fill="#ff0000" /><rect x="1392.9" y="371.5" width="8.0" height="2.1" fill="#ff0000" /><rect x="1349.9" y="382.5" width="2.1" height="8.0" fill="#ff0000" /><rect x="1349.9" y="318.5" width="2.1" height="8.0" fill="#ff0000" /><rect x="1328.9" y="367.5" width="8.0" height="2.1" fill="#ff0000" /><rect x="1392.9" y="367.5" width="8.0" height="2.1" fill="#ff0000" /><rect x="1353.9" y="382.5" width="2.1" height="8.0" fill="#ff0000" /><rect x="1353.9" y="318.5" width="2.1" height="8.0" fill="#ff0000" /><rect x="1328.9" y="363.5" width="8.0" height="2.1" fill="#ff0000" /><rect x="1392.9" y="363.5" width="8.0" height="2.1" fill="#ff0000" /><rect x="1357.9" y="382.5" width="2.1" height="8.0" fill="#ff0000" /><rect x="1357.9" y="318.5" width="2.1" height="8.0" fill="#ff0000" /><rect x="1328.9" y="359.5" width="8.0" height="2.1" fill="#ff0000" /><rect x="1392.9" y="359.5" width="8.0" height="2.1" fill="#ff0000" /><rect x="1361.9" y="382.5" width="2.1" height="8.0" fill="#ff0000" /><rect x="1361.9" y="318.5" width="2.1" height="8.0" fill="#ff0000" /><rect x="1328.9" y="355.5" width="8.0" height="2.1" fill="#ff0000" /><rect x="1392.9" y="355.5" width="8.0" height="2.1" fill="#ff0000" /><rect x="1365.9" y="382.5" width="2.1" height="8.0" fill="#ff0000" /><rect x="1365.9" y="318.5" width="2.1" height="8.0" fill="#ff0000" /><rect x="1328.9" y="351.5" width="8.0" height="2.1" fill="#ff0000" /><rect x="1392.9" y="351.5" width="8.0" height="2.1" fill="#ff0000" /><rect x="1369.9" y="382.5" width="2.1" height="8.0" fill="#ff0000" /><rect x="1369.9" y="318.5" width="2.1" height="8.0" fill="#ff0000" /><rect x="1328.9" y="347.5" width="8.0" height="2.1" fill="#ff0000" /><rect x="1392.9" y="347.5" width="8.0" height="2.1" fill="#ff0000" /><rect x="1373.9" y="382.5" width="2.1" height="8.0" fill="#ff0000" /><rect x="1373.9" y="318.5" width="2.1" height="8.0" fill="#ff0000" /><rect x="1328.9" y="343.5" width="8.0" height="2.1" fill="#ff0000" /><rect x="1392.9" y="343.5" width="8.0" height="2.1" fill="#ff0000" /><rect x="1377.9" y="382.5" width="2.1" height="8.0" fill="#ff0000" /><rect x="1377.9" y="318.5" width="2.1" height="8.0" fill="#ff0000" /><rect x="1328.9" y="339.5" width="8.0" height="2.1" fill="#ff0000" /><rect x="1392.9" y="339.5" width="8.0" height="2.1" fill="#ff0000" /><rect x="1381.9" y="382.5" width="2.1" height="8.0" fill="#ff0000" /><rect x="1381.9" y="318.5" width="2.1" height="8.0" fill="#ff0000" /><rect x="1328.9" y="335.5" width="8.0" height="2.1" fill="#ff0000" /><rect x="1392.9" y="335.5" width="8.0" height="2.1" fill="#ff0000" /><rect x="1385.9" y="382.5" width="2.1" height="8.0" fill="#ff0000" /><rect x="1385.9" y="318.5" width="2.1" height="8.0" fill="#ff0000" /><rect x="1328.9" y="331.5" width="8.0" height="2.1" fill="#ff0000" /><rect x="1392.9" y="331.5" width="8.0" height="2.1" fill="#ff0000" /><rect x="1389.9" y="382.5" width="2.1" height="8.0" fill="#ff0000" /><rect x="1389.9" y="318.5" width="2.1" height="8.0" fill="#ff0000" /><rect x="1328.9" y="327.5" width="8.0" height="2.1" fill="#ff0000" /><rect x="1392.9" y="327.5" width="8.0" height="2.1" fill="#ff0000" /><rect x="1346.5" y="332.9" width="36.8" height="43.2" fill="#ff0000" /><circle cx="1341.7" cy="340.1" r="3.2" fill="#2a2030" opacity="0.55"/><rect x="1340.1" y="338.5" width="3.2" height="3.2" fill="#ff0000"/><rect x="1340.6" y="339.1" width="2.2" height="2" fill="#8a9a9a"/><circle cx="1341.7" cy="348.9" r="3.2" fill="#2a2030" opacity="0.55"/><rect x="1340.1" y="347.3" width="3.2" height="3.2" fill="#ff0000"/><rect x="1340.6" y="347.9" width="2.2" height="2" fill="#8a9a9a"/><circle cx="1341.7" cy="376.1" r="3.2" fill="#2a2030" opacity="0.55"/><rect x="1340.1" y="374.5" width="3.2" height="3.2" fill="#ff0000"/><rect x="1340.6" y="375.1" width="2.2" height="2" fill="#8a9a9a"/><circle cx="1388.1" cy="339.3" r="3.2" fill="#2a2030" opacity="0.55"/><rect x="1386.5" y="337.7" width="3.2" height="3.2" fill="#ff0000"/><rect x="1387.0" y="338.3" width="2.2" height="2" fill="#8a9a9a"/><circle cx="1388.1" cy="348.1" r="3.2" fill="#2a2030" opacity="0.55"/><rect x="1386.5" y="346.5" width="3.2" height="3.2" fill="#ff0000"/><rect x="1387.0" y="347.1" width="2.2" height="2" fill="#8a9a9a"/><circle cx="1388.1" cy="355.3" r="3.2" fill="#2a2030" opacity="0.55"/><rect x="1386.5" y="353.7" width="3.2" height="3.2" fill="#ff0000"/><rect x="1387.0" y="354.3" width="2.2" height="2" fill="#8a9a9a"/><circle cx="1388.1" cy="362.5" r="3.2" fill="#2a2030" opacity="0.55"/><rect x="1386.5" y="360.9" width="3.2" height="3.2" fill="#ff0000"/><rect x="1387.0" y="361.5" width="2.2" height="2" fill="#8a9a9a"/><circle cx="1144.9" cy="307.0" r="3.2" fill="#2a2030" opacity="0.55"/><rect x="1143.1" y="305.2" width="3.6" height="3.6" fill="#ff0000"/><rect x="1143.8" y="306.0" width="2.2" height="2" fill="#8a9a9a"/><circle cx="1168.1" cy="307.4" r="3.2" fill="#2a2030" opacity="0.55"/><rect x="1166.3" y="305.6" width="3.6" height="3.6" fill="#ff0000"/><rect x="1167.0" y="306.4" width="2.2" height="2" fill="#8a9a9a"/><circle cx="1192.1" cy="307.0" r="3.2" fill="#2a2030" opacity="0.55"/><rect x="1190.3" y="305.2" width="3.6" height="3.6" fill="#ff0000"/><rect x="1191.0" y="306.0" width="2.2" height="2" fill="#8a9a9a"/><circle cx="1217.7" cy="306.6" r="3.2" fill="#2a2030" opacity="0.55"/><rect x="1215.9" y="304.8" width="3.6" height="3.6" fill="#ff0000"/><rect x="1216.6" y="305.6" width="2.2" height="2" fill="#8a9a9a"/><circle cx="1133.7" cy="315.0" r="3.2" fill="#2a2030" opacity="0.55"/><rect x="1131.9" y="313.2" width="3.6" height="3.6" fill="#ff0000"/><rect x="1132.6" y="314.0" width="2.2" height="2" fill="#8a9a9a"/><circle cx="1154.5" cy="315.0" r="3.2" fill="#2a2030" opacity="0.55"/><rect x="1152.7" y="313.2" width="3.6" height="3.6" fill="#ff0000"/><rect x="1153.4" y="314.0" width="2.2" height="2" fill="#8a9a9a"/><circle cx="1181.7" cy="315.8" r="3.2" fill="#2a2030" opacity="0.55"/><rect x="1179.9" y="314.0" width="3.6" height="3.6" fill="#ff0000"/><rect x="1180.6" y="314.8" width="2.2" height="2" fill="#8a9a9a"/><circle cx="1205.7" cy="315.0" r="3.2" fill="#2a2030" opacity="0.55"/><rect x="1203.9" y="313.2" width="3.6" height="3.6" fill="#ff0000"/><rect x="1204.6" y="314.0" width="2.2" height="2" fill="#8a9a9a"/><circle cx="1226.5" cy="315.0" r="3.2" fill="#2a2030" opacity="0.55"/><rect x="1224.7" y="313.2" width="3.6" height="3.6" fill="#ff0000"/><rect x="1225.4" y="314.0" width="2.2" height="2" fill="#8a9a9a"/><circle cx="1136.9" cy="337.4" r="3.2" fill="#2a2030" opacity="0.55"/><rect x="1135.1" y="335.6" width="3.6" height="3.6" fill="#ff0000"/><rect x="1135.8" y="336.4" width="2.2" height="2" fill="#8a9a9a"/><circle cx="1130.1" cy="347.8" r="3.2" fill="#2a2030" opacity="0.55"/><rect x="1128.3" y="346.0" width="3.6" height="3.6" fill="#ff0000"/><rect x="1129.0" y="346.8" width="2.2" height="2" fill="#8a9a9a"/><circle cx="1176.9" cy="350.6" r="3.2" fill="#2a2030" opacity="0.55"/><rect x="1175.1" y="348.8" width="3.6" height="3.6" fill="#ff0000"/><rect x="1175.8" y="349.6" width="2.2" height="2" fill="#8a9a9a"/><circle cx="1202.5" cy="351.8" r="3.2" fill="#2a2030" opacity="0.55"/><rect x="1200.7" y="350.0" width="3.6" height="3.6" fill="#ff0000"/><rect x="1201.4" y="350.8" width="2.2" height="2" fill="#8a9a9a"/><circle cx="1231.3" cy="351.4" r="3.2" fill="#2a2030" opacity="0.55"/><rect x="1229.5" y="349.6" width="3.6" height="3.6" fill="#ff0000"/><rect x="1230.2" y="350.4" width="2.2" height="2" fill="#8a9a9a"/><circle cx="1163.7" cy="374.6" r="3.2" fill="#2a2030" opacity="0.55"/><rect x="1161.9" y="372.8" width="3.6" height="3.6" fill="#ff0000"/><rect x="1162.6" y="373.6" width="2.2" height="2" fill="#8a9a9a"/><circle cx="1188.9" cy="374.6" r="3.2" fill="#2a2030" opacity="0.55"/><rect x="1187.1" y="372.8" width="3.6" height="3.6" fill="#ff0000"/><rect x="1187.8" y="373.6" width="2.2" height="2" fill="#8a9a9a"/><circle cx="1209.7" cy="373.8" r="3.2" fill="#2a2030" opacity="0.55"/><rect x="1207.9" y="372.0" width="3.6" height="3.6" fill="#ff0000"/><rect x="1208.6" y="372.8" width="2.2" height="2" fill="#8a9a9a"/><circle cx="1226.5" cy="374.6" r="3.2" fill="#2a2030" opacity="0.55"/><rect x="1224.7" y="372.8" width="3.6" height="3.6" fill="#ff0000"/><rect x="1225.4" y="373.6" width="2.2" height="2" fill="#8a9a9a"/><circle cx="1140.5" cy="388.6" r="3.2" fill="#2a2030" opacity="0.55"/><rect x="1138.7" y="386.8" width="3.6" height="3.6" fill="#ff0000"/><rect x="1139.4" y="387.6" width="2.2" height="2" fill="#8a9a9a"/><circle cx="1157.7" cy="395.8" r="3.2" fill="#2a2030" opacity="0.55"/><rect x="1155.9" y="394.0" width="3.6" height="3.6" fill="#ff0000"/><rect x="1156.6" y="394.8" width="2.2" height="2" fill="#8a9a9a"/><circle cx="1178.9" cy="395.8" r="3.2" fill="#2a2030" opacity="0.55"/><rect x="1177.1" y="394.0" width="3.6" height="3.6" fill="#ff0000"/><rect x="1177.8" y="394.8" width="2.2" height="2" fill="#8a9a9a"/><circle cx="1202.5" cy="395.8" r="3.2" fill="#2a2030" opacity="0.55"/><rect x="1200.7" y="394.0" width="3.6" height="3.6" fill="#ff0000"/><rect x="1201.4" y="394.8" width="2.2" height="2" fill="#8a9a9a"/><circle cx="1219.3" cy="395.8" r="3.2" fill="#2a2030" opacity="0.55"/><rect x="1217.5" y="394.0" width="3.6" height="3.6" fill="#ff0000"/><rect x="1218.2" y="394.8" width="2.2" height="2" fill="#8a9a9a"/><circle cx="1237.7" cy="396.2" r="3.2" fill="#2a2030" opacity="0.55"/><rect x="1235.9" y="394.4" width="3.6" height="3.6" fill="#ff0000"/><rect x="1236.6" y="395.2" width="2.2" height="2" fill="#8a9a9a"/><circle cx="1111.7" cy="403.4" r="3.2" fill="#2a2030" opacity="0.55"/><rect x="1109.9" y="401.6" width="3.6" height="3.6" fill="#ff0000"/><rect x="1110.6" y="402.4" width="2.2" height="2" fill="#8a9a9a"/><circle cx="1126.5" cy="402.2" r="3.2" fill="#2a2030" opacity="0.55"/><rect x="1124.7" y="400.4" width="3.6" height="3.6" fill="#ff0000"/><rect x="1125.4" y="401.2" width="2.2" height="2" fill="#8a9a9a"/><circle cx="1097.7" cy="364.6" r="3.2" fill="#2a2030" opacity="0.55"/><rect x="1095.9" y="362.8" width="3.6" height="3.6" fill="#ff0000"/><rect x="1096.6" y="363.6" width="2.2" height="2" fill="#8a9a9a"/><circle cx="1097.7" cy="374.6" r="3.2" fill="#2a2030" opacity="0.55"/><rect x="1095.9" y="372.8" width="3.6" height="3.6" fill="#ff0000"/><rect x="1096.6" y="373.6" width="2.2" height="2" fill="#8a9a9a"/><circle cx="1097.7" cy="386.6" r="3.2" fill="#2a2030" opacity="0.55"/><rect x="1095.9" y="384.8" width="3.6" height="3.6" fill="#ff0000"/><rect x="1096.6" y="385.6" width="2.2" height="2" fill="#8a9a9a"/><circle cx="1124.1" cy="331.0" r="3.2" fill="#2a2030" opacity="0.55"/><rect x="1122.3" y="329.2" width="3.6" height="3.6" fill="#ff0000"/><rect x="1123.0" y="330.0" width="2.2" height="2" fill="#8a9a9a"/><circle cx="1121.7" cy="337.8" r="3.2" fill="#2a2030" opacity="0.55"/><rect x="1119.9" y="336.0" width="3.6" height="3.6" fill="#ff0000"/><rect x="1120.6" y="336.8" width="2.2" height="2" fill="#8a9a9a"/><circle cx="1120.5" cy="349.4" r="3.2" fill="#2a2030" opacity="0.55"/><rect x="1118.7" y="347.6" width="3.6" height="3.6" fill="#ff0000"/><rect x="1119.4" y="348.4" width="2.2" height="2" fill="#8a9a9a"/><circle cx="1120.1" cy="356.6" r="3.2" fill="#2a2030" opacity="0.55"/><rect x="1118.3" y="354.8" width="3.6" height="3.6" fill="#ff0000"/><rect x="1119.0" y="355.6" width="2.2" height="2" fill="#8a9a9a"/><circle cx="1127.3" cy="359.4" r="3.2" fill="#2a2030" opacity="0.55"/><rect x="1125.5" y="357.6" width="3.6" height="3.6" fill="#ff0000"/><rect x="1126.2" y="358.4" width="2.2" height="2" fill="#8a9a9a"/><circle cx="1130.1" cy="366.2" r="3.2" fill="#2a2030" opacity="0.55"/><rect x="1128.3" y="364.4" width="3.6" height="3.6" fill="#ff0000"/><rect x="1129.0" y="365.2" width="2.2" height="2" fill="#8a9a9a"/><circle cx="1127.7" cy="372.2" r="3.2" fill="#2a2030" opacity="0.55"/><rect x="1125.9" y="370.4" width="3.6" height="3.6" fill="#ff0000"/><rect x="1126.6" y="371.2" width="2.2" height="2" fill="#8a9a9a"/><circle cx="1125.3" cy="379.4" r="3.2" fill="#2a2030" opacity="0.55"/><rect x="1123.5" y="377.6" width="3.6" height="3.6" fill="#ff0000"/><rect x="1124.2" y="378.4" width="2.2" height="2" fill="#8a9a9a"/><circle cx="1238.9" cy="315.0" r="3.2" fill="#2a2030" opacity="0.55"/><rect x="1237.1" y="313.2" width="3.6" height="3.6" fill="#ff0000"/><rect x="1237.8" y="314.0" width="2.2" height="2" fill="#8a9a9a"/><circle cx="1246.1" cy="314.2" r="3.2" fill="#2a2030" opacity="0.55"/><rect x="1244.3" y="312.4" width="3.6" height="3.6" fill="#ff0000"/><rect x="1245.0" y="313.2" width="2.2" height="2" fill="#8a9a9a"/><circle cx="1253.3" cy="312.6" r="3.2" fill="#2a2030" opacity="0.55"/><rect x="1251.5" y="310.8" width="3.6" height="3.6" fill="#ff0000"/><rect x="1252.2" y="311.6" width="2.2" height="2" fill="#8a9a9a"/><circle cx="1236.9" cy="323.0" r="3.2" fill="#2a2030" opacity="0.55"/><rect x="1235.1" y="321.2" width="3.6" height="3.6" fill="#ff0000"/><rect x="1235.8" y="322.0" width="2.2" height="2" fill="#8a9a9a"/><circle cx="1249.7" cy="337.8" r="3.2" fill="#2a2030" opacity="0.55"/><rect x="1247.9" y="336.0" width="3.6" height="3.6" fill="#ff0000"/><rect x="1248.6" y="336.8" width="2.2" height="2" fill="#8a9a9a"/><circle cx="1252.9" cy="350.2" r="3.2" fill="#2a2030" opacity="0.55"/><rect x="1251.1" y="348.4" width="3.6" height="3.6" fill="#ff0000"/><rect x="1251.8" y="349.2" width="2.2" height="2" fill="#8a9a9a"/><circle cx="1247.3" cy="356.6" r="3.2" fill="#2a2030" opacity="0.55"/><rect x="1245.5" y="354.8" width="3.6" height="3.6" fill="#ff0000"/><rect x="1246.2" y="355.6" width="2.2" height="2" fill="#8a9a9a"/><circle cx="1239.7" cy="372.2" r="3.2" fill="#2a2030" opacity="0.55"/><rect x="1237.9" y="370.4" width="3.6" height="3.6" fill="#ff0000"/><rect x="1238.6" y="371.2" width="2.2" height="2" fill="#8a9a9a"/><circle cx="1241.7" cy="379.0" r="3.2" fill="#2a2030" opacity="0.55"/><rect x="1239.9" y="377.2" width="3.6" height="3.6" fill="#ff0000"/><rect x="1240.6" y="378.0" width="2.2" height="2" fill="#8a9a9a"/><circle cx="1244.1" cy="385.4" r="3.2" fill="#2a2030" opacity="0.55"/><rect x="1242.3" y="383.6" width="3.6" height="3.6" fill="#ff0000"/><rect x="1243.0" y="384.4" width="2.2" height="2" fill="#8a9a9a"/><circle cx="1251.7" cy="385.8" r="3.2" fill="#2a2030" opacity="0.55"/><rect x="1249.9" y="384.0" width="3.6" height="3.6" fill="#ff0000"/><rect x="1250.6" y="384.8" width="2.2" height="2" fill="#8a9a9a"/><circle cx="1263.3" cy="400.6" r="3.2" fill="#2a2030" opacity="0.55"/><rect x="1261.5" y="398.8" width="3.6" height="3.6" fill="#ff0000"/><rect x="1262.2" y="399.6" width="2.2" height="2" fill="#8a9a9a"/><circle cx="1318.7" cy="403.0" r="3.2" fill="#2a2030" opacity="0.55"/><rect x="1316.9" y="401.2" width="3.6" height="3.6" fill="#ff0000"/><rect x="1317.6" y="402.0" width="2.2" height="2" fill="#8a9a9a"/><circle cx="1333.2" cy="403.0" r="3.2" fill="#2a2030" opacity="0.55"/><rect x="1331.4" y="401.2" width="3.6" height="3.6" fill="#ff0000"/><rect x="1332.1" y="402.0" width="2.2" height="2" fill="#8a9a9a"/><circle cx="1348.5" cy="403.0" r="3.2" fill="#2a2030" opacity="0.55"/><rect x="1346.7" y="401.2" width="3.6" height="3.6" fill="#ff0000"/><rect x="1347.4" y="402.0" width="2.2" height="2" fill="#8a9a9a"/><circle cx="1362.9" cy="395.8" r="3.2" fill="#2a2030" opacity="0.55"/><rect x="1361.1" y="394.0" width="3.6" height="3.6" fill="#ff0000"/><rect x="1361.8" y="394.8" width="2.2" height="2" fill="#8a9a9a"/><circle cx="1378.0" cy="403.0" r="3.2" fill="#2a2030" opacity="0.55"/><rect x="1376.2" y="401.2" width="3.6" height="3.6" fill="#ff0000"/><rect x="1376.9" y="402.0" width="2.2" height="2" fill="#8a9a9a"/><circle cx="1388.6" cy="399.4" r="3.2" fill="#2a2030" opacity="0.55"/><rect x="1386.8" y="397.6" width="3.6" height="3.6" fill="#ff0000"/><rect x="1387.5" y="398.4" width="2.2" height="2" fill="#8a9a9a"/><circle cx="1403.9" cy="401.8" r="3.2" fill="#2a2030" opacity="0.55"/><rect x="1402.1" y="400.0" width="3.6" height="3.6" fill="#ff0000"/><rect x="1402.8" y="400.8" width="2.2" height="2" fill="#8a9a9a"/><circle cx="1326.3" cy="301.1" r="3.2" fill="#2a2030" opacity="0.55"/><rect x="1324.5" y="299.3" width="3.6" height="3.6" fill="#ff0000"/><rect x="1325.2" y="300.1" width="2.2" height="2" fill="#8a9a9a"/><circle cx="1339.2" cy="303.8" r="3.2" fill="#2a2030" opacity="0.55"/><rect x="1337.4" y="302.0" width="3.6" height="3.6" fill="#ff0000"/><rect x="1338.1" y="302.8" width="2.2" height="2" fill="#8a9a9a"/><circle cx="1355.3" cy="301.1" r="3.2" fill="#2a2030" opacity="0.55"/><rect x="1353.5" y="299.3" width="3.6" height="3.6" fill="#ff0000"/><rect x="1354.2" y="300.1" width="2.2" height="2" fill="#8a9a9a"/><circle cx="1367.2" cy="308.7" r="3.2" fill="#2a2030" opacity="0.55"/><rect x="1365.4" y="306.9" width="3.6" height="3.6" fill="#ff0000"/><rect x="1366.1" y="307.7" width="2.2" height="2" fill="#8a9a9a"/><circle cx="1382.8" cy="300.0" r="3.2" fill="#2a2030" opacity="0.55"/><rect x="1381.0" y="298.2" width="3.6" height="3.6" fill="#ff0000"/><rect x="1381.7" y="299.0" width="2.2" height="2" fill="#8a9a9a"/><circle cx="1396.5" cy="308.3" r="3.2" fill="#2a2030" opacity="0.55"/><rect x="1394.7" y="306.5" width="3.6" height="3.6" fill="#ff0000"/><rect x="1395.4" y="307.3" width="2.2" height="2" fill="#8a9a9a"/><circle cx="1411.7" cy="299.0" r="3.2" fill="#2a2030" opacity="0.55"/><rect x="1409.9" y="297.2" width="3.6" height="3.6" fill="#ff0000"/><rect x="1410.6" y="298.0" width="2.2" height="2" fill="#8a9a9a"/><circle cx="1317.4" cy="399.7" r="3.2" fill="#2a2030" opacity="0.55"/><rect x="1315.6" y="397.9" width="3.6" height="3.6" fill="#ff0000"/><rect x="1316.3" y="398.7" width="2.2" height="2" fill="#8a9a9a"/><circle cx="1319.1" cy="386.5" r="3.2" fill="#2a2030" opacity="0.55"/><rect x="1317.3" y="384.7" width="3.6" height="3.6" fill="#ff0000"/><rect x="1318.0" y="385.5" width="2.2" height="2" fill="#8a9a9a"/><circle cx="1320.7" cy="372.4" r="3.2" fill="#2a2030" opacity="0.55"/><rect x="1318.9" y="370.6" width="3.6" height="3.6" fill="#ff0000"/><rect x="1319.6" y="371.4" width="2.2" height="2" fill="#8a9a9a"/><circle cx="1314.5" cy="358.3" r="3.2" fill="#2a2030" opacity="0.55"/><rect x="1312.7" y="356.5" width="3.6" height="3.6" fill="#ff0000"/><rect x="1313.4" y="357.3" width="2.2" height="2" fill="#8a9a9a"/><circle cx="1320.8" cy="341.7" r="3.2" fill="#2a2030" opacity="0.55"/><rect x="1319.0" y="339.9" width="3.6" height="3.6" fill="#ff0000"/><rect x="1319.7" y="340.7" width="2.2" height="2" fill="#8a9a9a"/><circle cx="1319.7" cy="328.5" r="3.2" fill="#2a2030" opacity="0.55"/><rect x="1317.9" y="326.7" width="3.6" height="3.6" fill="#ff0000"/><rect x="1318.6" y="327.5" width="2.2" height="2" fill="#8a9a9a"/><circle cx="1307.6" cy="312.6" r="3.2" fill="#2a2030" opacity="0.55"/><rect x="1305.8" y="310.8" width="3.6" height="3.6" fill="#ff0000"/><rect x="1306.5" y="311.6" width="2.2" height="2" fill="#8a9a9a"/><circle cx="1421.6" cy="392.4" r="3.2" fill="#2a2030" opacity="0.55"/><rect x="1419.8" y="390.6" width="3.6" height="3.6" fill="#ff0000"/><rect x="1420.5" y="391.4" width="2.2" height="2" fill="#8a9a9a"/><circle cx="1412.0" cy="379.6" r="3.2" fill="#2a2030" opacity="0.55"/><rect x="1410.2" y="377.8" width="3.6" height="3.6" fill="#ff0000"/><rect x="1410.9" y="378.6" width="2.2" height="2" fill="#8a9a9a"/><circle cx="1411.1" cy="365.9" r="3.2" fill="#2a2030" opacity="0.55"/><rect x="1409.3" y="364.1" width="3.6" height="3.6" fill="#ff0000"/><rect x="1410.0" y="364.9" width="2.2" height="2" fill="#8a9a9a"/><circle cx="1409.5" cy="349.4" r="3.2" fill="#2a2030" opacity="0.55"/><rect x="1407.7" y="347.6" width="3.6" height="3.6" fill="#ff0000"/><rect x="1408.4" y="348.4" width="2.2" height="2" fill="#8a9a9a"/><circle cx="1420.0" cy="335.5" r="3.2" fill="#2a2030" opacity="0.55"/><rect x="1418.2" y="333.7" width="3.6" height="3.6" fill="#ff0000"/><rect x="1418.9" y="334.5" width="2.2" height="2" fill="#8a9a9a"/><circle cx="1412.6" cy="322.4" r="3.2" fill="#2a2030" opacity="0.55"/><rect x="1410.8" y="320.6" width="3.6" height="3.6" fill="#ff0000"/><rect x="1411.5" y="321.4" width="2.2" height="2" fill="#8a9a9a"/><circle cx="1415.3" cy="307.8" r="3.2" fill="#2a2030" opacity="0.55"/><rect x="1413.5" y="306.0" width="3.6" height="3.6" fill="#ff0000"/><rect x="1414.2" y="306.8" width="2.2" height="2" fill="#8a9a9a"/><rect x="1418.2" y="317.8" width="13.5" height="10.4" fill="#ff0000" /><rect x="1418.2" y="338.6" width="13.5" height="10.4" fill="#ff0000" /><rect x="1418.2" y="354.3" width="13.5" height="10.4" fill="#ff0000" /><rect x="1418.2" y="373.8" width="13.5" height="10.4" fill="#ff0000" /><rect x="1419.7" y="295.8" width="9.2" height="10.4" fill="#ff0000" /><rect x="1432.5" y="295.8" width="9.6" height="10.4" fill="#ff0000" /><path d="M1424.1 306.2V319.0" stroke="#ff0000" stroke-width="2.4"/><circle cx="1443.8" cy="333.1" r="10.6" fill="#ff0000"/><circle cx="1443.8" cy="333.1" r="7.4" fill="#8f8f8f"/><circle cx="1443.8" cy="368.7" r="10.6" fill="#ff0000"/><circle cx="1443.8" cy="368.7" r="7.4" fill="#8f8f8f"/><path d="M1443.8 343.0V359.0" stroke="#ff0000" stroke-width="3.4"/><polyline points="1453.7,377.4 1453.7,393.4 1448.1,397.4 1442.5,397.4" fill="none" stroke="#ff0000" stroke-width="3"/><rect x="1437.7" y="394.2" width="7.2" height="8.8" fill="#ff0000" /><rect x="1426.5" y="395.8" width="5.6" height="6.4" fill="#ff0000" /><polyline points="1290.5,303.8 1298.5,294.6 1417.7,294.6 1424.1,299.8" fill="none" stroke="#ff0000" stroke-width="2.6" stroke-linejoin="round"/><rect x="1272.1" y="301.4" width="5.6" height="8.8" fill="#ff0000" /><rect x="1279.3" y="301.4" width="4.8" height="8.8" fill="#ff0000" /><rect x="1286.5" y="301.4" width="4.8" height="8.8" fill="#ff0000" /><rect x="1297.7" y="302.2" width="13.6" height="12.8" fill="#ff0000" /><rect x="1297.7" y="323.8" width="13.6" height="15.2" fill="#ff0000" /><rect x="1287.3" y="329.4" width="6.4" height="23.2" fill="#ff0000" /><rect x="1272.9" y="324.6" width="5.6" height="9.6" fill="#ff0000" /><rect x="1272.9" y="347.0" width="4.8" height="4.8" fill="#ff0000" /><rect x="1320.1" y="304.6" width="4.8" height="5.6" fill="#ff0000" /><rect x="1327.3" y="304.6" width="4.8" height="5.6" fill="#ff0000" /><rect x="1287.3" y="363.8" width="5.6" height="12.8" fill="#ff0000" /><rect x="1273.7" y="396.6" width="6.4" height="7.2" fill="#ff0000" /><rect x="1285.7" y="396.6" width="6.4" height="7.2" fill="#ff0000" /><rect x="1375.3" y="397.4" width="4.8" height="5.6" fill="#ff0000" /><rect x="1382.5" y="397.4" width="4.8" height="5.6" fill="#ff0000" /><rect x="1396.9" y="397.4" width="4.8" height="6.4" fill="#ff0000" /><rect x="1404.9" y="397.4" width="4.8" height="6.4" fill="#ff0000" /><rect x="1416.9" y="392.6" width="4.8" height="10.4" fill="#ff0000" /><polyline points="1312.1,336.6 1299.3,344.6 1284.9,344.6 1280.9,350.2 1280.9,379.0 1285.7,390.2" fill="none" stroke="#ff0000" stroke-width="1.6"/><polyline points="1323.3,377.4 1310.5,386.2 1296.1,386.2 1290.5,381.4" fill="none" stroke="#ff0000" stroke-width="2"/><polyline points="1353.7,403.0 1358.5,406.2 1392.1,406.2 1397.7,401.4 1413.7,401.4 1419.3,395.0" fill="none" stroke="#ff0000" stroke-width="2"/><polygon points="1099.3,411.0 1452.1,411.0 1460.1,403.0 1460.1,299.0 1452.1,291.0 1099.3,291.0 1091.3,299.0 1091.3,403.0" fill="none" stroke="#cfcfcf" stroke-width="1.6"/><rect x="1462.2" y="303" width="120" height="96" fill="none" stroke="#7b7322" stroke-width="1.6"/><path d="M1051 411.3H1130M1091.3 411V451" stroke="#b03030" stroke-width="1" fill="none"/><path d="M1083 296.5H1090" stroke="#c0208a" stroke-width="1.6"/></svg><div class="b" style="left:1919px;top:0px;width:1px;height:1160px;background:#bccaca;"></div><svg class="b" style="left:1620.0px;top:102.5px;" width="18" height="18" viewBox="0 0 16 16"><g transform="translate(8 8) scale(0.92) translate(-8 -8)"><g  fill="none" stroke="#9a6b12" stroke-width="1.17" stroke-linecap="round" stroke-linejoin="round"><path d="M13.4 6.4V5.4Q13.4 4.5 12.5 4.5H8.2L7.2 3Q6.9 2.6 6.4 2.6H3.1Q2.2 2.6 2.2 3.5V11.6Q2.2 12.5 3.1 12.5H6" fill="#fff"/><path d="M2.2 5.9H6.8"/></g><g  fill="none" stroke="#1a7a1a" stroke-width="1.27" stroke-linecap="round" stroke-linejoin="round"><rect x="7.6" y="7.8" width="6.8" height="6.6" rx="1" fill="#e8f4e8"/></g><g  fill="none" stroke="#145a14" stroke-width="0.85" stroke-linecap="round" stroke-linejoin="round"><rect x="9.4" y="9.6" width="2" height="1.8"/><path d="M12.6 9.4V11.6M9.2 12.8H12.6"/></g></g></svg><div class="t" style="left:1643.4px;top:103.0px;font-size:13px;line-height:17px;font-weight:400;color:#3a3f42;letter-spacing:-0.036px;">Менеджер проекта</div><svg class="b" style="left:1865.0px;top:104.5px;" width="14" height="14" viewBox="0 0 16 16"><g  fill="none" stroke="#3f4749" stroke-width="0.81" stroke-linecap="round" stroke-linejoin="round"><path d="M9.6 2.4 13.6 6.4 12.6 7 10.6 6.8 8.4 9 8.6 11.6 7.6 12.4 3.6 8.4 4.4 7.4 7 7.6 9.2 5.4 9 3.4Z" fill="#3f4749"/><path d="M5.6 10.4 2.6 13.4"/></g><path d="M2.6 2.6 13.4 13.4" stroke="#fff" stroke-width="2.6"/><path d="M2.6 2.6 13.4 13.4" stroke="#3f4749" stroke-width="1.1" stroke-linecap="round"/></svg><svg class="b" style="left:1893.5px;top:104.5px;" width="15" height="15" viewBox="0 0 16 16"><g  fill="none" stroke="#3a3f42" stroke-width="1.08" stroke-linecap="round" stroke-linejoin="round"><path d="M3.5 3.5 12.5 12.5M12.5 3.5 3.5 12.5"/></g></svg><svg class="b" style="left:1631.0px;top:140.0px;" width="18" height="18" viewBox="0 0 16 16"><g  fill="none" stroke="#4355c9" stroke-width="0.99" stroke-linecap="round" stroke-linejoin="round"><path d="M3 3Q3 1.8 4.2 1.8H8.6L12 5.2V8M5.6 13.8H4.2Q3 13.8 3 12.6V3" fill="#dfe4fb"/><path d="M8.6 1.8V4.2Q8.6 5.2 9.6 5.2H12" fill="#fff"/></g><g  fill="none" stroke="#3f4749" stroke-width="0.9" stroke-linecap="round" stroke-linejoin="round"><path d="M6.6 11.4Q8.4 9.2 10.4 9.2Q12.4 9.2 14.2 11.4Q12.4 13.6 10.4 13.6Q8.4 13.6 6.6 11.4Z" fill="#fff"/><circle cx="10.4" cy="11.4" r="1.2" fill="#3f4749"/></g></svg><svg class="b" style="left:1659.0px;top:140.0px;" width="18" height="18" viewBox="0 0 16 16"><g  fill="none" stroke="#3f4749" stroke-width="1.08" stroke-linecap="round" stroke-linejoin="round"><path d="M13.2 7.2A5.3 5.3 0 0 0 3.6 5M2.8 8.8A5.3 5.3 0 0 0 12.4 11"/><path d="M3.4 2.4V5.2H6.2M12.6 13.6V10.8H9.8"/></g></svg><svg class="b" style="left:1687.0px;top:140.0px;" width="18" height="18" viewBox="0 0 16 16"><g  fill="none" stroke="#4355c9" stroke-width="0.99" stroke-linecap="round" stroke-linejoin="round"><path d="M5.2 4.2V3.4Q5.2 2.4 6.2 2.4H12.6Q13.6 2.4 13.6 3.4V9.8Q13.6 10.8 12.6 10.8H11.8"/><rect x="2.4" y="5.2" width="8.4" height="8.4" rx="1" fill="#dfe4fb"/><path d="M4.8 9.4H8.4"/></g></svg><svg class="b" style="left:1724.0px;top:140.0px;" width="18" height="18" viewBox="0 0 16 16"><g  fill="none" stroke="#3f4749" stroke-width="0.99" stroke-linecap="round" stroke-linejoin="round"><path d="M10.5 5.5V3.4Q10.5 2.5 9.6 2.5H5.4Q4.5 2.5 4.5 3.4V10.6Q4.5 11.5 5.4 11.5H6" fill="#d9dede"/><path d="M2.5 4.5H4.5M2.5 7H4.5M2.5 9.5H4.5M10.5 4.5H12.2"/></g><g  fill="none" stroke="#4355c9" stroke-width="1.08" stroke-linecap="round" stroke-linejoin="round"><circle cx="9.7" cy="9.6" r="2.7" fill="#fff"/><path d="M11.7 11.7 14.3 14.4"/></g></svg><div class="b" style="left:1714px;top:140px;width:1px;height:18px;background:#c6d2d2;"></div><svg class="b" style="left:1631.0px;top:169.5px;" width="18" height="18" viewBox="0 0 16 16"><g  fill="none" stroke="#9a6b12" stroke-width="0.99" stroke-linecap="round" stroke-linejoin="round"><path d="M8 1.8 9.9 5.9 14.4 6.4 11.1 9.5 12 14 8 11.8 4 14 4.9 9.5 1.6 6.4 6.1 5.9Z" fill="#f6e7c2"/></g></svg><div class="b" style="left:1658px;top:170px;width:1px;height:18px;background:#c6d2d2;"></div><div class="b" style="left:1779px;top:170px;width:1px;height:18px;background:#c6d2d2;"></div><div class="b" style="left:1664px;top:166px;width:110px;height:26px;background:#b3d5d2;border-radius:6px;"></div><svg class="b" style="left:1670.0px;top:170.0px;" width="18" height="18" viewBox="0 0 16 16"><g  fill="none" stroke="#4355c9" stroke-width="0.99" stroke-linecap="round" stroke-linejoin="round"><rect x="5.2" y="2" width="5.6" height="12" rx="1.2" fill="#dfe4fb"/><path d="M2.6 4.6H5.2M2.6 8H5.2M2.6 11.4H5.2M10.8 4.6H13.4M10.8 8H13.4M10.8 11.4H13.4"/></g></svg><div class="t" style="left:1693.0px;top:170.0px;font-size:13px;line-height:17px;font-weight:400;color:#3a3f42;letter-spacing:-0.189px;">Компоненты</div><svg class="b" style="left:1791.0px;top:170.0px;" width="18" height="18" viewBox="0 0 16 16"><g  fill="none" stroke="#4355c9" stroke-width="0.99" stroke-linecap="round" stroke-linejoin="round"><circle cx="3.8" cy="3.6" r="1.7"/><circle cx="12.2" cy="12.2" r="1.7"/><path d="M3.8 5.3V10.8Q3.8 12.2 5.2 12.2H10.5"/></g></svg><div class="t" style="left:1814.0px;top:170.0px;font-size:13px;line-height:17px;font-weight:400;color:#3a3f42;letter-spacing:-0.287px;">Цепи</div><svg class="b" style="left:1888.75px;top:171.75px;" width="14.5" height="14.5" viewBox="0 0 16 16"><circle cx="4" cy="8" r="1.3" fill="#2f3437"/><circle cx="8" cy="8" r="1.3" fill="#2f3437"/><circle cx="12" cy="8" r="1.3" fill="#2f3437"/></svg><div class="b" style="left:1621px;top:196px;width:294px;height:1px;background:#c6d2d2;"></div><div class="b" style="left:1626px;top:202.2px;width:284px;height:27.4px;background:#eceeed;border:1px solid #cfdada;box-sizing:border-box;border-radius:6px;"></div><svg class="b" style="left:1633.0px;top:208.89999999999998px;" width="14" height="14" viewBox="0 0 16 16"><g  fill="none" stroke="#b5bebe" stroke-width="0.99" stroke-linecap="round" stroke-linejoin="round"><circle cx="6.8" cy="6.8" r="4"/><path d="M9.8 9.8 13.4 13.4"/></g></svg><div class="t" style="left:1662.0px;top:207.1px;font-size:13px;line-height:17px;font-weight:400;color:#64696c;letter-spacing:-0.004px;">Поиск</div><div class="b" style="left:1626px;top:237px;width:272px;height:28px;background:#b3d5d2;border-radius:6px;"></div><svg class="b" style="left:1628.0px;top:241.5px;" width="18" height="18" viewBox="0 0 16 16"><g  fill="none" stroke="#5a6264" stroke-width="1.08" stroke-linecap="round" stroke-linejoin="round"><path d="M4 6 8 10 12 6"/></g></svg><svg class="b" style="left:1650px;top:241.5px;" width="18" height="18" viewBox="0 0 16 16"><g transform="translate(8 8) scale(0.92) translate(-8 -8)"><g  fill="none" stroke="#4355c9" stroke-width="1.17" stroke-linecap="round" stroke-linejoin="round"><path d="M6.3 3.4H3.4Q2.3 3.4 2.3 4.5V11.2Q2.3 12.3 3.4 12.3H4.2M9.3 3.4H12.2Q13.3 3.4 13.3 4.5V5M9.3 12.3H12.2Q13.3 12.3 13.3 11.2V10.6"/><path d="M6.3 1.4V7.4M9.3 2.4V5.4M9.3 9.2V14.6"/><rect x="12.2" y="5.4" width="2.2" height="5" rx="0.6"/><path d="M4.8 9.4V14.2L8.8 11.8Z"/></g></g></svg><div class="t" style="left:1678.0px;top:242.0px;font-size:13px;line-height:17px;font-weight:400;color:#2f3437;letter-spacing:-0.295px;">Схема (Плата USB накопителя)</div><svg class="b" style="left:1650.0px;top:271.5px;" width="18" height="18" viewBox="0 0 16 16"><g  fill="none" stroke="#5a6264" stroke-width="1.08" stroke-linecap="round" stroke-linejoin="round"><path d="M6 4 10 8 6 12"/></g></svg><svg class="b" style="left:1672px;top:271.5px;" width="18" height="18" viewBox="0 0 16 16"><g transform="translate(8 8) scale(0.92) translate(-8 -8)"><g  fill="none" stroke="#4355c9" stroke-width="1.17" stroke-linecap="round" stroke-linejoin="round"><path d="M3 3Q3 1.8 4.2 1.8H9.4L13 5.4V13Q13 14.2 11.8 14.2H4.2Q3 14.2 3 13Z" fill="#fff"/><path d="M9.4 1.8V4.4Q9.4 5.4 10.4 5.4H13"/></g><g  fill="none" stroke="#9a6b12" stroke-width="1.06" stroke-linecap="round" stroke-linejoin="round"><path d="M7.6 4.4H5.2V12H10.8V7.6M8 12V10.4H10.8"/></g></g></svg><div class="t" style="left:1700.0px;top:272.0px;font-size:13px;line-height:17px;font-weight:400;color:#2f3437;letter-spacing:-0.265px;">Лист 1</div><svg class="b" style="left:1650.0px;top:301.5px;" width="18" height="18" viewBox="0 0 16 16"><g  fill="none" stroke="#5a6264" stroke-width="1.08" stroke-linecap="round" stroke-linejoin="round"><path d="M6 4 10 8 6 12"/></g></svg><svg class="b" style="left:1672px;top:301.5px;" width="18" height="18" viewBox="0 0 16 16"><g transform="translate(8 8) scale(0.92) translate(-8 -8)"><g  fill="none" stroke="#9a6b12" stroke-width="1.27" stroke-linecap="round" stroke-linejoin="round"><path d="M1.6 4V13Q1.6 13.9 2.5 13.9H13.5Q14.4 13.9 14.4 13V5.6Q14.4 4.7 13.5 4.7H8.2L7 3.1Q6.7 2.7 6.2 2.7H2.5Q1.6 2.7 1.6 3.6Z" fill="#f4e4bf"/><path d="M1.6 6.6H14.4"/></g></g></svg><div class="t" style="left:1700.0px;top:302.0px;font-size:13px;line-height:17px;font-weight:400;color:#2f3437;letter-spacing:-0.125px;">Неиспользуемые секции (1)</div><svg class="b" style="left:1628.0px;top:331.5px;" width="18" height="18" viewBox="0 0 16 16"><g  fill="none" stroke="#5a6264" stroke-width="1.08" stroke-linecap="round" stroke-linejoin="round"><path d="M4 6 8 10 12 6"/></g></svg><svg class="b" style="left:1650px;top:331.5px;" width="18" height="18" viewBox="0 0 16 16"><g transform="translate(8 8) scale(0.92) translate(-8 -8)"><g  fill="none" stroke="#1a7a1a" stroke-width="1.27" stroke-linecap="round" stroke-linejoin="round"><path d="M2 3.5Q2 2.3 3.2 2.3H12.8Q14 2.3 14 3.5V12.3Q14 13.5 12.8 13.5H11.2L10.4 12.5H5.6L4.8 13.5H3.2Q2 13.5 2 12.3Z" fill="#e8f4e8"/></g><g  fill="none" stroke="#3f4749" stroke-width="1.06" stroke-linecap="round" stroke-linejoin="round"><rect x="4.6" y="4.6" width="3.8" height="3.4"/><path d="M10.2 4.4V8.2M12 4.4V8.2M4.4 10H9.4M4.4 11.6H9.4"/></g><circle cx="11" cy="10" r="0.6" fill="#3f4749"/><circle cx="12.4" cy="11.4" r="0.6" fill="#3f4749"/></g></svg><div class="t" style="left:1678.0px;top:332.0px;font-size:13px;line-height:17px;font-weight:400;color:#2f3437;letter-spacing:-0.323px;">Плата (Плата USB накопителя)</div><svg class="b" style="left:1672px;top:361.5px;" width="18" height="18" viewBox="0 0 16 16"><g transform="translate(8 8) scale(0.92) translate(-8 -8)"><g  fill="none" stroke="#9a6b12" stroke-width="1.27" stroke-linecap="round" stroke-linejoin="round"><path d="M1.6 4V13Q1.6 13.9 2.5 13.9H13.5Q14.4 13.9 14.4 13V5.6Q14.4 4.7 13.5 4.7H8.2L7 3.1Q6.7 2.7 6.2 2.7H2.5Q1.6 2.7 1.6 3.6Z" fill="#f4e4bf"/><path d="M1.6 6.6H14.4"/></g></g></svg><div class="t" style="left:1700.0px;top:362.0px;font-size:13px;line-height:17px;font-weight:400;color:#2f3437;letter-spacing:-0.171px;">Неразмещённые (0)</div><svg class="b" style="left:1650.0px;top:391.5px;" width="18" height="18" viewBox="0 0 16 16"><g  fill="none" stroke="#5a6264" stroke-width="1.08" stroke-linecap="round" stroke-linejoin="round"><path d="M6 4 10 8 6 12"/></g></svg><svg class="b" style="left:1672px;top:391.5px;" width="18" height="18" viewBox="0 0 16 16"><g transform="translate(8 8) scale(0.92) translate(-8 -8)"><g  fill="none" stroke="#9a6b12" stroke-width="1.27" stroke-linecap="round" stroke-linejoin="round"><path d="M1.6 4V13Q1.6 13.9 2.5 13.9H13.5Q14.4 13.9 14.4 13V5.6Q14.4 4.7 13.5 4.7H8.2L7 3.1Q6.7 2.7 6.2 2.7H2.5Q1.6 2.7 1.6 3.6Z" fill="#f4e4bf"/><path d="M1.6 6.6H14.4"/></g></g></svg><div class="t" style="left:1700.0px;top:392.0px;font-size:13px;line-height:17px;font-weight:400;color:#2f3437;letter-spacing:-0.190px;">Размещённые (23)</div><svg class="b" style="left:1899px;top:237px;" width="10" height="10" viewBox="0 0 10 10"><path d="M1 6.5 5 2 9 6.5Z" fill="#3a3f42"/></svg><svg class="b" style="left:1899px;top:403px;" width="10" height="10" viewBox="0 0 10 10"><path d="M1 2.5 5 7 9 2.5Z" fill="#3a3f42"/></svg><div class="b" style="left:1901px;top:248px;width:6px;height:101px;background:#bccaca;border-radius:3px;"></div><div class="b" style="left:1622px;top:416px;width:293px;height:12px;background:#eceeed;"></div><svg class="b" style="left:1759.0px;top:412.0px;" width="18" height="18" viewBox="0 0 16 16"><g  fill="none" stroke="#5a6264" stroke-width="1.08" stroke-linecap="round" stroke-linejoin="round"><path d="M4 6 8 10 12 6"/></g></svg><div class="b" style="left:1622px;top:428px;width:293px;height:27px;background:#b9c9c9;"></div><div class="t" style="left:1699.5px;top:433.0px;font-size:13px;line-height:17px;font-weight:700;color:#2f3437;letter-spacing:-0.537px;">Плата USB накопителя</div><div class="b" style="left:1622px;top:455px;width:256px;height:27px;background:#eceeed;"></div><div class="t" style="left:1630.0px;top:460.0px;font-size:13px;line-height:17px;font-weight:400;color:#3a3f42;letter-spacing:-0.055px;">Количество компонентов</div><div class="b" style="left:1879px;top:455px;width:36px;height:27px;background:#d6efef;"></div><div class="t" style="left:1889.3px;top:460.0px;font-size:13px;line-height:17px;font-weight:700;color:#26292b;">23</div><div class="b" style="left:1878px;top:455px;width:1px;height:40px;background:#dfe5e5;"></div><div class="b" style="left:1909px;top:513px;width:6px;height:1px;background:#dfe5e5;"></div><div class="b" style="left:1909px;top:542px;width:6px;height:1px;background:#dfe5e5;"></div><div class="b" style="left:1909px;top:665px;width:6px;height:1px;background:#dfe5e5;"></div><div class="b" style="left:1910px;top:555px;width:8px;height:37px;background:#d5dcdc;"></div><div class="b" style="left:0px;top:1090px;width:1920px;height:1px;background:#bccaca;"></div><div class="b" style="left:0px;top:1119px;width:1920px;height:1px;background:#bccaca;"></div><svg class="b" style="left:20.0px;top:1095.5px;" width="18" height="18" viewBox="0 0 16 16"><g  fill="none" stroke="#4355c9" stroke-width="0.99" stroke-linecap="round" stroke-linejoin="round"><rect x="2" y="2.6" width="12" height="10.4" rx="1.4" fill="#fff"/><path d="M2 5.4H14"/></g><path d="M11.6 7.6 8.6 11.6H10.8L10 15 13.6 10.4H11.2L12.4 7.6Z" fill="#8a5a0a" stroke="#fff" stroke-width="0.5"/></svg><div class="t" style="left:43.3px;top:1096.0px;font-size:13px;line-height:17px;font-weight:400;color:#3a3f42;letter-spacing:-0.254px;">Журналы</div><svg class="b" style="left:122.0px;top:1095.5px;" width="18" height="18" viewBox="0 0 16 16"><g  fill="none" stroke="#4355c9" stroke-width="0.99" stroke-linecap="round" stroke-linejoin="round"><path d="M12 13H3.4Q2 13 2 11.6V4Q2 2.6 3.4 2.6H12.6Q14 2.6 14 4V6M2 5.4H14"/></g><path d="M14 8V11.4" stroke="#d43a3a" stroke-width="1.4" stroke-linecap="round"/><circle cx="14" cy="13.6" r="0.8" fill="#d43a3a"/></svg><div class="t" style="left:145.0px;top:1096.0px;font-size:13px;line-height:17px;font-weight:400;color:#3a3f42;letter-spacing:-0.088px;">Список ошибок</div><div class="t" style="left:10.0px;top:1131.0px;font-size:13px;line-height:17px;font-weight:400;color:#3a3f42;letter-spacing:-0.109px;">Сетка:</div><div class="b" style="left:58px;top:1127px;width:100px;height:26px;background:#eceeed;border-radius:6px;"></div><div class="t" style="left:74.0px;top:1132.0px;font-size:13px;line-height:17px;font-weight:400;color:#3a3f42;letter-spacing:-0.209px;">0,5 мм</div><svg class="b" style="left:135.0px;top:1131.0px;" width="18" height="18" viewBox="0 0 16 16"><g  fill="none" stroke="#3a3f42" stroke-width="1.12" stroke-linecap="round" stroke-linejoin="round"><path d="M5.3 6.8 8 9.4 10.7 6.8"/></g></svg><div class="t" style="left:167.3px;top:1131.0px;font-size:13px;line-height:17px;font-weight:400;color:#3a3f42;letter-spacing:-0.553px;">Слой</div><div class="b" style="left:210px;top:1127px;width:200px;height:26px;background:#eceeed;border-radius:6px;"></div><div class="b" style="left:278px;top:1132px;width:16px;height:16px;background:#ff0000;border-radius:2px;"></div><div class="t" style="left:302.3px;top:1131.0px;font-size:13px;line-height:17px;font-weight:400;color:#6a7072;">L1</div><svg class="b" style="left:387.0px;top:1131.0px;" width="18" height="18" viewBox="0 0 16 16"><g  fill="none" stroke="#3a3f42" stroke-width="1.12" stroke-linecap="round" stroke-linejoin="round"><path d="M5.3 6.8 8 9.4 10.7 6.8"/></g></svg><div class="t" style="left:1556.0px;top:1131.0px;font-size:13px;line-height:17px;font-weight:400;color:#3a3f42;">X</div><div class="b" style="left:1574px;top:1127px;width:58px;height:26px;background:#fff;border:1px solid #bccaca;box-sizing:border-box;border-radius:5px;"></div><div class="t" style="left:1581.7px;top:1131.0px;font-size:13px;line-height:17px;font-weight:400;color:#3a3f42;letter-spacing:-0.325px;">22,5</div><div class="t" style="left:1641.7px;top:1131.0px;font-size:13px;line-height:17px;font-weight:400;color:#3a3f42;">Y</div><div class="b" style="left:1659px;top:1127px;width:58px;height:26px;background:#fff;border:1px solid #bccaca;box-sizing:border-box;border-radius:5px;"></div><div class="t" style="left:1666.7px;top:1131.0px;font-size:13px;line-height:17px;font-weight:400;color:#3a3f42;letter-spacing:-0.396px;">-10</div><div class="t" style="left:1726.7px;top:1131.0px;font-size:13px;line-height:17px;font-weight:400;color:#3a3f42;letter-spacing:-0.474px;">Масштаб</div><div class="b" style="left:1789px;top:1127px;width:120px;height:26px;background:#eceeed;border-radius:6px;"></div><svg class="b" style="left:1794.5px;top:1130.5px;" width="18" height="18" viewBox="0 0 16 16"><g  fill="none" stroke="#4355c9" stroke-width="1.08" stroke-linecap="round" stroke-linejoin="round"><path d="M2 2 6 6M14 2 10 6M2 14 6 10M14 14 10 10M3.4 6.2H6.2V3.4M12.6 6.2H9.8V3.4M3.4 9.8H6.2V12.6M12.6 9.8H9.8V12.6"/></g></svg><div class="t" style="left:1825.7px;top:1132.0px;font-size:13px;line-height:17px;font-weight:400;color:#3a3f42;letter-spacing:-1.673px;">21%</div><svg class="b" style="left:1886.0px;top:1131.0px;" width="18" height="18" viewBox="0 0 16 16"><g  fill="none" stroke="#3a3f42" stroke-width="1.12" stroke-linecap="round" stroke-linejoin="round"><path d="M5.3 6.8 8 9.4 10.7 6.8"/></g></svg><div class="b" style="left:972px;top:490px;width:936px;height:598px;background:#fff;box-shadow:0 2px 10px 1px rgba(60,80,80,.45);overflow:hidden"><div class="b" style="left:0px;top:0px;width:936px;height:37px;background:#f0f2f1;"></div><div class="b" style="left:0px;top:36.5px;width:936px;height:1px;background:#bccaca;"></div><svg class="b" style="left:881.5px;top:10.0px;" width="18" height="18" viewBox="0 0 16 16"><g  fill="none" stroke="#3a3f42" stroke-width="1.08" stroke-linecap="round" stroke-linejoin="round"><rect x="3.5" y="3.5" width="9" height="9" rx="1"/></g></svg><svg class="b" style="left:910.0px;top:10.0px;" width="18" height="18" viewBox="0 0 16 16"><g  fill="none" stroke="#3a3f42" stroke-width="1.08" stroke-linecap="round" stroke-linejoin="round"><path d="M3.5 3.5 12.5 12.5M12.5 3.5 3.5 12.5"/></g></svg><div class="b" style="left:0px;top:37.5px;width:936px;height:29px;background:#eceeed;"></div><div class="b" style="left:0px;top:66px;width:936px;height:1px;background:#bccaca;"></div><div class="b" style="left:9px;top:37.5px;width:197px;height:29.5px;background:#fff;border:1px solid #bccaca;box-sizing:border-box;border-top:none;border-bottom:none;"></div><svg class="b" style="left:15.5px;top:43.0px;" width="18" height="18" viewBox="0 0 16 16"><g  fill="none" stroke="#4355c9" stroke-width="0.99" stroke-linecap="round" stroke-linejoin="round"><path d="M6 13.6H4.2Q3 13.6 3 12.4V3Q3 1.8 4.2 1.8H8.6L12 5.2V7.4" fill="#dfe4fb"/><path d="M8.6 1.8V4.2Q8.6 5.2 9.6 5.2H12" fill="#fff"/></g><g  fill="none" stroke="#3f4749" stroke-width="0.81" stroke-linecap="round" stroke-linejoin="round"><path d="M10.8 8.4 14 10V13.4L10.8 15 7.6 13.4V10Z" fill="#fff"/><path d="M7.6 10 10.8 11.6 14 10M10.8 11.6V15"/></g></svg><div class="t" style="left:39.5px;top:43.5px;font-size:13px;line-height:17px;font-weight:400;color:#2f3437;letter-spacing:-0.343px;">Плата USB накопителя</div><svg class="b" style="left:183.75px;top:44.95px;" width="14.5" height="14.5" viewBox="0 0 16 16"><g  fill="none" stroke="#3a3f42" stroke-width="1.08" stroke-linecap="round" stroke-linejoin="round"><path d="M3.5 3.5 12.5 12.5M12.5 3.5 3.5 12.5"/></g></svg><svg class="b" style="left:0px;top:67px" width="936" height="531" viewBox="972 557 936 531"><defs><linearGradient id="gmetal" gradientUnits="userSpaceOnUse" x1="1030" y1="960" x2="1340" y2="850"><stop offset="0" stop-color="#7b7b7b"/><stop offset="0.6" stop-color="#8b8a88"/><stop offset="1" stop-color="#8f8e8c"/></linearGradient><linearGradient id="gside" gradientUnits="userSpaceOnUse" x1="1194" y1="1008" x2="1201" y2="1024"><stop offset="0" stop-color="#8a8988"/><stop offset="0.25" stop-color="#7a7a7a"/><stop offset="1" stop-color="#3a3a3a"/></linearGradient><linearGradient id="gmem" gradientUnits="userSpaceOnUse" x1="1600" y1="680" x2="1800" y2="760"><stop offset="0" stop-color="#393939"/><stop offset="1" stop-color="#2e2e2e"/></linearGradient><linearGradient id="gqfp" gradientUnits="userSpaceOnUse" x1="1400" y1="780" x2="1500" y2="850"><stop offset="0" stop-color="#141414"/><stop offset="1" stop-color="#1e1e1e"/></linearGradient><linearGradient id="gbrown" gradientUnits="userSpaceOnUse" x1="1300" y1="900" x2="1800" y2="650"><stop offset="0" stop-color="#a8683a"/><stop offset="1" stop-color="#985a30"/></linearGradient></defs><polygon points="1751.4,586.0 1265.8,789.3 1257.8,807.0 1332.0,974.7 1352.0,981.5 1851.4,731.1 1853.6,716.3 1766.8,591.3" fill="#157a25" /><polygon points="1751.8,583.2 1266.2,786.5 1258.2,804.2 1332.4,971.9 1352.4,978.7 1851.8,728.3 1854.0,713.5 1767.2,588.5" fill="#1f9430" /><polygon points="1752.1,585.0 1268.2,788.0 1260.8,804.2 1334.1,969.7 1352.5,976.0 1849.9,727.1 1851.9,713.5 1766.3,589.9" fill="url(#gbrown)"/><polygon points="1349.9,792.2 1300.6,813.5 1353.2,928.8 1401.1,905.7 1385.3,872.6 1390.8,857.8 1373.0,821.0 1361.3,816.0" fill="#1f9430" /><polygon points="1465.8,732.4 1364.2,776.0 1358.7,789.8 1408.4,892.7 1423.7,897.9 1527.6,847.6 1531.9,833.4 1479.9,737.2" fill="#1f9430" /><polyline points="1463.6,753.9 1458.2,743.8 1477.4,711.3" fill="none" stroke="#1f9430" stroke-width="8.0" stroke-linecap="round" stroke-linejoin="round" /><polyline points="1457.7,756.5 1452.3,746.4 1467.6,715.4" fill="none" stroke="#1f9430" stroke-width="8.0" stroke-linecap="round" stroke-linejoin="round" /><polyline points="1451.8,759.1 1446.4,748.9 1456.5,720.2" fill="none" stroke="#1f9430" stroke-width="8.0" stroke-linecap="round" stroke-linejoin="round" /><polyline points="1445.8,761.7 1440.5,751.5 1448.8,728.9" fill="none" stroke="#1f9430" stroke-width="8.0" stroke-linecap="round" stroke-linejoin="round" /><polyline points="1439.8,764.3 1434.5,754.1 1434.2,729.6" fill="none" stroke="#1f9430" stroke-width="8.0" stroke-linecap="round" stroke-linejoin="round" /><polyline points="1433.8,766.9 1428.5,756.7 1430.9,741.6" fill="none" stroke="#1f9430" stroke-width="8.0" stroke-linecap="round" stroke-linejoin="round" /><polyline points="1427.8,769.6 1422.5,759.3 1417.8,748.9" fill="none" stroke="#1f9430" stroke-width="8.0" stroke-linecap="round" stroke-linejoin="round" /><polyline points="1421.7,772.2 1416.4,761.9 1406.4,741.4" fill="none" stroke="#1f9430" stroke-width="8.0" stroke-linecap="round" stroke-linejoin="round" /><polyline points="1415.6,774.9 1410.4,764.5 1389.8,748.4" fill="none" stroke="#1f9430" stroke-width="8.0" stroke-linecap="round" stroke-linejoin="round" /><polyline points="1409.5,777.6 1404.3,767.2 1380.9,752.2" fill="none" stroke="#1f9430" stroke-width="8.0" stroke-linecap="round" stroke-linejoin="round" /><polyline points="1403.3,780.2 1398.1,769.8 1376.1,760.4" fill="none" stroke="#1f9430" stroke-width="8.0" stroke-linecap="round" stroke-linejoin="round" /><polyline points="1397.2,782.9 1392.0,772.5 1362.1,760.2" fill="none" stroke="#1f9430" stroke-width="8.0" stroke-linecap="round" stroke-linejoin="round" /><polyline points="1391.0,785.7 1385.8,775.2 1350.5,767.2" fill="none" stroke="#1f9430" stroke-width="8.0" stroke-linecap="round" stroke-linejoin="round" /><polyline points="1384.7,788.4 1379.5,777.9 1338.4,774.1" fill="none" stroke="#1f9430" stroke-width="8.0" stroke-linecap="round" stroke-linejoin="round" /><polyline points="1506.6,835.0 1512.4,845.8 1555.1,857.6" fill="none" stroke="#1f9430" stroke-width="8.0" stroke-linecap="round" stroke-linejoin="round" /><polyline points="1500.7,837.9 1506.4,848.7 1545.7,862.2" fill="none" stroke="#1f9430" stroke-width="8.0" stroke-linecap="round" stroke-linejoin="round" /><polyline points="1494.6,840.7 1500.3,851.6 1533.8,865.8" fill="none" stroke="#1f9430" stroke-width="8.0" stroke-linecap="round" stroke-linejoin="round" /><polyline points="1488.6,843.6 1494.3,854.5 1524.2,867.7" fill="none" stroke="#1f9430" stroke-width="8.0" stroke-linecap="round" stroke-linejoin="round" /><polyline points="1482.5,846.5 1488.2,857.4 1512.8,882.5" fill="none" stroke="#1f9430" stroke-width="8.0" stroke-linecap="round" stroke-linejoin="round" /><polyline points="1476.4,849.4 1482.1,860.4 1501.9,883.9" fill="none" stroke="#1f9430" stroke-width="8.0" stroke-linecap="round" stroke-linejoin="round" /><polyline points="1470.3,852.3 1475.9,863.3 1487.9,876.6" fill="none" stroke="#1f9430" stroke-width="8.0" stroke-linecap="round" stroke-linejoin="round" /><polyline points="1464.1,855.2 1469.8,866.3 1477.5,881.0" fill="none" stroke="#1f9430" stroke-width="8.0" stroke-linecap="round" stroke-linejoin="round" /><polyline points="1457.9,858.2 1463.6,869.3 1469.6,898.1" fill="none" stroke="#1f9430" stroke-width="8.0" stroke-linecap="round" stroke-linejoin="round" /><polyline points="1451.7,861.2 1457.3,872.3 1459.9,906.7" fill="none" stroke="#1f9430" stroke-width="8.0" stroke-linecap="round" stroke-linejoin="round" /><polyline points="1445.5,864.1 1451.1,875.3 1446.3,915.5" fill="none" stroke="#1f9430" stroke-width="8.0" stroke-linecap="round" stroke-linejoin="round" /><polyline points="1439.2,867.1 1444.8,878.3 1431.5,904.3" fill="none" stroke="#1f9430" stroke-width="8.0" stroke-linecap="round" stroke-linejoin="round" /><polyline points="1432.9,870.1 1438.5,881.4 1425.5,925.8" fill="none" stroke="#1f9430" stroke-width="8.0" stroke-linecap="round" stroke-linejoin="round" /><polyline points="1426.6,873.1 1432.1,884.4 1414.2,931.4" fill="none" stroke="#1f9430" stroke-width="8.0" stroke-linecap="round" stroke-linejoin="round" /><polyline points="1468.0,755.4 1478.6,750.8 1481.8,714.9" fill="none" stroke="#1f9430" stroke-width="8.0" stroke-linecap="round" stroke-linejoin="round" /><polyline points="1471.0,761.0 1481.6,756.4 1496.8,718.2" fill="none" stroke="#1f9430" stroke-width="8.0" stroke-linecap="round" stroke-linejoin="round" /><polyline points="1474.0,766.7 1484.6,762.0 1489.1,734.0" fill="none" stroke="#1f9430" stroke-width="8.0" stroke-linecap="round" stroke-linejoin="round" /><polyline points="1477.1,772.4 1487.6,767.6 1509.6,740.3" fill="none" stroke="#1f9430" stroke-width="8.0" stroke-linecap="round" stroke-linejoin="round" /><polyline points="1480.1,778.1 1490.7,773.3 1497.5,754.5" fill="none" stroke="#1f9430" stroke-width="8.0" stroke-linecap="round" stroke-linejoin="round" /><polyline points="1483.1,783.8 1493.7,779.0 1500.7,764.3" fill="none" stroke="#1f9430" stroke-width="8.0" stroke-linecap="round" stroke-linejoin="round" /><polyline points="1486.2,789.6 1496.8,784.7 1517.3,770.3" fill="none" stroke="#1f9430" stroke-width="8.0" stroke-linecap="round" stroke-linejoin="round" /><polyline points="1489.3,795.4 1499.9,790.5 1519.6,783.9" fill="none" stroke="#1f9430" stroke-width="8.0" stroke-linecap="round" stroke-linejoin="round" /><polyline points="1492.4,801.2 1503.0,796.3 1521.1,798.2" fill="none" stroke="#1f9430" stroke-width="8.0" stroke-linecap="round" stroke-linejoin="round" /><polyline points="1495.5,807.0 1506.1,802.1 1526.9,808.0" fill="none" stroke="#1f9430" stroke-width="8.0" stroke-linecap="round" stroke-linejoin="round" /><polyline points="1498.6,812.9 1509.3,807.9 1533.1,816.7" fill="none" stroke="#1f9430" stroke-width="8.0" stroke-linecap="round" stroke-linejoin="round" /><polyline points="1501.7,818.7 1512.4,813.8 1541.4,824.9" fill="none" stroke="#1f9430" stroke-width="8.0" stroke-linecap="round" stroke-linejoin="round" /><polyline points="1504.9,824.7 1515.6,819.6 1563.6,831.6" fill="none" stroke="#1f9430" stroke-width="8.0" stroke-linecap="round" stroke-linejoin="round" /><polyline points="1508.0,830.6 1518.7,825.5 1559.5,847.8" fill="none" stroke="#1f9430" stroke-width="8.0" stroke-linecap="round" stroke-linejoin="round" /><polyline points="1383.1,792.7 1371.7,797.7 1333.9,776.3" fill="none" stroke="#1f9430" stroke-width="8.0" stroke-linecap="round" stroke-linejoin="round" /><polyline points="1386.0,798.6 1374.6,803.6 1328.8,793.0" fill="none" stroke="#1f9430" stroke-width="8.0" stroke-linecap="round" stroke-linejoin="round" /><polyline points="1388.9,804.5 1377.5,809.6 1350.9,798.8" fill="none" stroke="#1f9430" stroke-width="8.0" stroke-linecap="round" stroke-linejoin="round" /><polyline points="1391.8,810.5 1380.4,815.5 1353.3,805.4" fill="none" stroke="#1f9430" stroke-width="8.0" stroke-linecap="round" stroke-linejoin="round" /><polyline points="1394.7,816.4 1383.4,821.6 1349.4,820.8" fill="none" stroke="#1f9430" stroke-width="8.0" stroke-linecap="round" stroke-linejoin="round" /><polyline points="1397.7,822.5 1386.3,827.6 1364.6,825.4" fill="none" stroke="#1f9430" stroke-width="8.0" stroke-linecap="round" stroke-linejoin="round" /><polyline points="1400.7,828.5 1389.3,833.7 1376.9,836.9" fill="none" stroke="#1f9430" stroke-width="8.0" stroke-linecap="round" stroke-linejoin="round" /><polyline points="1403.6,834.6 1392.2,839.8 1379.3,849.5" fill="none" stroke="#1f9430" stroke-width="8.0" stroke-linecap="round" stroke-linejoin="round" /><polyline points="1406.6,840.6 1395.2,845.9 1380.2,861.6" fill="none" stroke="#1f9430" stroke-width="8.0" stroke-linecap="round" stroke-linejoin="round" /><polyline points="1409.7,846.8 1398.2,852.1 1372.6,879.2" fill="none" stroke="#1f9430" stroke-width="8.0" stroke-linecap="round" stroke-linejoin="round" /><polyline points="1412.7,852.9 1401.2,858.2 1385.2,890.2" fill="none" stroke="#1f9430" stroke-width="8.0" stroke-linecap="round" stroke-linejoin="round" /><polyline points="1415.7,859.1 1404.2,864.5 1394.6,894.3" fill="none" stroke="#1f9430" stroke-width="8.0" stroke-linecap="round" stroke-linejoin="round" /><polyline points="1418.8,865.3 1407.3,870.7 1386.2,917.8" fill="none" stroke="#1f9430" stroke-width="8.0" stroke-linecap="round" stroke-linejoin="round" /><polyline points="1421.8,871.5 1410.3,877.0 1401.3,919.9" fill="none" stroke="#1f9430" stroke-width="8.0" stroke-linecap="round" stroke-linejoin="round" /><polyline points="1482.5,758.1 1488.1,743.2 1503.5,732.3 1534.5,717.5 1552.1,697.9" fill="none" stroke="#1f9430" stroke-width="8.0" stroke-linecap="round" stroke-linejoin="round" /><polyline points="1489.2,770.5 1501.9,763.4 1515.1,753.3 1540.5,740.6 1566.9,723.4" fill="none" stroke="#1f9430" stroke-width="8.0" stroke-linecap="round" stroke-linejoin="round" /><polyline points="1495.9,783.0 1516.0,783.8 1526.8,774.6 1555.2,760.3 1581.9,749.5" fill="none" stroke="#1f9430" stroke-width="8.0" stroke-linecap="round" stroke-linejoin="round" /><polyline points="1502.7,795.7 1530.2,804.7 1538.8,796.3 1570.0,780.3 1597.3,776.1" fill="none" stroke="#1f9430" stroke-width="8.0" stroke-linecap="round" stroke-linejoin="round" /><polyline points="1509.6,808.5 1544.7,825.8 1550.9,818.4 1576.6,804.6 1613.0,803.2" fill="none" stroke="#1f9430" stroke-width="8.0" stroke-linecap="round" stroke-linejoin="round" /><polyline points="1463.6,753.9 1458.2,743.8 1477.4,711.3" fill="none" stroke="#a2643a" stroke-width="2.5" stroke-linecap="round" stroke-linejoin="round" /><polyline points="1457.7,756.5 1452.3,746.4 1467.6,715.4" fill="none" stroke="#a2643a" stroke-width="2.5" stroke-linecap="round" stroke-linejoin="round" /><polyline points="1451.8,759.1 1446.4,748.9 1456.5,720.2" fill="none" stroke="#a2643a" stroke-width="2.5" stroke-linecap="round" stroke-linejoin="round" /><polyline points="1445.8,761.7 1440.5,751.5 1448.8,728.9" fill="none" stroke="#a2643a" stroke-width="2.5" stroke-linecap="round" stroke-linejoin="round" /><polyline points="1439.8,764.3 1434.5,754.1 1434.2,729.6" fill="none" stroke="#a2643a" stroke-width="2.5" stroke-linecap="round" stroke-linejoin="round" /><polyline points="1433.8,766.9 1428.5,756.7 1430.9,741.6" fill="none" stroke="#a2643a" stroke-width="2.5" stroke-linecap="round" stroke-linejoin="round" /><polyline points="1427.8,769.6 1422.5,759.3 1417.8,748.9" fill="none" stroke="#a2643a" stroke-width="2.5" stroke-linecap="round" stroke-linejoin="round" /><polyline points="1421.7,772.2 1416.4,761.9 1406.4,741.4" fill="none" stroke="#a2643a" stroke-width="2.5" stroke-linecap="round" stroke-linejoin="round" /><polyline points="1415.6,774.9 1410.4,764.5 1389.8,748.4" fill="none" stroke="#a2643a" stroke-width="2.5" stroke-linecap="round" stroke-linejoin="round" /><polyline points="1409.5,777.6 1404.3,767.2 1380.9,752.2" fill="none" stroke="#a2643a" stroke-width="2.5" stroke-linecap="round" stroke-linejoin="round" /><polyline points="1403.3,780.2 1398.1,769.8 1376.1,760.4" fill="none" stroke="#a2643a" stroke-width="2.5" stroke-linecap="round" stroke-linejoin="round" /><polyline points="1397.2,782.9 1392.0,772.5 1362.1,760.2" fill="none" stroke="#a2643a" stroke-width="2.5" stroke-linecap="round" stroke-linejoin="round" /><polyline points="1391.0,785.7 1385.8,775.2 1350.5,767.2" fill="none" stroke="#a2643a" stroke-width="2.5" stroke-linecap="round" stroke-linejoin="round" /><polyline points="1384.7,788.4 1379.5,777.9 1338.4,774.1" fill="none" stroke="#a2643a" stroke-width="2.5" stroke-linecap="round" stroke-linejoin="round" /><polyline points="1506.6,835.0 1512.4,845.8 1555.1,857.6" fill="none" stroke="#a2643a" stroke-width="2.5" stroke-linecap="round" stroke-linejoin="round" /><polyline points="1500.7,837.9 1506.4,848.7 1545.7,862.2" fill="none" stroke="#a2643a" stroke-width="2.5" stroke-linecap="round" stroke-linejoin="round" /><polyline points="1494.6,840.7 1500.3,851.6 1533.8,865.8" fill="none" stroke="#a2643a" stroke-width="2.5" stroke-linecap="round" stroke-linejoin="round" /><polyline points="1488.6,843.6 1494.3,854.5 1524.2,867.7" fill="none" stroke="#a2643a" stroke-width="2.5" stroke-linecap="round" stroke-linejoin="round" /><polyline points="1482.5,846.5 1488.2,857.4 1512.8,882.5" fill="none" stroke="#a2643a" stroke-width="2.5" stroke-linecap="round" stroke-linejoin="round" /><polyline points="1476.4,849.4 1482.1,860.4 1501.9,883.9" fill="none" stroke="#a2643a" stroke-width="2.5" stroke-linecap="round" stroke-linejoin="round" /><polyline points="1470.3,852.3 1475.9,863.3 1487.9,876.6" fill="none" stroke="#a2643a" stroke-width="2.5" stroke-linecap="round" stroke-linejoin="round" /><polyline points="1464.1,855.2 1469.8,866.3 1477.5,881.0" fill="none" stroke="#a2643a" stroke-width="2.5" stroke-linecap="round" stroke-linejoin="round" /><polyline points="1457.9,858.2 1463.6,869.3 1469.6,898.1" fill="none" stroke="#a2643a" stroke-width="2.5" stroke-linecap="round" stroke-linejoin="round" /><polyline points="1451.7,861.2 1457.3,872.3 1459.9,906.7" fill="none" stroke="#a2643a" stroke-width="2.5" stroke-linecap="round" stroke-linejoin="round" /><polyline points="1445.5,864.1 1451.1,875.3 1446.3,915.5" fill="none" stroke="#a2643a" stroke-width="2.5" stroke-linecap="round" stroke-linejoin="round" /><polyline points="1439.2,867.1 1444.8,878.3 1431.5,904.3" fill="none" stroke="#a2643a" stroke-width="2.5" stroke-linecap="round" stroke-linejoin="round" /><polyline points="1432.9,870.1 1438.5,881.4 1425.5,925.8" fill="none" stroke="#a2643a" stroke-width="2.5" stroke-linecap="round" stroke-linejoin="round" /><polyline points="1426.6,873.1 1432.1,884.4 1414.2,931.4" fill="none" stroke="#a2643a" stroke-width="2.5" stroke-linecap="round" stroke-linejoin="round" /><polyline points="1468.0,755.4 1478.6,750.8 1481.8,714.9" fill="none" stroke="#a2643a" stroke-width="2.5" stroke-linecap="round" stroke-linejoin="round" /><polyline points="1471.0,761.0 1481.6,756.4 1496.8,718.2" fill="none" stroke="#a2643a" stroke-width="2.5" stroke-linecap="round" stroke-linejoin="round" /><polyline points="1474.0,766.7 1484.6,762.0 1489.1,734.0" fill="none" stroke="#a2643a" stroke-width="2.5" stroke-linecap="round" stroke-linejoin="round" /><polyline points="1477.1,772.4 1487.6,767.6 1509.6,740.3" fill="none" stroke="#a2643a" stroke-width="2.5" stroke-linecap="round" stroke-linejoin="round" /><polyline points="1480.1,778.1 1490.7,773.3 1497.5,754.5" fill="none" stroke="#a2643a" stroke-width="2.5" stroke-linecap="round" stroke-linejoin="round" /><polyline points="1483.1,783.8 1493.7,779.0 1500.7,764.3" fill="none" stroke="#a2643a" stroke-width="2.5" stroke-linecap="round" stroke-linejoin="round" /><polyline points="1486.2,789.6 1496.8,784.7 1517.3,770.3" fill="none" stroke="#a2643a" stroke-width="2.5" stroke-linecap="round" stroke-linejoin="round" /><polyline points="1489.3,795.4 1499.9,790.5 1519.6,783.9" fill="none" stroke="#a2643a" stroke-width="2.5" stroke-linecap="round" stroke-linejoin="round" /><polyline points="1492.4,801.2 1503.0,796.3 1521.1,798.2" fill="none" stroke="#a2643a" stroke-width="2.5" stroke-linecap="round" stroke-linejoin="round" /><polyline points="1495.5,807.0 1506.1,802.1 1526.9,808.0" fill="none" stroke="#a2643a" stroke-width="2.5" stroke-linecap="round" stroke-linejoin="round" /><polyline points="1498.6,812.9 1509.3,807.9 1533.1,816.7" fill="none" stroke="#a2643a" stroke-width="2.5" stroke-linecap="round" stroke-linejoin="round" /><polyline points="1501.7,818.7 1512.4,813.8 1541.4,824.9" fill="none" stroke="#a2643a" stroke-width="2.5" stroke-linecap="round" stroke-linejoin="round" /><polyline points="1504.9,824.7 1515.6,819.6 1563.6,831.6" fill="none" stroke="#a2643a" stroke-width="2.5" stroke-linecap="round" stroke-linejoin="round" /><polyline points="1508.0,830.6 1518.7,825.5 1559.5,847.8" fill="none" stroke="#a2643a" stroke-width="2.5" stroke-linecap="round" stroke-linejoin="round" /><polyline points="1383.1,792.7 1371.7,797.7 1333.9,776.3" fill="none" stroke="#a2643a" stroke-width="2.5" stroke-linecap="round" stroke-linejoin="round" /><polyline points="1386.0,798.6 1374.6,803.6 1328.8,793.0" fill="none" stroke="#a2643a" stroke-width="2.5" stroke-linecap="round" stroke-linejoin="round" /><polyline points="1388.9,804.5 1377.5,809.6 1350.9,798.8" fill="none" stroke="#a2643a" stroke-width="2.5" stroke-linecap="round" stroke-linejoin="round" /><polyline points="1391.8,810.5 1380.4,815.5 1353.3,805.4" fill="none" stroke="#a2643a" stroke-width="2.5" stroke-linecap="round" stroke-linejoin="round" /><polyline points="1394.7,816.4 1383.4,821.6 1349.4,820.8" fill="none" stroke="#a2643a" stroke-width="2.5" stroke-linecap="round" stroke-linejoin="round" /><polyline points="1397.7,822.5 1386.3,827.6 1364.6,825.4" fill="none" stroke="#a2643a" stroke-width="2.5" stroke-linecap="round" stroke-linejoin="round" /><polyline points="1400.7,828.5 1389.3,833.7 1376.9,836.9" fill="none" stroke="#a2643a" stroke-width="2.5" stroke-linecap="round" stroke-linejoin="round" /><polyline points="1403.6,834.6 1392.2,839.8 1379.3,849.5" fill="none" stroke="#a2643a" stroke-width="2.5" stroke-linecap="round" stroke-linejoin="round" /><polyline points="1406.6,840.6 1395.2,845.9 1380.2,861.6" fill="none" stroke="#a2643a" stroke-width="2.5" stroke-linecap="round" stroke-linejoin="round" /><polyline points="1409.7,846.8 1398.2,852.1 1372.6,879.2" fill="none" stroke="#a2643a" stroke-width="2.5" stroke-linecap="round" stroke-linejoin="round" /><polyline points="1412.7,852.9 1401.2,858.2 1385.2,890.2" fill="none" stroke="#a2643a" stroke-width="2.5" stroke-linecap="round" stroke-linejoin="round" /><polyline points="1415.7,859.1 1404.2,864.5 1394.6,894.3" fill="none" stroke="#a2643a" stroke-width="2.5" stroke-linecap="round" stroke-linejoin="round" /><polyline points="1418.8,865.3 1407.3,870.7 1386.2,917.8" fill="none" stroke="#a2643a" stroke-width="2.5" stroke-linecap="round" stroke-linejoin="round" /><polyline points="1421.8,871.5 1410.3,877.0 1401.3,919.9" fill="none" stroke="#a2643a" stroke-width="2.5" stroke-linecap="round" stroke-linejoin="round" /><polyline points="1482.5,758.1 1488.1,743.2 1503.5,732.3 1534.5,717.5 1552.1,697.9" fill="none" stroke="#a2643a" stroke-width="2.5" stroke-linecap="round" stroke-linejoin="round" /><polyline points="1489.2,770.5 1501.9,763.4 1515.1,753.3 1540.5,740.6 1566.9,723.4" fill="none" stroke="#a2643a" stroke-width="2.5" stroke-linecap="round" stroke-linejoin="round" /><polyline points="1495.9,783.0 1516.0,783.8 1526.8,774.6 1555.2,760.3 1581.9,749.5" fill="none" stroke="#a2643a" stroke-width="2.5" stroke-linecap="round" stroke-linejoin="round" /><polyline points="1502.7,795.7 1530.2,804.7 1538.8,796.3 1570.0,780.3 1597.3,776.1" fill="none" stroke="#a2643a" stroke-width="2.5" stroke-linecap="round" stroke-linejoin="round" /><polyline points="1509.6,808.5 1544.7,825.8 1550.9,818.4 1576.6,804.6 1613.0,803.2" fill="none" stroke="#a2643a" stroke-width="2.5" stroke-linecap="round" stroke-linejoin="round" /><circle cx="1477.4" cy="711.3" r="6.4" fill="#1f9430"/><circle cx="1456.5" cy="720.2" r="6.4" fill="#1f9430"/><circle cx="1434.2" cy="729.6" r="6.4" fill="#1f9430"/><circle cx="1417.8" cy="748.9" r="6.4" fill="#1f9430"/><circle cx="1389.8" cy="748.4" r="6.4" fill="#1f9430"/><circle cx="1376.1" cy="760.4" r="6.4" fill="#1f9430"/><circle cx="1350.5" cy="767.2" r="6.4" fill="#1f9430"/><circle cx="1545.7" cy="862.2" r="6.4" fill="#1f9430"/><circle cx="1524.2" cy="867.7" r="6.4" fill="#1f9430"/><circle cx="1501.9" cy="883.9" r="6.4" fill="#1f9430"/><circle cx="1477.5" cy="881.0" r="6.4" fill="#1f9430"/><circle cx="1459.9" cy="906.7" r="6.4" fill="#1f9430"/><circle cx="1431.5" cy="904.3" r="6.4" fill="#1f9430"/><circle cx="1414.2" cy="931.4" r="6.4" fill="#1f9430"/><circle cx="1481.8" cy="714.9" r="6.4" fill="#1f9430"/><circle cx="1489.1" cy="734.0" r="6.4" fill="#1f9430"/><circle cx="1497.5" cy="754.5" r="6.4" fill="#1f9430"/><circle cx="1517.3" cy="770.3" r="6.4" fill="#1f9430"/><circle cx="1521.1" cy="798.2" r="6.4" fill="#1f9430"/><circle cx="1533.1" cy="816.7" r="6.4" fill="#1f9430"/><circle cx="1563.6" cy="831.6" r="6.4" fill="#1f9430"/><circle cx="1328.8" cy="793.0" r="6.4" fill="#1f9430"/><circle cx="1353.3" cy="805.4" r="6.4" fill="#1f9430"/><circle cx="1364.6" cy="825.4" r="6.4" fill="#1f9430"/><circle cx="1379.3" cy="849.5" r="6.4" fill="#1f9430"/><circle cx="1372.6" cy="879.2" r="6.4" fill="#1f9430"/><circle cx="1394.6" cy="894.3" r="6.4" fill="#1f9430"/><circle cx="1401.3" cy="919.9" r="6.4" fill="#1f9430"/><polyline points="1463.6,753.9 1458.2,743.8 1477.4,711.3" fill="none" stroke="#a2643a" stroke-width="2.5" stroke-linecap="round" stroke-linejoin="round" /><polyline points="1457.7,756.5 1452.3,746.4 1467.6,715.4" fill="none" stroke="#a2643a" stroke-width="2.5" stroke-linecap="round" stroke-linejoin="round" /><polyline points="1451.8,759.1 1446.4,748.9 1456.5,720.2" fill="none" stroke="#a2643a" stroke-width="2.5" stroke-linecap="round" stroke-linejoin="round" /><polyline points="1445.8,761.7 1440.5,751.5 1448.8,728.9" fill="none" stroke="#a2643a" stroke-width="2.5" stroke-linecap="round" stroke-linejoin="round" /><polyline points="1439.8,764.3 1434.5,754.1 1434.2,729.6" fill="none" stroke="#a2643a" stroke-width="2.5" stroke-linecap="round" stroke-linejoin="round" /><polyline points="1433.8,766.9 1428.5,756.7 1430.9,741.6" fill="none" stroke="#a2643a" stroke-width="2.5" stroke-linecap="round" stroke-linejoin="round" /><polyline points="1427.8,769.6 1422.5,759.3 1417.8,748.9" fill="none" stroke="#a2643a" stroke-width="2.5" stroke-linecap="round" stroke-linejoin="round" /><polyline points="1421.7,772.2 1416.4,761.9 1406.4,741.4" fill="none" stroke="#a2643a" stroke-width="2.5" stroke-linecap="round" stroke-linejoin="round" /><polyline points="1415.6,774.9 1410.4,764.5 1389.8,748.4" fill="none" stroke="#a2643a" stroke-width="2.5" stroke-linecap="round" stroke-linejoin="round" /><polyline points="1409.5,777.6 1404.3,767.2 1380.9,752.2" fill="none" stroke="#a2643a" stroke-width="2.5" stroke-linecap="round" stroke-linejoin="round" /><polyline points="1403.3,780.2 1398.1,769.8 1376.1,760.4" fill="none" stroke="#a2643a" stroke-width="2.5" stroke-linecap="round" stroke-linejoin="round" /><polyline points="1397.2,782.9 1392.0,772.5 1362.1,760.2" fill="none" stroke="#a2643a" stroke-width="2.5" stroke-linecap="round" stroke-linejoin="round" /><polyline points="1391.0,785.7 1385.8,775.2 1350.5,767.2" fill="none" stroke="#a2643a" stroke-width="2.5" stroke-linecap="round" stroke-linejoin="round" /><polyline points="1384.7,788.4 1379.5,777.9 1338.4,774.1" fill="none" stroke="#a2643a" stroke-width="2.5" stroke-linecap="round" stroke-linejoin="round" /><polyline points="1506.6,835.0 1512.4,845.8 1555.1,857.6" fill="none" stroke="#a2643a" stroke-width="2.5" stroke-linecap="round" stroke-linejoin="round" /><polyline points="1500.7,837.9 1506.4,848.7 1545.7,862.2" fill="none" stroke="#a2643a" stroke-width="2.5" stroke-linecap="round" stroke-linejoin="round" /><polyline points="1494.6,840.7 1500.3,851.6 1533.8,865.8" fill="none" stroke="#a2643a" stroke-width="2.5" stroke-linecap="round" stroke-linejoin="round" /><polyline points="1488.6,843.6 1494.3,854.5 1524.2,867.7" fill="none" stroke="#a2643a" stroke-width="2.5" stroke-linecap="round" stroke-linejoin="round" /><polyline points="1482.5,846.5 1488.2,857.4 1512.8,882.5" fill="none" stroke="#a2643a" stroke-width="2.5" stroke-linecap="round" stroke-linejoin="round" /><polyline points="1476.4,849.4 1482.1,860.4 1501.9,883.9" fill="none" stroke="#a2643a" stroke-width="2.5" stroke-linecap="round" stroke-linejoin="round" /><polyline points="1470.3,852.3 1475.9,863.3 1487.9,876.6" fill="none" stroke="#a2643a" stroke-width="2.5" stroke-linecap="round" stroke-linejoin="round" /><polyline points="1464.1,855.2 1469.8,866.3 1477.5,881.0" fill="none" stroke="#a2643a" stroke-width="2.5" stroke-linecap="round" stroke-linejoin="round" /><polyline points="1457.9,858.2 1463.6,869.3 1469.6,898.1" fill="none" stroke="#a2643a" stroke-width="2.5" stroke-linecap="round" stroke-linejoin="round" /><polyline points="1451.7,861.2 1457.3,872.3 1459.9,906.7" fill="none" stroke="#a2643a" stroke-width="2.5" stroke-linecap="round" stroke-linejoin="round" /><polyline points="1445.5,864.1 1451.1,875.3 1446.3,915.5" fill="none" stroke="#a2643a" stroke-width="2.5" stroke-linecap="round" stroke-linejoin="round" /><polyline points="1439.2,867.1 1444.8,878.3 1431.5,904.3" fill="none" stroke="#a2643a" stroke-width="2.5" stroke-linecap="round" stroke-linejoin="round" /><polyline points="1432.9,870.1 1438.5,881.4 1425.5,925.8" fill="none" stroke="#a2643a" stroke-width="2.5" stroke-linecap="round" stroke-linejoin="round" /><polyline points="1426.6,873.1 1432.1,884.4 1414.2,931.4" fill="none" stroke="#a2643a" stroke-width="2.5" stroke-linecap="round" stroke-linejoin="round" /><polyline points="1468.0,755.4 1478.6,750.8 1481.8,714.9" fill="none" stroke="#a2643a" stroke-width="2.5" stroke-linecap="round" stroke-linejoin="round" /><polyline points="1471.0,761.0 1481.6,756.4 1496.8,718.2" fill="none" stroke="#a2643a" stroke-width="2.5" stroke-linecap="round" stroke-linejoin="round" /><polyline points="1474.0,766.7 1484.6,762.0 1489.1,734.0" fill="none" stroke="#a2643a" stroke-width="2.5" stroke-linecap="round" stroke-linejoin="round" /><polyline points="1477.1,772.4 1487.6,767.6 1509.6,740.3" fill="none" stroke="#a2643a" stroke-width="2.5" stroke-linecap="round" stroke-linejoin="round" /><polyline points="1480.1,778.1 1490.7,773.3 1497.5,754.5" fill="none" stroke="#a2643a" stroke-width="2.5" stroke-linecap="round" stroke-linejoin="round" /><polyline points="1483.1,783.8 1493.7,779.0 1500.7,764.3" fill="none" stroke="#a2643a" stroke-width="2.5" stroke-linecap="round" stroke-linejoin="round" /><polyline points="1486.2,789.6 1496.8,784.7 1517.3,770.3" fill="none" stroke="#a2643a" stroke-width="2.5" stroke-linecap="round" stroke-linejoin="round" /><polyline points="1489.3,795.4 1499.9,790.5 1519.6,783.9" fill="none" stroke="#a2643a" stroke-width="2.5" stroke-linecap="round" stroke-linejoin="round" /><polyline points="1492.4,801.2 1503.0,796.3 1521.1,798.2" fill="none" stroke="#a2643a" stroke-width="2.5" stroke-linecap="round" stroke-linejoin="round" /><polyline points="1495.5,807.0 1506.1,802.1 1526.9,808.0" fill="none" stroke="#a2643a" stroke-width="2.5" stroke-linecap="round" stroke-linejoin="round" /><polyline points="1498.6,812.9 1509.3,807.9 1533.1,816.7" fill="none" stroke="#a2643a" stroke-width="2.5" stroke-linecap="round" stroke-linejoin="round" /><polyline points="1501.7,818.7 1512.4,813.8 1541.4,824.9" fill="none" stroke="#a2643a" stroke-width="2.5" stroke-linecap="round" stroke-linejoin="round" /><polyline points="1504.9,824.7 1515.6,819.6 1563.6,831.6" fill="none" stroke="#a2643a" stroke-width="2.5" stroke-linecap="round" stroke-linejoin="round" /><polyline points="1508.0,830.6 1518.7,825.5 1559.5,847.8" fill="none" stroke="#a2643a" stroke-width="2.5" stroke-linecap="round" stroke-linejoin="round" /><polyline points="1383.1,792.7 1371.7,797.7 1333.9,776.3" fill="none" stroke="#a2643a" stroke-width="2.5" stroke-linecap="round" stroke-linejoin="round" /><polyline points="1386.0,798.6 1374.6,803.6 1328.8,793.0" fill="none" stroke="#a2643a" stroke-width="2.5" stroke-linecap="round" stroke-linejoin="round" /><polyline points="1388.9,804.5 1377.5,809.6 1350.9,798.8" fill="none" stroke="#a2643a" stroke-width="2.5" stroke-linecap="round" stroke-linejoin="round" /><polyline points="1391.8,810.5 1380.4,815.5 1353.3,805.4" fill="none" stroke="#a2643a" stroke-width="2.5" stroke-linecap="round" stroke-linejoin="round" /><polyline points="1394.7,816.4 1383.4,821.6 1349.4,820.8" fill="none" stroke="#a2643a" stroke-width="2.5" stroke-linecap="round" stroke-linejoin="round" /><polyline points="1397.7,822.5 1386.3,827.6 1364.6,825.4" fill="none" stroke="#a2643a" stroke-width="2.5" stroke-linecap="round" stroke-linejoin="round" /><polyline points="1400.7,828.5 1389.3,833.7 1376.9,836.9" fill="none" stroke="#a2643a" stroke-width="2.5" stroke-linecap="round" stroke-linejoin="round" /><polyline points="1403.6,834.6 1392.2,839.8 1379.3,849.5" fill="none" stroke="#a2643a" stroke-width="2.5" stroke-linecap="round" stroke-linejoin="round" /><polyline points="1406.6,840.6 1395.2,845.9 1380.2,861.6" fill="none" stroke="#a2643a" stroke-width="2.5" stroke-linecap="round" stroke-linejoin="round" /><polyline points="1409.7,846.8 1398.2,852.1 1372.6,879.2" fill="none" stroke="#a2643a" stroke-width="2.5" stroke-linecap="round" stroke-linejoin="round" /><polyline points="1412.7,852.9 1401.2,858.2 1385.2,890.2" fill="none" stroke="#a2643a" stroke-width="2.5" stroke-linecap="round" stroke-linejoin="round" /><polyline points="1415.7,859.1 1404.2,864.5 1394.6,894.3" fill="none" stroke="#a2643a" stroke-width="2.5" stroke-linecap="round" stroke-linejoin="round" /><polyline points="1418.8,865.3 1407.3,870.7 1386.2,917.8" fill="none" stroke="#a2643a" stroke-width="2.5" stroke-linecap="round" stroke-linejoin="round" /><polyline points="1421.8,871.5 1410.3,877.0 1401.3,919.9" fill="none" stroke="#a2643a" stroke-width="2.5" stroke-linecap="round" stroke-linejoin="round" /><polyline points="1482.5,758.1 1488.1,743.2 1503.5,732.3 1534.5,717.5 1552.1,697.9" fill="none" stroke="#a2643a" stroke-width="2.5" stroke-linecap="round" stroke-linejoin="round" /><polyline points="1489.2,770.5 1501.9,763.4 1515.1,753.3 1540.5,740.6 1566.9,723.4" fill="none" stroke="#a2643a" stroke-width="2.5" stroke-linecap="round" stroke-linejoin="round" /><polyline points="1495.9,783.0 1516.0,783.8 1526.8,774.6 1555.2,760.3 1581.9,749.5" fill="none" stroke="#a2643a" stroke-width="2.5" stroke-linecap="round" stroke-linejoin="round" /><polyline points="1502.7,795.7 1530.2,804.7 1538.8,796.3 1570.0,780.3 1597.3,776.1" fill="none" stroke="#a2643a" stroke-width="2.5" stroke-linecap="round" stroke-linejoin="round" /><polyline points="1509.6,808.5 1544.7,825.8 1550.9,818.4 1576.6,804.6 1613.0,803.2" fill="none" stroke="#a2643a" stroke-width="2.5" stroke-linecap="round" stroke-linejoin="round" /><circle cx="1477.4" cy="711.3" r="3.5" fill="#a2643a"/><circle cx="1477.4" cy="711.3" r="1.5" fill="#6a3c22"/><circle cx="1456.5" cy="720.2" r="3.5" fill="#a2643a"/><circle cx="1456.5" cy="720.2" r="1.5" fill="#6a3c22"/><circle cx="1434.2" cy="729.6" r="3.5" fill="#a2643a"/><circle cx="1434.2" cy="729.6" r="1.5" fill="#6a3c22"/><circle cx="1417.8" cy="748.9" r="3.5" fill="#a2643a"/><circle cx="1417.8" cy="748.9" r="1.5" fill="#6a3c22"/><circle cx="1389.8" cy="748.4" r="3.5" fill="#a2643a"/><circle cx="1389.8" cy="748.4" r="1.5" fill="#6a3c22"/><circle cx="1376.1" cy="760.4" r="3.5" fill="#a2643a"/><circle cx="1376.1" cy="760.4" r="1.5" fill="#6a3c22"/><circle cx="1350.5" cy="767.2" r="3.5" fill="#a2643a"/><circle cx="1350.5" cy="767.2" r="1.5" fill="#6a3c22"/><circle cx="1545.7" cy="862.2" r="3.5" fill="#a2643a"/><circle cx="1545.7" cy="862.2" r="1.5" fill="#6a3c22"/><circle cx="1524.2" cy="867.7" r="3.5" fill="#a2643a"/><circle cx="1524.2" cy="867.7" r="1.5" fill="#6a3c22"/><circle cx="1501.9" cy="883.9" r="3.5" fill="#a2643a"/><circle cx="1501.9" cy="883.9" r="1.5" fill="#6a3c22"/><circle cx="1477.5" cy="881.0" r="3.5" fill="#a2643a"/><circle cx="1477.5" cy="881.0" r="1.5" fill="#6a3c22"/><circle cx="1459.9" cy="906.7" r="3.5" fill="#a2643a"/><circle cx="1459.9" cy="906.7" r="1.5" fill="#6a3c22"/><circle cx="1431.5" cy="904.3" r="3.5" fill="#a2643a"/><circle cx="1431.5" cy="904.3" r="1.5" fill="#6a3c22"/><circle cx="1414.2" cy="931.4" r="3.5" fill="#a2643a"/><circle cx="1414.2" cy="931.4" r="1.5" fill="#6a3c22"/><circle cx="1481.8" cy="714.9" r="3.5" fill="#a2643a"/><circle cx="1481.8" cy="714.9" r="1.5" fill="#6a3c22"/><circle cx="1489.1" cy="734.0" r="3.5" fill="#a2643a"/><circle cx="1489.1" cy="734.0" r="1.5" fill="#6a3c22"/><circle cx="1497.5" cy="754.5" r="3.5" fill="#a2643a"/><circle cx="1497.5" cy="754.5" r="1.5" fill="#6a3c22"/><circle cx="1517.3" cy="770.3" r="3.5" fill="#a2643a"/><circle cx="1517.3" cy="770.3" r="1.5" fill="#6a3c22"/><circle cx="1521.1" cy="798.2" r="3.5" fill="#a2643a"/><circle cx="1521.1" cy="798.2" r="1.5" fill="#6a3c22"/><circle cx="1533.1" cy="816.7" r="3.5" fill="#a2643a"/><circle cx="1533.1" cy="816.7" r="1.5" fill="#6a3c22"/><circle cx="1563.6" cy="831.6" r="3.5" fill="#a2643a"/><circle cx="1563.6" cy="831.6" r="1.5" fill="#6a3c22"/><circle cx="1328.8" cy="793.0" r="3.5" fill="#a2643a"/><circle cx="1328.8" cy="793.0" r="1.5" fill="#6a3c22"/><circle cx="1353.3" cy="805.4" r="3.5" fill="#a2643a"/><circle cx="1353.3" cy="805.4" r="1.5" fill="#6a3c22"/><circle cx="1364.6" cy="825.4" r="3.5" fill="#a2643a"/><circle cx="1364.6" cy="825.4" r="1.5" fill="#6a3c22"/><circle cx="1379.3" cy="849.5" r="3.5" fill="#a2643a"/><circle cx="1379.3" cy="849.5" r="1.5" fill="#6a3c22"/><circle cx="1372.6" cy="879.2" r="3.5" fill="#a2643a"/><circle cx="1372.6" cy="879.2" r="1.5" fill="#6a3c22"/><circle cx="1394.6" cy="894.3" r="3.5" fill="#a2643a"/><circle cx="1394.6" cy="894.3" r="1.5" fill="#6a3c22"/><circle cx="1401.3" cy="919.9" r="3.5" fill="#a2643a"/><circle cx="1401.3" cy="919.9" r="1.5" fill="#6a3c22"/><polygon points="1383.6,879.2 1308.7,914.5 1321.0,942.4 1396.4,906.0" fill="#1f9430" /><polygon points="1393.2,882.5 1372.9,892.1 1379.5,906.2 1399.9,896.5" fill="#a2643a" /><polygon points="1373.1,892.5 1354.5,901.3 1360.7,914.8 1379.4,905.8" fill="#e6e6e6" /><polygon points="1368.9,848.2 1294.4,882.2 1306.5,909.5 1381.4,874.4" fill="#1f9430" /><polygon points="1378.3,851.4 1358.1,860.7 1364.6,874.5 1384.8,865.1" fill="#a2643a" /><polygon points="1358.3,861.1 1339.9,869.6 1346.0,882.8 1364.5,874.1" fill="#e6e6e6" /><polygon points="1357.1,823.6 1283.1,856.6 1294.9,883.4 1369.4,849.3" fill="#1f9430" /><polygon points="1366.5,826.8 1346.4,835.8 1352.8,849.4 1372.9,840.2" fill="#a2643a" /><polygon points="1346.6,836.2 1328.2,844.4 1334.2,857.4 1352.6,849.0" fill="#e6e6e6" /><polygon points="1343.0,793.9 1269.4,825.7 1280.9,851.9 1354.9,819.0" fill="#1f9430" /><polygon points="1352.2,797.0 1332.3,805.7 1338.5,819.0 1358.5,810.1" fill="#a2643a" /><polygon points="1332.4,806.0 1314.2,814.0 1320.1,826.7 1338.3,818.6" fill="#e6e6e6" /><polygon points="1568.5,681.9 1550.7,689.5 1554.2,695.6 1572.0,687.9" fill="#1f9430" /><polygon points="1571.6,687.2 1553.8,694.9 1557.3,701.0 1575.2,693.3" fill="#1f9430" /><polygon points="1574.8,692.6 1556.9,700.3 1560.5,706.4 1578.3,698.6" fill="#1f9430" /><polygon points="1577.9,698.0 1560.1,705.7 1563.6,711.9 1581.5,704.1" fill="#1f9430" /><polygon points="1581.1,703.4 1563.2,711.2 1566.8,717.4 1584.7,709.5" fill="#1f9430" /><polygon points="1584.3,708.8 1566.4,716.7 1570.0,722.9 1587.9,715.0" fill="#1f9430" /><polygon points="1587.5,714.3 1569.6,722.2 1573.2,728.5 1591.2,720.4" fill="#1f9430" /><polygon points="1590.7,719.8 1572.8,727.8 1576.4,734.0 1594.4,726.0" fill="#1f9430" /><polygon points="1594.0,725.3 1576.0,733.3 1579.7,739.6 1597.6,731.5" fill="#1f9430" /><polygon points="1597.2,730.8 1579.3,738.9 1582.9,745.2 1600.9,737.0" fill="#1f9430" /><polygon points="1600.5,736.3 1582.5,744.5 1586.2,750.9 1604.2,742.6" fill="#1f9430" /><polygon points="1603.8,741.9 1585.8,750.1 1589.5,756.5 1607.5,748.2" fill="#1f9430" /><polygon points="1607.1,747.5 1589.1,755.8 1592.8,762.2 1610.8,753.9" fill="#1f9430" /><polygon points="1610.4,753.1 1592.4,761.5 1596.1,767.9 1614.1,759.5" fill="#1f9430" /><polygon points="1613.7,758.8 1595.7,767.2 1599.4,773.7 1617.5,765.2" fill="#1f9430" /><polygon points="1617.1,764.5 1599.0,772.9 1602.7,779.4 1620.8,770.9" fill="#1f9430" /><polygon points="1620.4,770.2 1602.3,778.7 1606.1,785.2 1624.2,776.6" fill="#1f9430" /><polygon points="1623.8,775.9 1605.7,784.5 1609.5,791.0 1627.6,782.4" fill="#1f9430" /><polygon points="1627.2,781.7 1609.0,790.3 1612.9,796.9 1631.0,788.2" fill="#1f9430" /><polygon points="1630.6,787.4 1612.4,796.1 1616.3,802.8 1634.4,794.0" fill="#1f9430" /><polygon points="1634.0,793.2 1615.8,802.0 1619.7,808.6 1637.8,799.8" fill="#1f9430" /><polygon points="1637.4,799.1 1619.2,807.9 1623.1,814.6 1641.3,805.7" fill="#1f9430" /><polygon points="1640.8,804.9 1622.7,813.8 1626.5,820.5 1644.7,811.6" fill="#1f9430" /><polygon points="1644.3,810.8 1626.1,819.8 1630.0,826.5 1648.2,817.5" fill="#1f9430" /><polygon points="1569.1,682.9 1552.7,689.9 1555.0,693.9 1571.4,686.9" fill="#a2643a" /><polygon points="1567.1,684.1 1554.2,689.7 1556.1,693.0 1569.1,687.5" fill="#b8b8b8" /><polygon points="1570.8,682.1 1562.2,685.8 1563.7,688.3 1572.3,684.6" fill="#8e8e8e" /><polygon points="1572.2,688.3 1555.8,695.3 1558.1,699.3 1574.6,692.2" fill="#a2643a" /><polygon points="1570.3,689.5 1557.3,695.1 1559.2,698.4 1572.2,692.8" fill="#b8b8b8" /><polygon points="1574.0,687.4 1565.4,691.2 1566.9,693.7 1575.5,689.9" fill="#8e8e8e" /><polygon points="1575.4,693.6 1558.9,700.7 1561.3,704.8 1577.7,697.6" fill="#a2643a" /><polygon points="1573.4,694.9 1560.4,700.5 1562.4,703.9 1575.4,698.2" fill="#b8b8b8" /><polygon points="1577.2,692.8 1568.5,696.5 1570.0,699.1 1578.6,695.3" fill="#8e8e8e" /><polygon points="1578.6,699.0 1562.1,706.2 1564.4,710.2 1580.9,703.0" fill="#a2643a" /><polygon points="1576.6,700.3 1563.6,705.9 1565.6,709.3 1578.6,703.6" fill="#b8b8b8" /><polygon points="1580.3,698.2 1571.7,702.0 1573.2,704.5 1581.8,700.7" fill="#8e8e8e" /><polygon points="1581.7,704.4 1565.3,711.7 1567.6,715.7 1584.1,708.4" fill="#a2643a" /><polygon points="1579.8,705.7 1566.8,711.4 1568.7,714.8 1581.8,709.1" fill="#b8b8b8" /><polygon points="1583.5,703.6 1574.9,707.4 1576.4,710.0 1585.0,706.1" fill="#8e8e8e" /><polygon points="1584.9,709.9 1568.5,717.1 1570.8,721.2 1587.3,713.9" fill="#a2643a" /><polygon points="1583.0,711.1 1569.9,716.9 1571.9,720.3 1585.0,714.5" fill="#b8b8b8" /><polygon points="1586.7,709.1 1578.1,712.9 1579.6,715.4 1588.2,711.6" fill="#8e8e8e" /><polygon points="1588.1,715.3 1571.7,722.7 1574.0,726.7 1590.5,719.4" fill="#a2643a" /><polygon points="1586.2,716.6 1573.1,722.4 1575.1,725.8 1588.2,720.0" fill="#b8b8b8" /><polygon points="1589.9,714.5 1581.3,718.4 1582.8,720.9 1591.4,717.1" fill="#8e8e8e" /><polygon points="1591.4,720.8 1574.9,728.2 1577.2,732.3 1593.8,724.9" fill="#a2643a" /><polygon points="1589.4,722.1 1576.4,727.9 1578.4,731.4 1591.4,725.5" fill="#b8b8b8" /><polygon points="1593.2,720.0 1584.5,723.9 1586.0,726.5 1594.7,722.6" fill="#8e8e8e" /><polygon points="1594.6,726.3 1578.1,733.8 1580.5,737.9 1597.0,730.4" fill="#a2643a" /><polygon points="1592.6,727.6 1579.6,733.5 1581.6,737.0 1594.7,731.1" fill="#b8b8b8" /><polygon points="1596.4,725.5 1587.7,729.4 1589.3,732.0 1597.9,728.1" fill="#8e8e8e" /><polygon points="1597.9,731.9 1581.3,739.3 1583.7,743.5 1600.3,736.0" fill="#a2643a" /><polygon points="1595.9,733.2 1582.8,739.1 1584.9,742.6 1597.9,736.6" fill="#b8b8b8" /><polygon points="1599.7,731.0 1591.0,735.0 1592.5,737.6 1601.2,733.6" fill="#8e8e8e" /><polygon points="1601.1,737.4 1584.6,745.0 1587.0,749.1 1603.6,741.5" fill="#a2643a" /><polygon points="1599.2,738.7 1586.1,744.7 1588.1,748.2 1601.2,742.2" fill="#b8b8b8" /><polygon points="1602.9,736.6 1594.3,740.6 1595.8,743.2 1604.5,739.2" fill="#8e8e8e" /><polygon points="1604.4,743.0 1587.9,750.6 1590.3,754.8 1606.9,747.1" fill="#a2643a" /><polygon points="1602.4,744.3 1589.4,750.3 1591.4,753.8 1604.5,747.8" fill="#b8b8b8" /><polygon points="1606.2,742.2 1597.5,746.2 1599.1,748.8 1607.8,744.8" fill="#8e8e8e" /><polygon points="1607.7,748.6 1591.1,756.3 1593.6,760.4 1610.2,752.8" fill="#a2643a" /><polygon points="1605.7,749.9 1592.6,756.0 1594.7,759.5 1607.8,753.4" fill="#b8b8b8" /><polygon points="1609.5,747.8 1600.8,751.8 1602.4,754.4 1611.1,750.4" fill="#8e8e8e" /><polygon points="1611.0,754.2 1594.4,761.9 1596.9,766.1 1613.5,758.4" fill="#a2643a" /><polygon points="1609.1,755.6 1595.9,761.7 1598.0,765.2 1611.1,759.1" fill="#b8b8b8" /><polygon points="1612.8,753.4 1604.1,757.5 1605.7,760.1 1614.4,756.1" fill="#8e8e8e" /><polygon points="1614.4,759.9 1597.7,767.6 1600.2,771.9 1616.8,764.1" fill="#a2643a" /><polygon points="1612.4,761.2 1599.3,767.4 1601.3,770.9 1614.5,764.8" fill="#b8b8b8" /><polygon points="1616.2,759.1 1607.5,763.1 1609.0,765.8 1617.7,761.7" fill="#8e8e8e" /><polygon points="1617.7,765.6 1601.1,773.4 1603.5,777.6 1620.2,769.8" fill="#a2643a" /><polygon points="1615.7,766.9 1602.6,773.1 1604.7,776.7 1617.8,770.5" fill="#b8b8b8" /><polygon points="1619.5,764.8 1610.8,768.9 1612.4,771.5 1621.1,767.4" fill="#8e8e8e" /><polygon points="1621.1,771.3 1604.4,779.1 1606.9,783.4 1623.5,775.5" fill="#a2643a" /><polygon points="1619.1,772.6 1605.9,778.9 1608.0,782.5 1621.2,776.2" fill="#b8b8b8" /><polygon points="1622.9,770.5 1614.1,774.6 1615.7,777.3 1624.4,773.1" fill="#8e8e8e" /><polygon points="1624.4,777.0 1607.8,784.9 1610.3,789.2 1626.9,781.3" fill="#a2643a" /><polygon points="1622.4,778.4 1609.3,784.6 1611.4,788.3 1624.5,782.0" fill="#b8b8b8" /><polygon points="1626.2,776.2 1617.5,780.4 1619.1,783.1 1627.8,778.9" fill="#8e8e8e" /><polygon points="1627.8,782.8 1611.1,790.7 1613.6,795.1 1630.3,787.0" fill="#a2643a" /><polygon points="1625.8,784.2 1612.7,790.5 1614.8,794.1 1627.9,787.8" fill="#b8b8b8" /><polygon points="1629.6,782.0 1620.9,786.1 1622.5,788.8 1631.2,784.7" fill="#8e8e8e" /><polygon points="1631.2,788.6 1614.5,796.6 1617.0,800.9 1633.7,792.8" fill="#a2643a" /><polygon points="1629.2,789.9 1616.0,796.3 1618.2,799.9 1631.4,793.6" fill="#b8b8b8" /><polygon points="1633.0,787.7 1624.3,792.0 1625.9,794.7 1634.6,790.4" fill="#8e8e8e" /><polygon points="1634.6,794.4 1617.9,802.5 1620.4,806.8 1637.2,798.7" fill="#a2643a" /><polygon points="1632.6,795.8 1619.5,802.2 1621.6,805.8 1634.8,799.4" fill="#b8b8b8" /><polygon points="1636.5,793.6 1627.7,797.8 1629.3,800.5 1638.1,796.3" fill="#8e8e8e" /><polygon points="1638.1,800.2 1621.3,808.3 1623.9,812.7 1640.6,804.5" fill="#a2643a" /><polygon points="1636.1,801.6 1622.9,808.0 1625.0,811.7 1638.2,805.3" fill="#b8b8b8" /><polygon points="1639.9,799.4 1631.1,803.7 1632.7,806.4 1641.5,802.1" fill="#8e8e8e" /><polygon points="1641.5,806.1 1624.8,814.3 1627.3,818.7 1644.1,810.4" fill="#a2643a" /><polygon points="1639.5,807.5 1626.3,814.0 1628.4,817.7 1641.7,811.1" fill="#b8b8b8" /><polygon points="1643.3,805.2 1634.6,809.6 1636.2,812.3 1645.0,808.0" fill="#8e8e8e" /><polygon points="1645.0,812.0 1628.2,820.2 1630.8,824.6 1647.5,816.3" fill="#a2643a" /><polygon points="1643.0,813.4 1629.8,819.9 1631.9,823.6 1645.1,817.1" fill="#b8b8b8" /><polygon points="1646.8,811.1 1638.0,815.5 1639.6,818.2 1648.4,813.9" fill="#8e8e8e" /><polygon points="1567.1,683.0 1568.0,679.4 1755.5,599.2 1837.6,719.2 1836.7,722.8 1646.0,817.3" fill="#161616" /><polygon points="1755.5,599.2 1568.0,679.4 1646.9,813.7 1837.6,719.2" fill="url(#gmem)"/><ellipse cx="1823.4" cy="713.5" rx="5.6" ry="5.2" fill="#d9d9d9"/><text x="0" y="5" font-size="15" font-weight="700" font-style="italic" fill="#e4e4e4" text-anchor="middle" transform="translate(1704.5 701) rotate(157.5)" font-family="Liberation Sans, sans-serif">Micron</text><polyline points="1533.3,681.8 1511.2,691.1" fill="none" stroke="#ffffff" stroke-width="1.6" stroke-linecap="round" stroke-linejoin="round" stroke-linecap="butt"/><polyline points="1542.0,697.0 1519.9,706.5" fill="none" stroke="#ffffff" stroke-width="1.6" stroke-linecap="round" stroke-linejoin="round" stroke-linecap="butt"/><polygon points="1516.9,691.3 1517.3,689.5 1530.6,683.9 1536.9,695.0 1536.4,696.8 1523.2,702.4" fill="#109010" /><polygon points="1530.6,683.9 1517.3,689.5 1523.6,700.6 1536.9,694.9" fill="#1ee21e" /><polyline points="1527.8,705.7 1531.2,736.5 1556.2,781.0" fill="none" stroke="#ffffff" stroke-width="1.2" stroke-linecap="round" stroke-linejoin="round" /><polygon points="1530.9,743.5 1531.7,740.2 1550.8,731.8 1567.4,761.0 1566.5,764.2 1547.4,773.0" fill="#222226" /><polygon points="1550.8,731.8 1531.7,740.3 1548.2,769.8 1567.4,761.0" fill="#3d3d42" /><polygon points="1560.4,753.6 1545.8,760.3 1548.3,764.8 1562.9,758.1" fill="#d0d0d0" /><polygon points="1563.2,770.7 1555.3,774.3 1560.4,783.4 1568.3,779.7" fill="#c8c8c8" /><polyline points="1523.3,740.0 1548.2,784.7" fill="none" stroke="#ffffff" stroke-width="2" stroke-linecap="round" stroke-linejoin="round" stroke-linecap="butt"/><polygon points="1616.5,811.8 1609.8,815.1 1615.1,824.3 1621.9,821.0" fill="#e6e6e6" /><polygon points="1600.1,783.3 1593.4,786.5 1598.6,795.6 1605.3,792.4" fill="#e6e6e6" /><polygon points="1605.3,817.3 1598.6,820.5 1603.9,829.9 1610.7,826.6" fill="#e6e6e6" /><polygon points="1589.0,788.6 1582.2,791.8 1587.4,800.9 1594.2,797.7" fill="#e6e6e6" /><polygon points="1594.1,822.8 1587.3,826.1 1592.6,835.5 1599.4,832.1" fill="#e6e6e6" /><polygon points="1577.7,793.9 1571.0,797.1 1576.1,806.3 1582.9,803.1" fill="#e6e6e6" /><polygon points="1572.7,807.9 1573.6,804.3 1610.6,786.7 1621.9,806.0 1621.0,809.6 1583.8,827.7" fill="#181818" /><polygon points="1610.6,786.7 1573.6,804.3 1584.7,824.1 1621.9,806.0" fill="#303030" /><polygon points="1582.6,835.9 1565.2,844.4 1570.5,853.9 1587.9,845.4" fill="#c8c8c8" /><polygon points="1544.2,814.2 1545.5,809.1 1569.6,797.7 1587.9,830.3 1586.7,835.4 1562.4,847.3" fill="#c07600" /><polygon points="1569.6,797.7 1545.5,809.1 1563.7,842.2 1587.9,830.3" fill="#f0a000" /><polygon points="1584.6,824.4 1560.4,836.3 1563.7,842.2 1587.9,830.3" fill="#e09200" /><polygon points="1798.9,652.0 1799.3,650.6 1805.2,647.9 1812.9,659.0 1812.6,660.4 1806.6,663.2" fill="#8a8a8a" /><polygon points="1799.3,650.6 1807.0,661.8 1812.9,659.0 1805.2,647.9" fill="#c4c4c4" /><polygon points="1801.1,653.2 1805.2,659.1 1811.1,656.4 1807.0,650.5" fill="#7a4a1c" /><polygon points="1490.9,718.6 1503.2,741.0 1520.9,733.2 1508.5,711.0" fill="#1f9430" /><polygon points="1494.6,719.8 1504.4,737.6 1517.2,732.0 1507.4,714.3" fill="#a2643a" /><polygon points="1498.7,721.2 1499.1,719.8 1506.5,716.6 1513.4,729.1 1513.0,730.5 1505.7,733.8" fill="#8a8a8a" /><polygon points="1499.1,719.8 1506.0,732.3 1513.4,729.1 1506.5,716.6" fill="#c4c4c4" /><polygon points="1500.7,722.7 1504.4,729.4 1511.8,726.2 1508.1,719.5" fill="#7a4a1c" /><polygon points="1563.1,750.8 1576.1,773.6 1593.3,765.6 1580.2,743.0" fill="#1f9430" /><polygon points="1566.7,752.0 1577.1,770.1 1589.6,764.3 1579.2,746.4" fill="#a2643a" /><polygon points="1570.9,753.5 1571.3,752.0 1578.5,748.8 1585.8,761.5 1585.4,762.9 1578.2,766.2" fill="#8a8a8a" /><polygon points="1571.3,752.0 1578.6,764.8 1585.8,761.4 1578.5,748.8" fill="#c4c4c4" /><polygon points="1573.0,755.0 1576.8,761.8 1584.0,758.5 1580.2,751.7" fill="#7a4a1c" /><polygon points="1522.7,784.0 1535.6,807.6 1553.5,799.2 1540.5,775.8" fill="#1f9430" /><polygon points="1526.4,785.3 1536.7,804.0 1549.7,797.9 1539.4,779.3" fill="#a2643a" /><polygon points="1530.7,786.8 1531.0,785.3 1538.5,781.9 1545.8,795.0 1545.4,796.5 1537.9,800.0" fill="#8a8a8a" /><polygon points="1531.0,785.3 1538.3,798.5 1545.8,795.0 1538.5,781.9" fill="#c4c4c4" /><polygon points="1532.7,788.4 1536.6,795.4 1544.1,791.9 1540.2,784.9" fill="#7a4a1c" /><polygon points="1519.5,850.3 1532.8,875.3 1551.3,866.2 1537.9,841.4" fill="#1f9430" /><polygon points="1523.4,851.6 1534.0,871.5 1547.4,864.8 1536.8,845.1" fill="#a2643a" /><polygon points="1527.8,853.2 1528.2,851.7 1535.9,848.0 1543.4,861.9 1543.0,863.3 1535.3,867.1" fill="#8a8a8a" /><polygon points="1528.2,851.7 1535.6,865.7 1543.4,861.9 1535.9,848.0" fill="#c4c4c4" /><polygon points="1529.9,855.0 1533.9,862.4 1541.6,858.6 1537.6,851.2" fill="#7a4a1c" /><polygon points="1404.8,732.2 1379.9,742.7 1388.8,760.3 1413.7,749.6" fill="#1f9430" /><polygon points="1403.5,735.6 1383.7,743.9 1390.1,756.8 1410.0,748.3" fill="#a2643a" /><polygon points="1388.0,745.4 1388.4,744.0 1402.3,738.1 1406.1,745.4 1405.7,746.8 1391.7,752.8" fill="#8a8a8a" /><polygon points="1402.3,738.1 1388.4,744.0 1392.1,751.3 1406.1,745.4" fill="#c4c4c4" /><polygon points="1399.1,739.4 1391.7,742.6 1395.4,749.9 1402.8,746.8" fill="#7a4a1c" /><polygon points="1410.2,902.5 1423.0,929.0 1443.1,919.1 1430.2,892.8" fill="#1f9430" /><polygon points="1414.2,903.8 1424.4,924.9 1439.0,917.7 1428.8,896.8" fill="#a2643a" /><polygon points="1418.8,905.4 1419.2,904.0 1427.6,899.9 1434.8,914.7 1434.4,916.1 1426.0,920.3" fill="#8a8a8a" /><polygon points="1419.2,904.0 1426.4,918.8 1434.8,914.7 1427.6,899.9" fill="#c4c4c4" /><polygon points="1420.9,907.5 1424.7,915.3 1433.1,911.2 1429.3,903.4" fill="#7a4a1c" /><polygon points="1519.0,732.3 1502.0,739.8 1509.9,754.2 1527.0,746.6" fill="#1f9430" /><polygon points="1517.9,735.7 1505.6,741.1 1511.0,750.8 1523.3,745.4" fill="#a2643a" /><polygon points="1509.8,742.5 1510.1,741.6 1516.9,738.6 1519.3,743.0 1519.1,743.9 1512.3,746.9" fill="#8a8a8a" /><polygon points="1516.9,738.6 1510.1,741.6 1512.5,746.0 1519.3,743.0" fill="#c4c4c4" /><polygon points="1513.8,740.0 1513.1,740.3 1515.6,744.7 1516.3,744.4" fill="#444" /><polygon points="1372.2,746.6 1347.3,757.1 1356.5,776.2 1381.5,765.4" fill="#1f9430" /><polygon points="1370.8,750.1 1351.1,758.4 1358.0,772.6 1377.7,764.1" fill="#a2643a" /><polygon points="1355.5,759.9 1355.8,758.4 1369.5,752.6 1373.8,761.2 1373.4,762.7 1359.7,768.5" fill="#8a8a8a" /><polygon points="1369.5,752.6 1355.8,758.4 1360.0,767.1 1373.8,761.2" fill="#c4c4c4" /><polygon points="1366.2,754.0 1359.2,757.0 1363.4,765.6 1370.4,762.6" fill="#3a3a3a" /><polygon points="1319.6,770.4 1330.7,794.0 1351.8,784.9 1340.6,761.6" fill="#1f9430" /><polygon points="1323.5,771.8 1332.3,790.3 1348.0,783.6 1339.1,765.1" fill="#a2643a" /><polygon points="1327.9,773.3 1328.2,771.8 1337.8,767.8 1343.9,780.6 1343.6,782.1 1334.0,786.2" fill="#8a8a8a" /><polygon points="1328.2,771.8 1334.4,784.7 1343.9,780.6 1337.8,767.8" fill="#c4c4c4" /><polygon points="1329.7,775.0 1332.8,781.6 1342.4,777.5 1339.3,770.9" fill="#3a3a3a" /><polygon points="1308.0,778.1 1270.0,794.2 1280.3,817.2 1318.5,800.7" fill="#1f9430" /><polygon points="1306.5,781.8 1273.9,795.5 1282.0,813.4 1314.6,799.3" fill="#a2643a" /><polygon points="1278.4,797.1 1278.8,795.6 1305.0,784.5 1310.5,796.4 1310.2,797.8 1283.8,809.1" fill="#8a8a8a" /><polygon points="1305.0,784.5 1278.8,795.6 1284.2,807.7 1310.5,796.4" fill="#c4c4c4" /><polygon points="1301.5,786.0 1282.3,794.1 1287.8,806.2 1307.0,797.9" fill="#3a3a3a" /><polygon points="1393.5,918.6 1353.3,938.1 1366.5,967.1 1406.9,946.9" fill="#1f9430" /><polygon points="1392.0,922.7 1357.4,939.5 1368.1,962.8 1402.8,945.5" fill="#a2643a" /><polygon points="1362.2,941.1 1362.8,938.6 1390.9,924.8 1398.7,941.4 1398.1,943.9 1369.8,957.9" fill="#8a8a8a" /><polygon points="1390.9,924.8 1362.8,938.6 1370.5,955.4 1398.7,941.4" fill="#c4c4c4" /><polygon points="1387.3,926.6 1366.4,936.8 1374.1,953.6 1395.1,943.1" fill="#7a4a08" /><polyline points="1793.8,650.3 1805.8,667.8" fill="none" stroke="#ffffff" stroke-width="2" stroke-linecap="round" stroke-linejoin="round" stroke-linecap="butt"/><polyline points="1507.8,713.7 1518.1,732.1" fill="none" stroke="#ffffff" stroke-width="2" stroke-linecap="round" stroke-linejoin="round" stroke-linecap="butt"/><polyline points="1493.7,719.7 1504.0,738.3" fill="none" stroke="#ffffff" stroke-width="2" stroke-linecap="round" stroke-linejoin="round" stroke-linecap="butt"/><polyline points="1579.6,745.7 1590.4,764.4" fill="none" stroke="#ffffff" stroke-width="2" stroke-linecap="round" stroke-linejoin="round" stroke-linecap="butt"/><polyline points="1565.9,751.9 1576.7,770.8" fill="none" stroke="#ffffff" stroke-width="2" stroke-linecap="round" stroke-linejoin="round" stroke-linecap="butt"/><polyline points="1539.8,778.6 1550.6,798.0" fill="none" stroke="#ffffff" stroke-width="2" stroke-linecap="round" stroke-linejoin="round" stroke-linecap="butt"/><polyline points="1525.5,785.2 1536.3,804.7" fill="none" stroke="#ffffff" stroke-width="2" stroke-linecap="round" stroke-linejoin="round" stroke-linecap="butt"/><polyline points="1537.2,844.4 1548.3,864.9" fill="none" stroke="#ffffff" stroke-width="2" stroke-linecap="round" stroke-linejoin="round" stroke-linecap="butt"/><polyline points="1522.5,851.5 1533.5,872.3" fill="none" stroke="#ffffff" stroke-width="2" stroke-linecap="round" stroke-linejoin="round" stroke-linecap="butt"/><polyline points="1429.3,896.0 1440.0,917.8" fill="none" stroke="#ffffff" stroke-width="2" stroke-linecap="round" stroke-linejoin="round" stroke-linecap="butt"/><polyline points="1413.3,903.7 1423.9,925.8" fill="none" stroke="#ffffff" stroke-width="2" stroke-linecap="round" stroke-linejoin="round" stroke-linecap="butt"/><polyline points="1338.9,764.4 1348.4,784.3" fill="none" stroke="#ffffff" stroke-width="2" stroke-linecap="round" stroke-linejoin="round" stroke-linecap="butt"/><polyline points="1323.1,771.1 1332.5,791.1" fill="none" stroke="#ffffff" stroke-width="2" stroke-linecap="round" stroke-linejoin="round" stroke-linecap="butt"/><polyline points="1404.1,734.9 1383.4,743.6" fill="none" stroke="#ffffff" stroke-width="2" stroke-linecap="round" stroke-linejoin="round" stroke-linecap="butt"/><polyline points="1411.0,748.3 1390.3,757.2" fill="none" stroke="#ffffff" stroke-width="2" stroke-linecap="round" stroke-linejoin="round" stroke-linecap="butt"/><polyline points="1370.2,749.8 1351.5,757.7" fill="none" stroke="#ffffff" stroke-width="2" stroke-linecap="round" stroke-linejoin="round" stroke-linecap="butt"/><polyline points="1377.6,764.7 1358.8,772.7" fill="none" stroke="#ffffff" stroke-width="2" stroke-linecap="round" stroke-linejoin="round" stroke-linecap="butt"/><polyline points="1268.7,795.5 1308.1,778.8" fill="none" stroke="#ffffff" stroke-width="2.4" stroke-linecap="round" stroke-linejoin="round" stroke-linecap="butt"/><polyline points="1406.4,944.2 1360.6,967.1" fill="none" stroke="#ffffff" stroke-width="2.4" stroke-linecap="round" stroke-linejoin="round" stroke-linecap="butt"/><polyline points="1287.8,816.9 1346.5,791.5 1362.8,825.6" fill="none" stroke="#ffffff" stroke-width="2.8" stroke-linecap="round" stroke-linejoin="round" stroke-linecap="butt"/><polyline points="1341.6,936.1 1399.1,908.2 1380.3,868.8" fill="none" stroke="#ffffff" stroke-width="2.8" stroke-linecap="round" stroke-linejoin="round" stroke-linecap="butt"/><polyline points="1834.8,729.2 1653.6,819.5" fill="none" stroke="#ffffff" stroke-width="1.8" stroke-linecap="round" stroke-linejoin="round" stroke-linecap="butt"/><polyline points="1533.7,811.1 1524.4,815.5" fill="none" stroke="#ffffff" stroke-width="2" stroke-linecap="round" stroke-linejoin="round" stroke-linecap="butt"/><polyline points="1526.5,808.6 1531.6,817.9" fill="none" stroke="#ffffff" stroke-width="2" stroke-linecap="round" stroke-linejoin="round" stroke-linecap="butt"/><polyline points="1462.4,743.4 1471.7,739.3 1476.5,748.2" fill="none" stroke="#ffffff" stroke-width="2.2" stroke-linecap="round" stroke-linejoin="round" stroke-linecap="butt"/><polyline points="1377.6,780.1 1367.6,784.5 1372.2,793.9" fill="none" stroke="#ffffff" stroke-width="2.2" stroke-linecap="round" stroke-linejoin="round" stroke-linecap="butt"/><polyline points="1514.7,841.7 1524.2,837.1 1519.1,827.6" fill="none" stroke="#ffffff" stroke-width="2.2" stroke-linecap="round" stroke-linejoin="round" stroke-linecap="butt"/><polyline points="1428.3,883.1 1418.1,888.0 1413.2,877.9" fill="none" stroke="#ffffff" stroke-width="2.2" stroke-linecap="round" stroke-linejoin="round" stroke-linecap="butt"/><circle cx="1840.8" cy="710.6" r="2.6" fill="#fff"/><circle cx="1538.8" cy="686.6" r="3" fill="#fff"/><circle cx="1561.3" cy="790.1" r="3" fill="#fff"/><circle cx="1596.3" cy="845.7" r="3" fill="#fff"/><circle cx="1359.5" cy="789.5" r="3.3" fill="#fff"/><text x="1659.7" y="633.4" font-size="10.5" fill="#fff" text-anchor="middle" transform="rotate(157 1659.7 633.4)" font-family="Liberation Sans, sans-serif">D2</text><text x="1819.7" y="672.9" font-size="10.5" fill="#fff" text-anchor="middle" transform="rotate(67 1819.7 672.9)" font-family="Liberation Sans, sans-serif">C9</text><text x="1536.0" y="712.8" font-size="10.5" fill="#fff" text-anchor="middle" transform="rotate(100 1536.0 712.8)" font-family="Liberation Sans, sans-serif">V1</text><text x="1491.5" y="736.2" font-size="10.5" fill="#fff" text-anchor="middle" transform="rotate(67 1491.5 736.2)" font-family="Liberation Sans, sans-serif">C12</text><text x="1502.9" y="754.6" font-size="10.5" fill="#fff" text-anchor="middle" transform="rotate(67 1502.9 754.6)" font-family="Liberation Sans, sans-serif">R4</text><text x="1528.8" y="765.3" font-size="10.5" fill="#fff" text-anchor="middle" transform="rotate(67 1528.8 765.3)" font-family="Liberation Sans, sans-serif">VD</text><text x="1597.9" y="777.2" font-size="10.5" fill="#fff" text-anchor="middle" transform="rotate(67 1597.9 777.2)" font-family="Liberation Sans, sans-serif">C10</text><text x="1515.2" y="795.7" font-size="10.5" fill="#fff" text-anchor="middle" transform="rotate(67 1515.2 795.7)" font-family="Liberation Sans, sans-serif">C3</text><text x="1616.9" y="832.5" font-size="10.5" fill="#fff" text-anchor="middle" transform="rotate(157 1616.9 832.5)" font-family="Liberation Sans, sans-serif">D1</text><text x="1579.2" y="858.9" font-size="10.5" fill="#fff" text-anchor="middle" transform="rotate(157 1579.2 858.9)" font-family="Liberation Sans, sans-serif">C11</text><text x="1530.4" y="876.9" font-size="10.5" fill="#fff" text-anchor="middle" transform="rotate(157 1530.4 876.9)" font-family="Liberation Sans, sans-serif">C4</text><text x="1393.3" y="769.1" font-size="10.5" fill="#fff" text-anchor="middle" transform="rotate(157 1393.3 769.1)" font-family="Liberation Sans, sans-serif">C8</text><text x="1365.7" y="786.7" font-size="10.5" fill="#fff" text-anchor="middle" transform="rotate(157 1365.7 786.7)" font-family="Liberation Sans, sans-serif">R2</text><text x="1324.3" y="790.3" font-size="10.5" fill="#fff" text-anchor="middle" transform="rotate(67 1324.3 790.3)" font-family="Liberation Sans, sans-serif">R3</text><text x="1379.8" y="844.7" font-size="10.5" fill="#fff" text-anchor="middle" transform="rotate(67 1379.8 844.7)" font-family="Liberation Sans, sans-serif">X1</text><text x="1412.4" y="922.6" font-size="10.5" fill="#fff" text-anchor="middle" transform="rotate(67 1412.4 922.6)" font-family="Liberation Sans, sans-serif">C2</text><text x="1275.2" y="810.0" font-size="10.5" fill="#fff" text-anchor="middle" transform="rotate(157 1275.2 810.0)" font-family="Liberation Sans, sans-serif">K1</text><rect x="1459.6" y="743.8" width="3.2" height="3.2" fill="#b4b6e8" transform="rotate(-24 1461.2 745.4)"/><rect x="1454.5" y="746.1" width="3.2" height="3.2" fill="#b4b6e8" transform="rotate(-24 1456.1 747.7)"/><rect x="1449.2" y="748.4" width="3.2" height="3.2" fill="#b4b6e8" transform="rotate(-24 1450.8 750.0)"/><rect x="1444.0" y="750.6" width="3.2" height="3.2" fill="#b4b6e8" transform="rotate(-24 1445.6 752.2)"/><rect x="1438.8" y="752.9" width="3.2" height="3.2" fill="#b4b6e8" transform="rotate(-24 1440.4 754.5)"/><rect x="1433.5" y="755.2" width="3.2" height="3.2" fill="#b4b6e8" transform="rotate(-24 1435.1 756.8)"/><rect x="1428.2" y="757.5" width="3.2" height="3.2" fill="#b4b6e8" transform="rotate(-24 1429.8 759.1)"/><rect x="1422.9" y="759.8" width="3.2" height="3.2" fill="#b4b6e8" transform="rotate(-24 1424.5 761.4)"/><rect x="1417.6" y="762.1" width="3.2" height="3.2" fill="#b4b6e8" transform="rotate(-24 1419.2 763.7)"/><rect x="1412.2" y="764.4" width="3.2" height="3.2" fill="#b4b6e8" transform="rotate(-24 1413.8 766.0)"/><rect x="1406.9" y="766.8" width="3.2" height="3.2" fill="#b4b6e8" transform="rotate(-24 1408.5 768.4)"/><rect x="1401.5" y="769.1" width="3.2" height="3.2" fill="#b4b6e8" transform="rotate(-24 1403.1 770.7)"/><rect x="1396.0" y="771.5" width="3.2" height="3.2" fill="#b4b6e8" transform="rotate(-24 1397.6 773.1)"/><rect x="1390.6" y="773.8" width="3.2" height="3.2" fill="#b4b6e8" transform="rotate(-24 1392.2 775.4)"/><rect x="1385.2" y="776.2" width="3.2" height="3.2" fill="#b4b6e8" transform="rotate(-24 1386.8 777.8)"/><rect x="1379.7" y="778.6" width="3.2" height="3.2" fill="#b4b6e8" transform="rotate(-24 1381.3 780.2)"/><rect x="1511.0" y="840.6" width="3.2" height="3.2" fill="#b4b6e8" transform="rotate(-24 1512.6 842.2)"/><rect x="1505.7" y="843.1" width="3.2" height="3.2" fill="#b4b6e8" transform="rotate(-24 1507.3 844.7)"/><rect x="1500.4" y="845.6" width="3.2" height="3.2" fill="#b4b6e8" transform="rotate(-24 1502.0 847.2)"/><rect x="1495.1" y="848.2" width="3.2" height="3.2" fill="#b4b6e8" transform="rotate(-24 1496.7 849.8)"/><rect x="1489.8" y="850.8" width="3.2" height="3.2" fill="#b4b6e8" transform="rotate(-24 1491.4 852.4)"/><rect x="1484.4" y="853.3" width="3.2" height="3.2" fill="#b4b6e8" transform="rotate(-24 1486.0 854.9)"/><rect x="1479.0" y="855.9" width="3.2" height="3.2" fill="#b4b6e8" transform="rotate(-24 1480.6 857.5)"/><rect x="1473.6" y="858.5" width="3.2" height="3.2" fill="#b4b6e8" transform="rotate(-24 1475.2 860.1)"/><rect x="1468.2" y="861.1" width="3.2" height="3.2" fill="#b4b6e8" transform="rotate(-24 1469.8 862.7)"/><rect x="1462.7" y="863.7" width="3.2" height="3.2" fill="#b4b6e8" transform="rotate(-24 1464.3 865.3)"/><rect x="1457.2" y="866.4" width="3.2" height="3.2" fill="#b4b6e8" transform="rotate(-24 1458.8 868.0)"/><rect x="1451.8" y="869.0" width="3.2" height="3.2" fill="#b4b6e8" transform="rotate(-24 1453.4 870.6)"/><rect x="1446.2" y="871.7" width="3.2" height="3.2" fill="#b4b6e8" transform="rotate(-24 1447.8 873.3)"/><rect x="1440.7" y="874.3" width="3.2" height="3.2" fill="#b4b6e8" transform="rotate(-24 1442.3 875.9)"/><rect x="1435.1" y="877.0" width="3.2" height="3.2" fill="#b4b6e8" transform="rotate(-24 1436.7 878.6)"/><rect x="1429.5" y="879.7" width="3.2" height="3.2" fill="#b4b6e8" transform="rotate(-24 1431.1 881.3)"/><rect x="1475.0" y="749.1" width="3.2" height="3.2" fill="#b4b6e8" transform="rotate(-24 1476.6 750.7)"/><rect x="1477.7" y="754.0" width="3.2" height="3.2" fill="#b4b6e8" transform="rotate(-24 1479.3 755.6)"/><rect x="1480.3" y="759.0" width="3.2" height="3.2" fill="#b4b6e8" transform="rotate(-24 1481.9 760.6)"/><rect x="1483.0" y="764.0" width="3.2" height="3.2" fill="#b4b6e8" transform="rotate(-24 1484.6 765.6)"/><rect x="1485.7" y="769.0" width="3.2" height="3.2" fill="#b4b6e8" transform="rotate(-24 1487.3 770.6)"/><rect x="1488.4" y="774.0" width="3.2" height="3.2" fill="#b4b6e8" transform="rotate(-24 1490.0 775.6)"/><rect x="1491.1" y="779.0" width="3.2" height="3.2" fill="#b4b6e8" transform="rotate(-24 1492.7 780.6)"/><rect x="1493.8" y="784.1" width="3.2" height="3.2" fill="#b4b6e8" transform="rotate(-24 1495.4 785.7)"/><rect x="1496.5" y="789.1" width="3.2" height="3.2" fill="#b4b6e8" transform="rotate(-24 1498.1 790.7)"/><rect x="1499.2" y="794.2" width="3.2" height="3.2" fill="#b4b6e8" transform="rotate(-24 1500.8 795.8)"/><rect x="1502.0" y="799.3" width="3.2" height="3.2" fill="#b4b6e8" transform="rotate(-24 1503.6 800.9)"/><rect x="1504.7" y="804.5" width="3.2" height="3.2" fill="#b4b6e8" transform="rotate(-24 1506.3 806.1)"/><rect x="1507.5" y="809.6" width="3.2" height="3.2" fill="#b4b6e8" transform="rotate(-24 1509.1 811.2)"/><rect x="1510.2" y="814.8" width="3.2" height="3.2" fill="#b4b6e8" transform="rotate(-24 1511.8 816.4)"/><rect x="1513.0" y="820.0" width="3.2" height="3.2" fill="#b4b6e8" transform="rotate(-24 1514.6 821.6)"/><rect x="1515.8" y="825.2" width="3.2" height="3.2" fill="#b4b6e8" transform="rotate(-24 1517.4 826.8)"/><rect x="1373.8" y="793.6" width="3.2" height="3.2" fill="#b4b6e8" transform="rotate(-24 1375.4 795.2)"/><rect x="1376.3" y="798.8" width="3.2" height="3.2" fill="#b4b6e8" transform="rotate(-24 1377.9 800.4)"/><rect x="1378.9" y="804.0" width="3.2" height="3.2" fill="#b4b6e8" transform="rotate(-24 1380.5 805.6)"/><rect x="1381.4" y="809.3" width="3.2" height="3.2" fill="#b4b6e8" transform="rotate(-24 1383.0 810.9)"/><rect x="1384.0" y="814.6" width="3.2" height="3.2" fill="#b4b6e8" transform="rotate(-24 1385.6 816.2)"/><rect x="1386.6" y="819.9" width="3.2" height="3.2" fill="#b4b6e8" transform="rotate(-24 1388.2 821.5)"/><rect x="1389.2" y="825.2" width="3.2" height="3.2" fill="#b4b6e8" transform="rotate(-24 1390.8 826.8)"/><rect x="1391.8" y="830.5" width="3.2" height="3.2" fill="#b4b6e8" transform="rotate(-24 1393.4 832.1)"/><rect x="1394.4" y="835.9" width="3.2" height="3.2" fill="#b4b6e8" transform="rotate(-24 1396.0 837.5)"/><rect x="1397.1" y="841.3" width="3.2" height="3.2" fill="#b4b6e8" transform="rotate(-24 1398.7 842.9)"/><rect x="1399.7" y="846.7" width="3.2" height="3.2" fill="#b4b6e8" transform="rotate(-24 1401.3 848.3)"/><rect x="1402.3" y="852.1" width="3.2" height="3.2" fill="#b4b6e8" transform="rotate(-24 1403.9 853.7)"/><rect x="1405.0" y="857.6" width="3.2" height="3.2" fill="#b4b6e8" transform="rotate(-24 1406.6 859.2)"/><rect x="1407.7" y="863.0" width="3.2" height="3.2" fill="#b4b6e8" transform="rotate(-24 1409.3 864.6)"/><rect x="1410.4" y="868.5" width="3.2" height="3.2" fill="#b4b6e8" transform="rotate(-24 1412.0 870.1)"/><rect x="1413.1" y="874.1" width="3.2" height="3.2" fill="#b4b6e8" transform="rotate(-24 1414.7 875.7)"/><polygon points="1376.8,794.0 1377.6,790.8 1381.0,782.1 1464.7,745.7 1473.5,748.7 1516.1,828.4 1515.3,831.6 1512.5,840.5 1427.4,881.2 1417.9,878.0" fill="#0c0c0c" /><polygon points="1464.7,745.7 1381.0,782.1 1377.6,790.8 1418.7,874.8 1428.2,878.0 1513.3,837.2 1516.1,828.4 1473.5,748.7" fill="url(#gqfp)"/><polygon points="1464.4,752.0 1386.7,786.0 1384.7,791.2 1423.0,868.9 1428.6,870.8 1507.5,833.2 1509.2,828.0 1469.7,753.8" fill="#191919" /><circle cx="1394.9" cy="791.8" r="3" fill="none" stroke="#3c3c3c" stroke-width="1"/><polygon points="1021.4,899.0 1245.8,805.4 1252.5,815.0 1290.0,836.0 1327.3,830.8 1350.0,887.0 1316.0,905.0 1300.0,926.0 1315.0,956.5 1079.0,1066.0" fill="url(#gmetal)" /><polygon points="1078.0,1063.0 1314.0,953.5 1322.5,969.5 1320.0,972.0 1098.0,1078.0 1088.0,1080.0 1081.0,1076.0" fill="url(#gside)" /><polyline points="1021.4,899.0 1245.8,805.4" stroke="#b9b9b9" stroke-width="1" fill="none"/><polygon points="1109.6,888.2 1140.3,876.7 1152.3,909.6 1121.6,921.6" fill="#2a2a2a" /><polygon points="1113.9,900.2 1144.6,888.5 1150.1,903.7 1119.4,915.6" fill="#c08a48" /><polygon points="1143.0,976.4 1173.7,963.8 1187.0,1000.4 1155.0,1013.0" fill="#2a2a2a" /><polygon points="1149.2,995.4 1180.6,982.8 1187.0,1000.4 1155.0,1013.0" fill="#c08a48" /><polyline points="1143.0,976.4 1173.7,963.8" stroke="#c08a48" stroke-width="1.5" fill="none"/><polygon points="1239.1,889.0 1256.5,882.9 1263.2,900.2 1247.2,907.7" fill="none" stroke="#6f6f6f" stroke-width="0.8"/><polygon points="1252.0,816.7 1308.2,794.4 1312.4,801.7 1315.5,819.0 1322.0,822.8 1322.7,829.4 1314.9,831.2 1288.3,840.3 1281.7,847.5 1262.3,839.7" fill="#2b2b2b" /><polyline points="1289.5,842.2 1314.5,832.6" stroke="#dcdcdc" stroke-width="1.6" fill="none" stroke-dasharray="1.2 0.6"/><polygon points="1298.8,926.3 1311.3,903.8 1350.0,892.5 1356.3,900.0 1357.5,912.5 1368.8,922.5 1368.8,928.8 1322.5,950.0 1312.5,953.8" fill="#1c1c1c" /><polygon points="1300.5,925.0 1312.3,905.6 1349.5,894.5 1355.0,901.0 1356.0,913.0 1366.5,922.0 1321.0,943.5 1311.0,946.0" fill="#2e2e2e" /><polyline points="1316.0,906.3 1340.0,898.5" stroke="#9a9a9a" stroke-width="1.4" fill="none" stroke-dasharray="1.2 0.6"/><path d="M1838 1017 L1801 1032" stroke="#ff1010" stroke-width="2.2"/><path d="M1797 1034 l8 -6.5 l2.4 6z" fill="#ff1010"/><path d="M1840 1019 L1853 1044" stroke="#18e018" stroke-width="2.2"/><path d="M1855 1049 l-6.5 -7 l6.5 -2.4z" fill="#18e018"/><path d="M1839 1016 L1842 1007" stroke="#1010f0" stroke-width="2.2"/><path d="M1843 999 l3.5 9 l-8 -1z" fill="#1010f0"/><path d="M1838 1006 l8 2" stroke="#1010f0" stroke-width="2.5"/><polygon points="1832,1016 1840,1011 1846,1018 1838,1024" fill="#f4e020"/><text x="1790" y="1042" font-size="13" fill="#ff1010" font-family="Liberation Sans, sans-serif">X</text><text x="1853" y="1063" font-size="13" fill="#18e018" font-family="Liberation Sans, sans-serif">Y</text><text x="1838" y="1001" font-size="13" fill="#1010f0" font-family="Liberation Sans, sans-serif">Z</text></svg><div class="b" style="left:254px;top:100px;width:430px;height:36px;background:#fff;border:1px solid #dfe5e5;box-sizing:border-box;border-radius:6px;box-shadow:0 1px 3px rgba(0,0,0,.15);"></div><div class="b" style="left:501px;top:105px;width:27px;height:27px;background:#b3d5d2;border-radius:5px;"></div><div class="b" style="left:566px;top:105px;width:27px;height:27px;background:#b3d5d2;border-radius:5px;"></div><div class="b" style="left:650px;top:105px;width:27px;height:27px;background:#b3d5d2;border-radius:5px;"></div><svg class="b" style="left:263.5px;top:109.0px;" width="18" height="18" viewBox="0 0 16 16"><g  fill="none" stroke="#3f4749" stroke-width="0.9" stroke-linecap="round" stroke-linejoin="round"><path d="M2.4 3.2Q2.4 2.4 3.2 2.4H10.6L12.6 4.4V7M6.8 12.6H3.2Q2.4 12.6 2.4 11.8V3.2" fill="#fff"/><path d="M4.6 2.5V5.2H9.6V2.5M4.4 12.5V8.6H8"/></g><g  fill="none" stroke="#4355c9" stroke-width="0.81" stroke-linecap="round" stroke-linejoin="round"><path d="M11.4 8 14.6 9.6V13L11.4 14.6 8.2 13V9.6Z" fill="#dfe4fb"/><path d="M8.2 9.6 11.4 11.2 14.6 9.6M11.4 11.2V14.6"/></g></svg><svg class="b" style="left:301.0px;top:109.0px;" width="18" height="18" viewBox="0 0 16 16"><g  fill="none" stroke="#3f4749" stroke-width="0.99" stroke-linecap="round" stroke-linejoin="round"><path d="M8.2 2 14.2 12.6 2 12.8Z" fill="#fff"/><path d="M8.2 2 7.8 9.6M2 12.8 7.8 9.6 14.2 12.6" /></g></svg><svg class="b" style="left:328.5px;top:109.0px;" width="18" height="18" viewBox="0 0 16 16"><g  fill="none" stroke="#3f4749" stroke-width="0.77" stroke-linecap="round" stroke-linejoin="round"><path d="M2.2 3.9 8.9 1.5 14.3 3.5 13.9 11.0 8.2 14.2 2.8 11.6Z" fill="#fff"/><path d="M2.2 3.9 8.9 1.5 14.3 3.5 8.2 6.4Z" fill="#4355c9" stroke="none"/><path d="M2.2 3.9 8.9 1.5 14.3 3.5 13.9 11.0 8.2 14.2 2.8 11.6Z" fill="none"/><path d="M8.2 6.4L2.2 3.9M8.2 6.4L14.3 3.5M8.2 6.4L8.2 14.2" fill="none"/><path d="M8.9 9.2L8.9 1.5M8.9 9.2L2.8 11.6M8.9 9.2L13.9 11.0" fill="none" stroke-width="0.6"/></g></svg><svg class="b" style="left:356.5px;top:109.0px;" width="18" height="18" viewBox="0 0 16 16"><g  fill="none" stroke="#3f4749" stroke-width="0.77" stroke-linecap="round" stroke-linejoin="round"><path d="M2.2 3.9 8.9 1.5 14.3 3.5 13.9 11.0 8.2 14.2 2.8 11.6Z" fill="#fff"/><path d="M2.2 3.9 8.9 1.5 8.9 9.2 2.8 11.6Z" fill="#4355c9" stroke="none"/><path d="M2.2 3.9 8.9 1.5 14.3 3.5 13.9 11.0 8.2 14.2 2.8 11.6Z" fill="none"/><path d="M8.2 6.4L2.2 3.9M8.2 6.4L14.3 3.5M8.2 6.4L8.2 14.2" fill="none"/><path d="M8.9 9.2L8.9 1.5M8.9 9.2L2.8 11.6M8.9 9.2L13.9 11.0" fill="none" stroke-width="0.6"/></g></svg><svg class="b" style="left:384.5px;top:109.0px;" width="18" height="18" viewBox="0 0 16 16"><g  fill="none" stroke="#3f4749" stroke-width="0.77" stroke-linecap="round" stroke-linejoin="round"><path d="M2.2 3.9 8.9 1.5 14.3 3.5 13.9 11.0 8.2 14.2 2.8 11.6Z" fill="#fff"/><path d="M8.9 1.5 14.3 3.5 13.9 11.0 8.9 9.2Z" fill="#4355c9" stroke="none"/><path d="M2.2 3.9 8.9 1.5 14.3 3.5 13.9 11.0 8.2 14.2 2.8 11.6Z" fill="none"/><path d="M8.2 6.4L2.2 3.9M8.2 6.4L14.3 3.5M8.2 6.4L8.2 14.2" fill="none"/><path d="M8.9 9.2L8.9 1.5M8.9 9.2L2.8 11.6M8.9 9.2L13.9 11.0" fill="none" stroke-width="0.6"/></g></svg><svg class="b" style="left:412.5px;top:109.0px;" width="18" height="18" viewBox="0 0 16 16"><g  fill="none" stroke="#3f4749" stroke-width="0.77" stroke-linecap="round" stroke-linejoin="round"><path d="M2.2 3.9 8.9 1.5 14.3 3.5 13.9 11.0 8.2 14.2 2.8 11.6Z" fill="#fff"/><path d="M2.8 11.6 8.9 9.2 13.9 11.0 8.2 14.2Z" fill="#4355c9" stroke="none"/><path d="M2.2 3.9 8.9 1.5 14.3 3.5 13.9 11.0 8.2 14.2 2.8 11.6Z" fill="none"/><path d="M8.2 6.4L2.2 3.9M8.2 6.4L14.3 3.5M8.2 6.4L8.2 14.2" fill="none"/><path d="M8.9 9.2L8.9 1.5M8.9 9.2L2.8 11.6M8.9 9.2L13.9 11.0" fill="none" stroke-width="0.6"/></g></svg><svg class="b" style="left:440.5px;top:109.0px;" width="18" height="18" viewBox="0 0 16 16"><g  fill="none" stroke="#3f4749" stroke-width="0.77" stroke-linecap="round" stroke-linejoin="round"><path d="M2.2 3.9 8.9 1.5 14.3 3.5 13.9 11.0 8.2 14.2 2.8 11.6Z" fill="#fff"/><path d="M8.2 6.4 14.3 3.5 13.9 11.0 8.2 14.2Z" fill="#4355c9" stroke="none"/><path d="M2.2 3.9 8.9 1.5 14.3 3.5 13.9 11.0 8.2 14.2 2.8 11.6Z" fill="none"/><path d="M8.2 6.4L2.2 3.9M8.2 6.4L14.3 3.5M8.2 6.4L8.2 14.2" fill="none"/><path d="M8.9 9.2L8.9 1.5M8.9 9.2L2.8 11.6M8.9 9.2L13.9 11.0" fill="none" stroke-width="0.6"/></g></svg><svg class="b" style="left:468.5px;top:109.0px;" width="18" height="18" viewBox="0 0 16 16"><g  fill="none" stroke="#3f4749" stroke-width="0.77" stroke-linecap="round" stroke-linejoin="round"><path d="M2.2 3.9 8.9 1.5 14.3 3.5 13.9 11.0 8.2 14.2 2.8 11.6Z" fill="#fff"/><path d="M2.2 3.9 8.2 6.4 8.2 14.2 2.8 11.6Z" fill="#4355c9" stroke="none"/><path d="M2.2 3.9 8.9 1.5 14.3 3.5 13.9 11.0 8.2 14.2 2.8 11.6Z" fill="none"/><path d="M8.2 6.4L2.2 3.9M8.2 6.4L14.3 3.5M8.2 6.4L8.2 14.2" fill="none"/><path d="M8.9 9.2L8.9 1.5M8.9 9.2L2.8 11.6M8.9 9.2L13.9 11.0" fill="none" stroke-width="0.6"/></g></svg><svg class="b" style="left:505.5px;top:109.0px;" width="18" height="18" viewBox="0 0 16 16"><g  fill="none" stroke="#2a3032" stroke-width="0.45" stroke-linecap="round" stroke-linejoin="round"><path d="M2.2 3.9 8.9 1.5 14.3 3.5 8.2 6.4Z" fill="#5a6264"/><path d="M2.2 3.9 8.2 6.4 8.2 14.2 2.8 11.6Z" fill="#3f4749"/><path d="M8.2 6.4 14.3 3.5 13.9 11.0 8.2 14.2Z" fill="#2a3032"/></g></svg><svg class="b" style="left:542.5px;top:109.0px;" width="18" height="18" viewBox="0 0 16 16"><g  fill="none" stroke="#3f4749" stroke-width="0.77" stroke-linecap="round" stroke-linejoin="round"><path d="M2.2 3.9 8.9 1.5 14.3 3.5 13.9 11.0 8.2 14.2 2.8 11.6Z" fill="#e2e6e6"/><path d="M2.2 3.9 8.9 1.5 14.3 3.5 13.9 11.0 8.2 14.2 2.8 11.6Z" fill="none"/><path d="M8.2 6.4L2.2 3.9M8.2 6.4L14.3 3.5M8.2 6.4L8.2 14.2" fill="none"/></g></svg><svg class="b" style="left:570.5px;top:109.0px;" width="18" height="18" viewBox="0 0 16 16"><g  fill="none" stroke="#6b7a7a" stroke-width="0.77" stroke-linecap="round" stroke-linejoin="round"><path d="M2.2 3.9 8.9 1.5 14.3 3.5 13.9 11.0 8.2 14.2 2.8 11.6Z" fill="#b5c9c8"/><path d="M2.2 3.9 8.9 1.5 14.3 3.5 13.9 11.0 8.2 14.2 2.8 11.6Z" fill="none"/><path d="M8.2 6.4L2.2 3.9M8.2 6.4L14.3 3.5M8.2 6.4L8.2 14.2" fill="none"/></g></svg><svg class="b" style="left:598.5px;top:109.0px;" width="18" height="18" viewBox="0 0 16 16"><g  fill="none" stroke="#3f4749" stroke-width="0.77" stroke-linecap="round" stroke-linejoin="round"><path d="M2.2 3.9 8.9 1.5 14.3 3.5 13.9 11.0 8.2 14.2 2.8 11.6Z" fill="#fff"/><path d="M2.2 3.9 8.9 1.5 14.3 3.5 13.9 11.0 8.2 14.2 2.8 11.6Z" fill="none"/><path d="M8.2 6.4L2.2 3.9M8.2 6.4L14.3 3.5M8.2 6.4L8.2 14.2" fill="none"/><path d="M8.9 9.2L8.9 1.5M8.9 9.2L2.8 11.6M8.9 9.2L13.9 11.0" fill="none" stroke-width="0.6"/></g></svg><svg class="b" style="left:626.5px;top:109.0px;" width="18" height="18" viewBox="0 0 16 16"><g  fill="none" stroke="#3f4749" stroke-width="0.77" stroke-linecap="round" stroke-linejoin="round"><path d="M2.2 3.9 8.9 1.5 14.3 3.5 13.9 11.0 8.2 14.2 2.8 11.6Z" fill="#fff"/><path d="M2.2 3.9 8.9 1.5 14.3 3.5 13.9 11.0 8.2 14.2 2.8 11.6Z" fill="none"/><path d="M8.2 6.4L2.2 3.9M8.2 6.4L14.3 3.5M8.2 6.4L8.2 14.2" fill="none"/></g></svg><svg class="b" style="left:654.5px;top:109.0px;" width="18" height="18" viewBox="0 0 16 16"><g  fill="none" stroke="#5a6a8a" stroke-width="0.77" stroke-linecap="round" stroke-linejoin="round"><path d="M2.2 3.9 8.9 1.5 14.3 3.5 13.9 11.0 8.2 14.2 2.8 11.6Z" fill="#dfe4fb"/><path d="M2.2 3.9 8.9 1.5 14.3 3.5 13.9 11.0 8.2 14.2 2.8 11.6Z" fill="none"/><path d="M8.2 6.4L2.2 3.9M8.2 6.4L14.3 3.5M8.2 6.4L8.2 14.2" fill="none"/></g><text x="5.2" y="11.8" font-size="5.5" font-weight="700" fill="#4355c9" text-anchor="middle" font-family="Liberation Sans, sans-serif">B</text></svg><div class="b" style="left:291px;top:109px;width:1px;height:18px;background:#c6d2d2;"></div><div class="b" style="left:496px;top:109px;width:1px;height:18px;background:#c6d2d2;"></div><div class="b" style="left:533px;top:109px;width:1px;height:18px;background:#c6d2d2;"></div></div><div class="b" style="left:0px;top:0px;width:1920px;height:1px;background:#bccaca;"></div><div class="b" style="left:0px;top:1159px;width:1920px;height:1px;background:#bccaca;"></div><div class="b" style="left:840px;top:0px;width:48px;height:1px;background:#1976d2;"></div><div class="b" style="left:888px;top:0px;width:193px;height:1px;background:#d5dddd;"></div></div></body></html>
